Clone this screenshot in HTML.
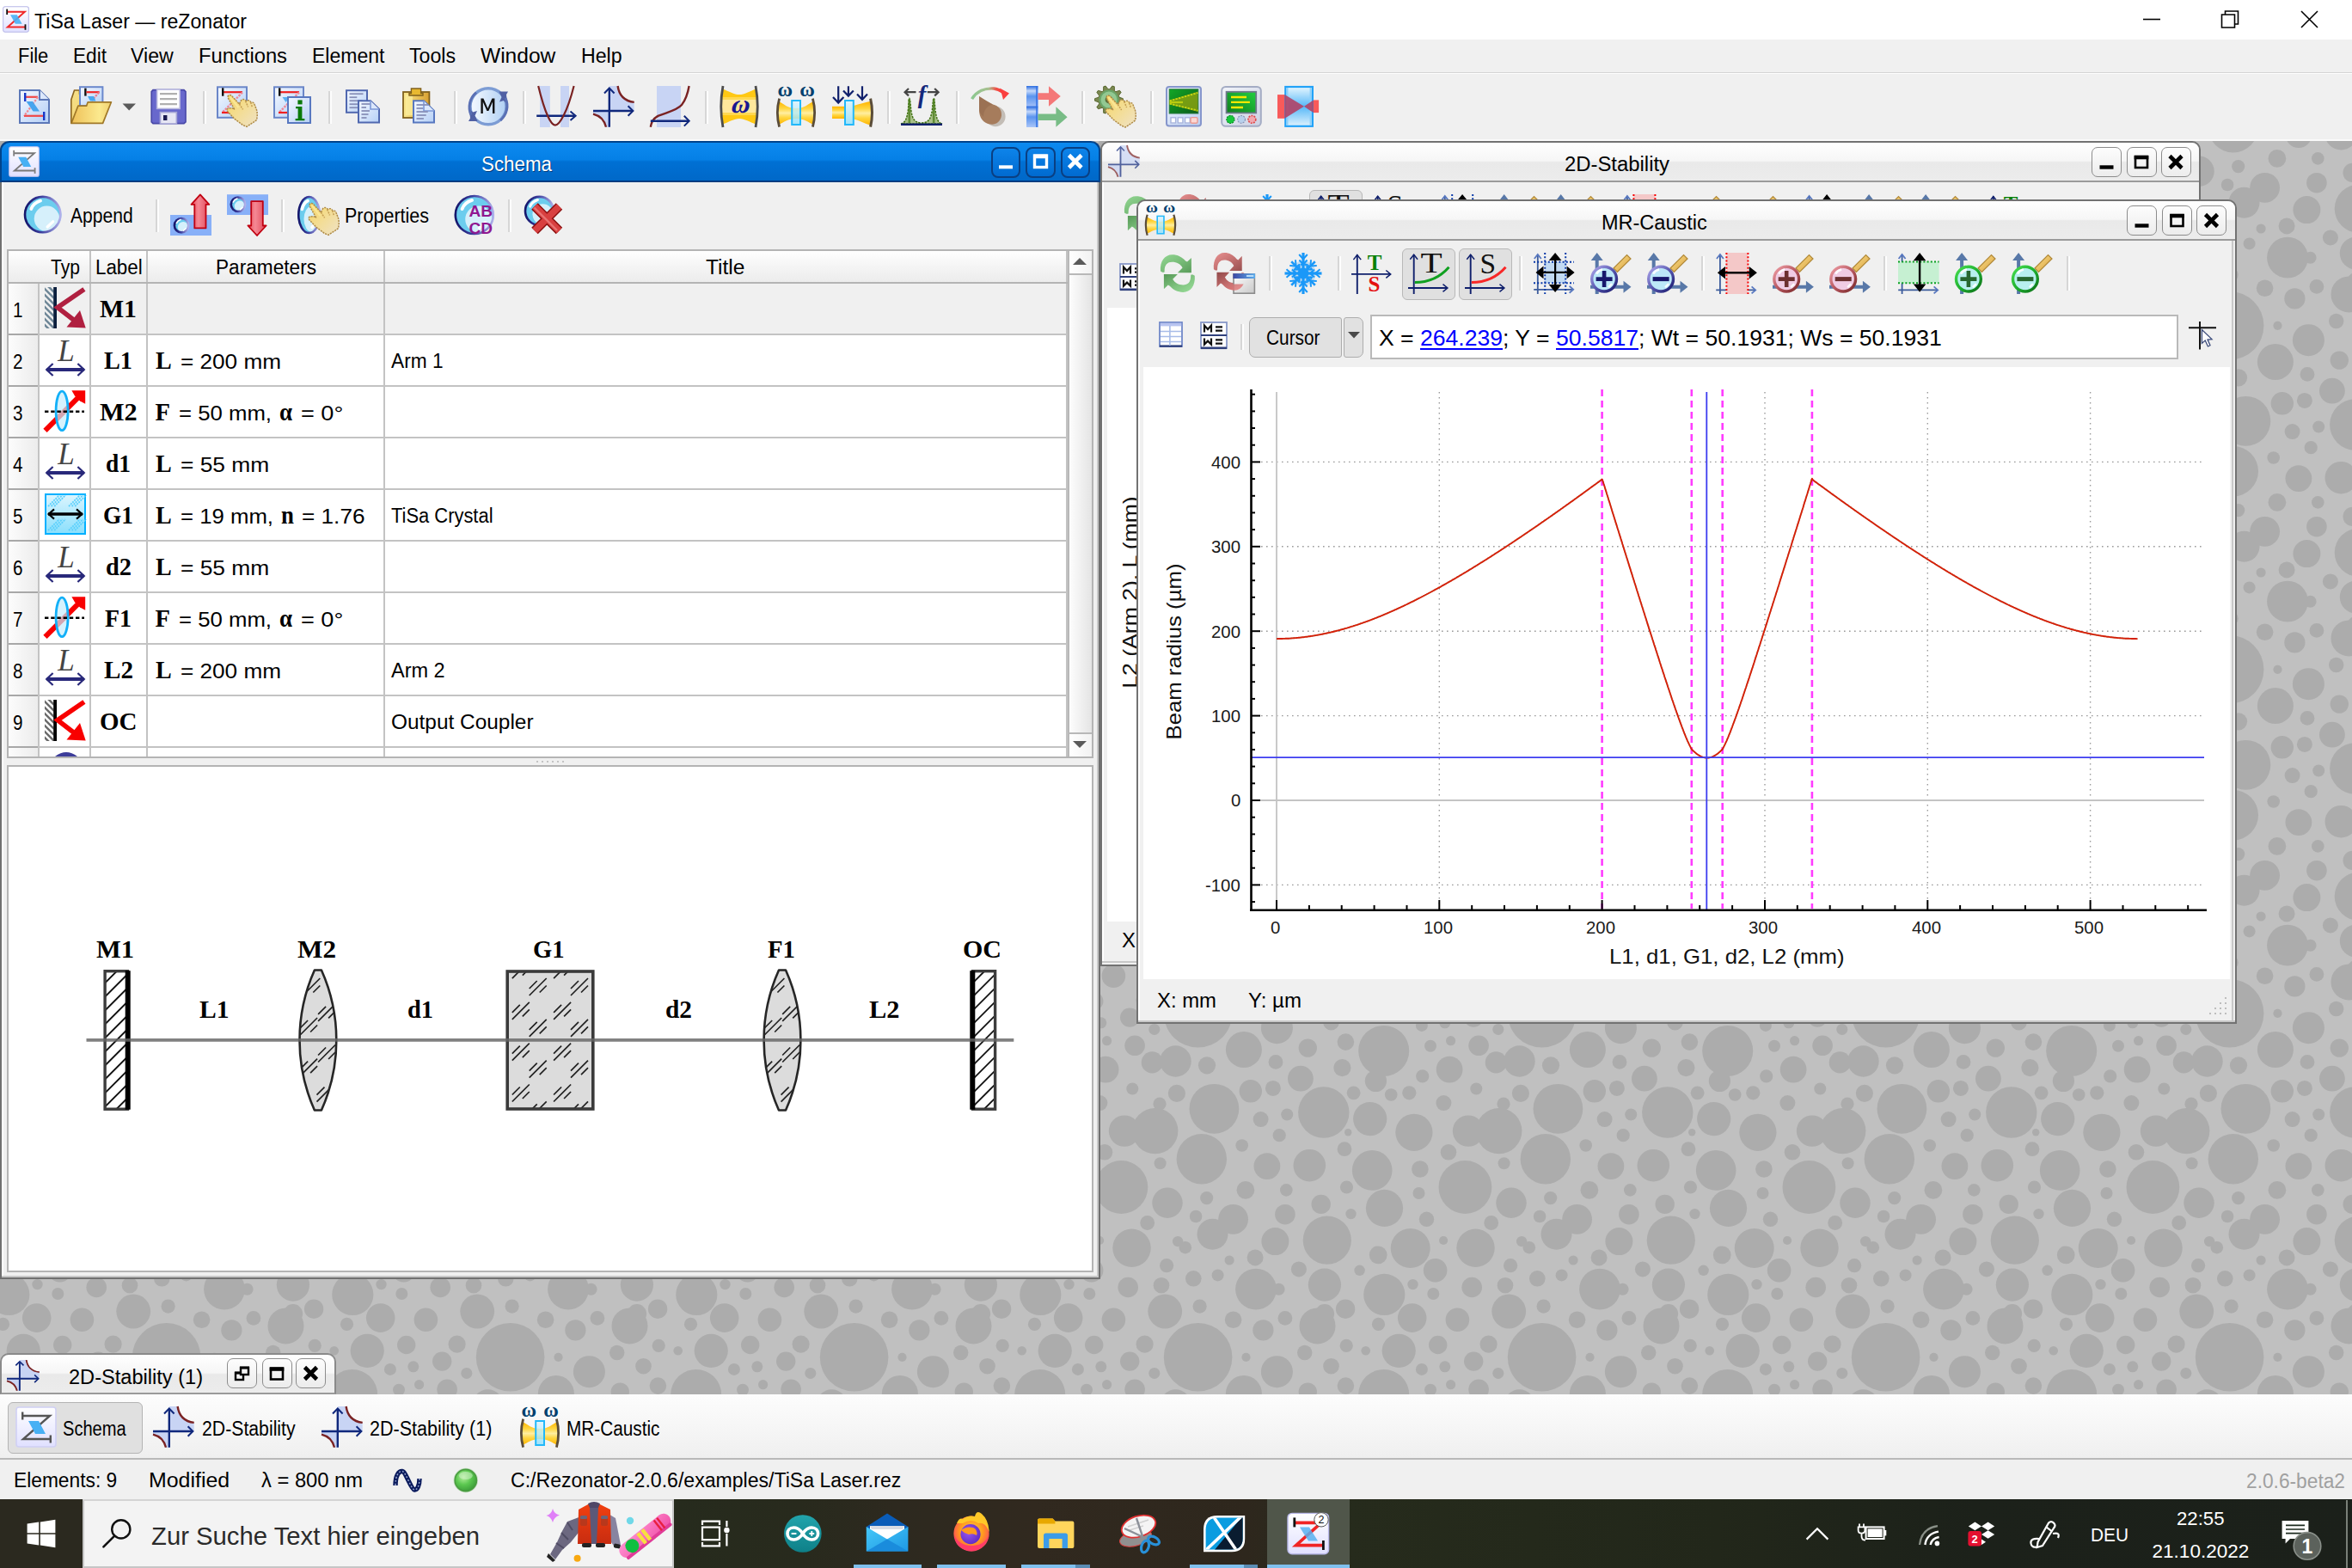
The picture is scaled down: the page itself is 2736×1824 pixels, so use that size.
<!DOCTYPE html><html><head><meta charset="utf-8"><title>TiSa Laser — reZonator</title><style>
*{box-sizing:border-box;margin:0;padding:0}
html,body{width:2736px;height:1824px;overflow:hidden;background:#f0f0f0}
body{font-family:"Liberation Sans",sans-serif;font-size:23.5px;color:#000;position:relative}
.t{position:absolute;white-space:pre;transform-origin:0 50%;display:block}
.abs{position:absolute}
.sf{font-family:"Liberation Serif",serif}
svg{position:absolute;overflow:visible}
.sep{position:absolute;width:4px;margin-left:-1px;background:linear-gradient(90deg,#d6d6d6 0 2px,#fdfdfd 2px 4px)}
.wb{position:absolute;border:1.5px solid #8c8c8c;border-radius:7px;background:linear-gradient(#fdfdfd,#ececec)}
</style></head><body>
<div style="position:absolute;left:0px;top:0px;width:2736px;height:46px;background:#fff"></div>
<svg style="left:3px;top:7px" width="31" height="31" viewBox="0 0 48 48"><rect x="1" y="1" width="46" height="46" rx="3.5" fill="url(#gtitle)" stroke="#b8b8e8" stroke-width="1.6"/><path d="M8 10.5H40L9 38H41" fill="none" stroke="#f02828" stroke-width="3"/><path d="M14 16H26L35 32H23Z" fill="#48b0f4" opacity=".9"/><rect x="6.6" y="5.5" width="2.8" height="10" fill="#111"/><rect x="39.6" y="33" width="2.8" height="10" fill="#111"/></svg>
<span class="t" style="left:40.00px;top:13.51px;font-size:23.5px;line-height:23.5px;transform:scaleX(0.9833);">TiSa Laser — reZonator</span>
<svg style="left:0;top:0" width="2736" height="46" viewBox="0 0 2736 46"><g stroke="#000" stroke-width="1.6" fill="none"><path d="M2493 22.5h20"/><path d="M2584.5 17h15v15h-15z M2588.5 17v-4h15v15h-4"/><path d="M2677 13l19 19M2696 13l-19 19"/></g></svg>
<div style="position:absolute;left:0px;top:46px;width:2736px;height:39px;background:#f0f0f0"></div>
<span class="t" style="left:20.70px;top:53.51px;font-size:23.5px;line-height:23.5px;transform:scaleX(0.9322);">File</span>
<span class="t" style="left:85.00px;top:53.51px;font-size:23.5px;line-height:23.5px;transform:scaleX(0.9631);">Edit</span>
<span class="t" style="left:152.30px;top:53.51px;font-size:23.5px;line-height:23.5px;transform:scaleX(0.9839);">View</span>
<span class="t" style="left:231.00px;top:53.51px;font-size:23.5px;line-height:23.5px;transform:scaleX(1.0110);">Functions</span>
<span class="t" style="left:363.30px;top:53.51px;font-size:23.5px;line-height:23.5px;transform:scaleX(0.9790);">Element</span>
<span class="t" style="left:476.00px;top:53.51px;font-size:23.5px;line-height:23.5px;transform:scaleX(0.9843);">Tools</span>
<span class="t" style="left:558.70px;top:53.51px;font-size:23.5px;line-height:23.5px;transform:scaleX(1.0445);">Window</span>
<span class="t" style="left:675.70px;top:53.51px;font-size:23.5px;line-height:23.5px;transform:scaleX(0.9849);">Help</span>
<div style="position:absolute;left:0px;top:84px;width:2736px;height:2px;background:linear-gradient(#d4d4d4 0 1px,#fff 1px 2px)"></div>
<div style="position:absolute;left:0px;top:86px;width:2736px;height:79px;background:#f0f0f0"></div>
<svg width="0" height="0" style="position:absolute"><defs>
<linearGradient id="gpage" x1="0" y1="0" x2="1" y2="1"><stop offset="0" stop-color="#f4f8ff"/><stop offset="1" stop-color="#b4cff6"/></linearGradient>
<linearGradient id="gfold" x1="0" y1="0" x2="1" y2="1"><stop offset="0" stop-color="#f6e08a"/><stop offset=".5" stop-color="#f4d878"/><stop offset="1" stop-color="#d8a840"/></linearGradient>
<linearGradient id="gfoldf" x1="0" y1="0" x2="1" y2="0"><stop offset="0" stop-color="#eec058"/><stop offset=".7" stop-color="#fbe98e"/><stop offset="1" stop-color="#f0d070"/></linearGradient>
<linearGradient id="gclip" x1="0" y1="0" x2="1" y2="0"><stop offset="0" stop-color="#fbe98e"/><stop offset="1" stop-color="#d8a030"/></linearGradient>
<radialGradient id="glens" cx=".62" cy=".62" r=".62"><stop offset="0" stop-color="#e2f5fd"/><stop offset=".62" stop-color="#d0effb"/><stop offset=".68" stop-color="#74cfee"/><stop offset="1" stop-color="#52b8e4"/></radialGradient>
<linearGradient id="glensb" x1="0" y1="0" x2="1" y2="0"><stop offset="0" stop-color="#15156a"/><stop offset=".45" stop-color="#3c3c9c"/><stop offset="1" stop-color="#b0b0ea"/></linearGradient>
<linearGradient id="gM" x1="0" y1="0" x2="1" y2="0"><stop offset="0" stop-color="#f6faff"/><stop offset="1" stop-color="#b0d0f4"/></linearGradient>
<linearGradient id="gredarr" x1="0" y1="0" x2="1" y2="0"><stop offset="0" stop-color="#e8505c"/><stop offset=".4" stop-color="#f58894"/><stop offset="1" stop-color="#e04858"/></linearGradient>
<linearGradient id="gbeam" x1="0" y1="0" x2="0" y2="1"><stop offset="0" stop-color="#ffb400"/><stop offset=".3" stop-color="#ffd640"/><stop offset=".5" stop-color="#ffeea0"/><stop offset=".7" stop-color="#ffd640"/><stop offset="1" stop-color="#ffb400"/></linearGradient>
<linearGradient id="ggreen" x1="0" y1="0" x2="1" y2="1"><stop offset="0" stop-color="#12a826"/><stop offset="1" stop-color="#0a5a18"/></linearGradient>
<linearGradient id="ggreen2" x1="0" y1="1" x2="1" y2="0"><stop offset="0" stop-color="#0f7c1e"/><stop offset="1" stop-color="#22d040"/></linearGradient>
<linearGradient id="gcry" x1="0" y1="0" x2="0" y2="1"><stop offset="0" stop-color="#e6f6fe"/><stop offset=".5" stop-color="#56b8f8"/><stop offset="1" stop-color="#e0f2fd"/></linearGradient>
<linearGradient id="gcry2" x1="0" y1="0" x2="0" y2="1"><stop offset="0" stop-color="#dcf5fe"/><stop offset="1" stop-color="#8adffc"/></linearGradient>
<linearGradient id="gbluebar" x1="0" y1="0" x2="0" y2="1"><stop offset="0" stop-color="#2a6ce0"/><stop offset=".12" stop-color="#c4d8fa"/><stop offset=".25" stop-color="#5a94ee"/><stop offset=".48" stop-color="#9ebcf6"/><stop offset=".5" stop-color="#2a6ce0"/><stop offset=".62" stop-color="#c4d8fa"/><stop offset=".75" stop-color="#5a94ee"/><stop offset="1" stop-color="#a8c4f8"/></linearGradient>
<linearGradient id="ghand" x1="0" y1="0" x2="1" y2="1"><stop offset="0" stop-color="#f6d460"/><stop offset=".4" stop-color="#f4dc8c"/><stop offset="1" stop-color="#efe2c6"/></linearGradient>
<linearGradient id="gcurve" x1="0" y1="0" x2="1" y2="0"><stop offset="0" stop-color="#8cc890"/><stop offset=".55" stop-color="#a8c090"/><stop offset=".8" stop-color="#f05048"/><stop offset="1" stop-color="#ff3838"/></linearGradient>
<linearGradient id="gdev" x1="0" y1="0" x2="1" y2="1"><stop offset="0" stop-color="#f0f4fc"/><stop offset="1" stop-color="#bcd0f2"/></linearGradient>
<linearGradient id="gdev2" x1="0" y1="0" x2="1" y2="1"><stop offset="0" stop-color="#f2f4fa"/><stop offset="1" stop-color="#ccd2e4"/></linearGradient>
<linearGradient id="gtitle" x1="0" y1="0" x2="0" y2="1"><stop offset="0" stop-color="#fff"/><stop offset="1" stop-color="#e0e0ff"/></linearGradient>
<radialGradient id="ggrn" cx=".4" cy=".35" r=".7"><stop offset="0" stop-color="#b8f0a0"/><stop offset=".5" stop-color="#5cc850"/><stop offset="1" stop-color="#3a9a38"/></radialGradient>
</defs></svg>
<svg style="left:16px;top:100px" width="48" height="48" viewBox="0 0 48 48"><path d="M7 5H30L41 16V43H7Z" fill="url(#gpage)" stroke="#5c78b8" stroke-width="2"/><path d="M30 5V16H41" fill="#e8f0fe" stroke="#5c78b8" stroke-width="2"/><path d="M31 6L40 15H31z" fill="#dce8fc"/><path d="M14 12.8H28" stroke="#f04848" stroke-width="2.2"/><path d="M28 13L12 35" stroke="#f08890" stroke-width="2.2" stroke-dasharray="2.4 1.4"/><path d="M12 34.8H34" stroke="#f04848" stroke-width="2.2"/><path d="M14.5 18L22 18L30 29.6L22.5 29.6Z" fill="#48a4ee"/><rect x="12" y="8" width="2.4" height="10" fill="#1838c8"/><rect x="34" y="30" width="2.4" height="10" fill="#1838c8"/></svg>
<svg style="left:82px;top:100px" width="48" height="48" viewBox="0 0 48 48"><path d="M0.8 43V16L4.5 5H10.5V9H37V43Z" fill="url(#gfold)" stroke="#8a6420" stroke-width="1.6"/><rect x="11" y="1.2" width="26.4" height="22" fill="url(#gpage)" stroke="#6a88cc" stroke-width="2"/><rect x="16.2" y="2.6" width="2.4" height="9" fill="#111"/><path d="M18.5 7.2H33.6" stroke="#f02828" stroke-width="2.2"/><path d="M33 7.5L25 17" stroke="#f07888" stroke-width="2.2" stroke-dasharray="2.4 1.2"/><path d="M20 12H27L29.5 17.5H23z" fill="#48a8f0"/><path d="M1 43.4L8.8 23.2H18.6L20.2 18.8H47.4L37.6 43.4Z" fill="url(#gfoldf)" stroke="#a07828" stroke-width="1.7" stroke-linejoin="round"/></svg>
<svg style="left:172px;top:100px" width="48" height="48" viewBox="0 0 48 48"><path d="M6 4.6H42L44 6.6V41.8L42 43.6H6L4.2 41.8V6.6Z" fill="#6868cc" stroke="#4848a8" stroke-width="1.6"/><rect x="10.6" y="4" width="26.6" height="22.4" fill="#fff" stroke="#b4b4dc" stroke-width="1.6"/><path d="M14 9.2H34M14 15.2H34M14 21.2H34" stroke="#b0b0b0" stroke-width="2.2"/><rect x="14.4" y="30.6" width="19" height="13.4" fill="#e6e6f4" stroke="#a4a4d4" stroke-width="1.6"/><rect x="18" y="34" width="4.4" height="6" fill="#1a1a50"/></svg>
<svg style="left:252px;top:100px" width="48" height="48" viewBox="0 0 48 48"><rect x="1" y="1.3" width="34" height="35.5" fill="url(#gpage)" stroke="#6a86c8" stroke-width="2"/><path d="M8 7.2H30" stroke="#f02020" stroke-width="2.2"/><path d="M30 7.5L6.5 31" stroke="#ee8898" stroke-width="2.4" stroke-dasharray="2.5 1.2"/><path d="M6 31H30" stroke="#f02020" stroke-width="2.2"/><path d="M11 14l8 0 l-6 8 l-8 0z" fill="#48a8f0" opacity=".0"/><rect x="6" y="2.3" width="2.4" height="9.4" fill="#111"/><g transform="translate(0.0,0.0)"><path d="M13.2 12.6Q13 10.4 15.4 10.4L17 11L26.4 21L28.6 16.6Q31 14.4 33.4 16.6L34.6 17.4Q37.4 15.6 39.2 18L40 19Q43 18.4 44 21.2L46.6 28Q48 34 46.4 39.6L42.6 42.4L35 47.4L30.4 45.4L21 38.4L16.4 33.6L12.6 29.4Q11.4 27.2 13.4 26L17.6 25.6L20.6 27L13.6 14.6Z" fill="url(#ghand)" stroke="#b08c48" stroke-width="1.5" stroke-dasharray="2.2 1" stroke-linejoin="round"/><path d="M26.4 21L30.6 27.4M33.6 17.6L36.6 24.4M39.6 19.2L41.4 24.6" stroke="#c49c50" stroke-width="1.5" stroke-dasharray="2 1.2" fill="none"/><path d="M15.6 12.4L25.4 25" stroke="#fbe89a" stroke-width="2.4" opacity=".8" fill="none"/></g></svg>
<svg style="left:318px;top:100px" width="48" height="48" viewBox="0 0 48 48"><rect x="1" y="1.3" width="34" height="35.5" fill="url(#gpage)" stroke="#6a86c8" stroke-width="2"/><path d="M8 7.2H30" stroke="#f02020" stroke-width="2.2"/><path d="M30 7.5L6.5 31" stroke="#ee8898" stroke-width="2.4" stroke-dasharray="2.5 1.2"/><path d="M6 31H30" stroke="#f02020" stroke-width="2.2"/><path d="M11 14l8 0 l-6 8 l-8 0z" fill="#48a8f0" opacity=".0"/><rect x="6" y="2.3" width="2.4" height="9.4" fill="#111"/><path d="M10.5 13H19L14.5 19z" fill="#58b0f4"/><rect x="17" y="13" width="26" height="30" fill="url(#gpage)" stroke="#5878c0" stroke-width="2"/><rect x="28.4" y="16.4" width="5.2" height="5" fill="#0a7a0a"/><path d="M26 24H33.4V38H36.4V40.2H25.6V38H28.6V26.2H26Z" fill="#0a7a0a"/></svg>
<svg style="left:398px;top:100px" width="48" height="48" viewBox="0 0 48 48"><rect x="5" y="5.2" width="24" height="25.6" fill="url(#gpage)" stroke="#5068b0" stroke-width="2"/><path d="M8.5 9.2h16.0" stroke="#8890b8" stroke-width="1.8"/><path d="M8.5 13.2h8.8" stroke="#8890b8" stroke-width="1.8"/><path d="M8.5 17.2h15.2" stroke="#8890b8" stroke-width="1.8"/><path d="M8.5 21.2h12.8" stroke="#8890b8" stroke-width="1.8"/><path d="M8.5 25.2h9.6" stroke="#8890b8" stroke-width="1.8"/><path d="M19 17.3H33L43 27V42.6H19Z" fill="url(#gpage)" stroke="#5068b0" stroke-width="2"/><path d="M33 17.3V27H43" fill="#dce8fc" stroke="#7c98d8" stroke-width="1.6"/><path d="M22.5 21h10.0" stroke="#8890b8" stroke-width="1.8"/><path d="M22.5 25h5.5" stroke="#8890b8" stroke-width="1.8"/><path d="M22.5 29h9.5" stroke="#8890b8" stroke-width="1.8"/><path d="M22.5 33h8.0" stroke="#8890b8" stroke-width="1.8"/><path d="M22.5 37h6.0" stroke="#8890b8" stroke-width="1.8"/></svg>
<svg style="left:464px;top:100px" width="48" height="48" viewBox="0 0 48 48"><rect x="5" y="7" width="30.4" height="30" fill="url(#gclip)" stroke="#80601c" stroke-width="1.8"/><rect x="8" y="10" width="8" height="24" fill="#fbeea0" opacity=".7"/><path d="M14.4 3H25.6V8.6H28V11H12V8.6H14.4Z" fill="#e8b830" stroke="#80601c" stroke-width="1.4"/><path d="M17 17.3H29L41 29V42.6H17Z" fill="url(#gpage)" stroke="#5878c0" stroke-width="2"/><path d="M29 17.3V29H41" fill="#dce8fc" stroke="#7c98d8" stroke-width="1.6"/><path d="M20.5 22h14.0" stroke="#8890b8" stroke-width="1.8"/><path d="M20.5 26h7.7" stroke="#8890b8" stroke-width="1.8"/><path d="M20.5 30h13.3" stroke="#8890b8" stroke-width="1.8"/><path d="M20.5 34h11.2" stroke="#8890b8" stroke-width="1.8"/><path d="M20.5 38h8.4" stroke="#8890b8" stroke-width="1.8"/></svg>
<svg style="left:544px;top:100px" width="48" height="48" viewBox="0 0 48 48"><circle cx="24" cy="23.8" r="21" fill="url(#gM)" stroke="#7c9cd4" stroke-width="3.4"/><path d="M36.5 6.6H47L45 10L46 21L42 17L37 18.5L39.5 13Z" fill="#5060a4"/><path d="M11.5 41H1L3 37.6L2 26.6L6 30.6L11 29L8.5 34.6Z" fill="#5060a4"/><path d="M44 14A22 22 0 0 1 38 40" fill="none" stroke="#5a70b4" stroke-width="3"/><path d="M4 33.6A22 22 0 0 1 10 7.6" fill="none" stroke="#5a70b4" stroke-width="3"/><path d="M15.4 32V14.5H18.4L23.4 26L28.4 14.5H31.4V32H29V18.6L24.4 29H22.4L17.8 18.6V32Z" fill="#111"/></svg>
<svg style="left:624px;top:100px" width="48" height="48" viewBox="0 0 48 48"><rect x="4" y="0" width="11.8" height="48" fill="#c8d4f4"/><rect x="28" y="0" width="10" height="48" fill="#c8d4f4"/><path d="M0.2 34.8H44" stroke="#10287c" stroke-width="2.4"/><path d="M39.5 29.6L45.6 34.8L39.5 40" fill="none" stroke="#10287c" stroke-width="2"/><path d="M2.2 0C10 32 17 45.6 21.8 45.6C27 45.6 36 30 43.6 0" fill="none" stroke="#7a2222" stroke-width="2.2"/></svg>
<svg style="left:690px;top:100px" width="48" height="48" viewBox="0 0 48 48"><path d="M18.8 0H28.6C30 10 36 17.5 47.7 18.9V29H18.8Z" fill="#c8d4f4"/><path d="M18.8 29V47.7H15C13 40 8 34.5 0 32.6V29Z" fill="#c8d4f4"/><path d="M28.6 0C30 10 36 17.5 47.7 18.9" fill="none" stroke="#7a2222" stroke-width="2.4"/><path d="M0 32.6C8 34.5 13 40 15 47.7" fill="none" stroke="#7a2222" stroke-width="2.4"/><path d="M18.8 3V47.7M0 29H46" stroke="#10287c" stroke-width="2.4"/><path d="M13 8.5L18.8 2.5L24.6 8.5M40.6 23.2L46.4 29L40.6 34.8" fill="none" stroke="#10287c" stroke-width="2"/></svg>
<svg style="left:756px;top:100px" width="48" height="48" viewBox="0 0 48 48"><rect x="8" y="0" width="28" height="48" fill="#c8d4f4"/><path d="M0.8 47.7C2 40 5 37 10 34.6C22 30 32 28 37 22C41 17 44 9 45.6 0" fill="none" stroke="#7a2222" stroke-width="2.4"/><path d="M0.8 40.7H45" stroke="#10287c" stroke-width="2.4"/><path d="M39.8 34.8L45.7 40.7L39.8 46.6" fill="none" stroke="#10287c" stroke-width="2"/></svg>
<svg style="left:836px;top:100px" width="48" height="48" viewBox="0 0 48 48"><path d="M4.6 3.4C12 6 18 10 24 10C30 10 36 6 43.4 3.4Q46.4 24 43.4 44.6C36 42 30 38 24 38C18 38 12 42 4.6 44.6Q1.6 24 4.6 3.4Z" fill="#ffc814"/><path d="M3.4 15.5H44.6V31.6H3.4Z" fill="#ffe89c"/><path d="M3.4 13H44.6V15.5H3.4ZM3.4 31.6H44.6V34H3.4Z" fill="#ffd850"/><path d="M5 0Q0.5 24.0 5 48" fill="none" stroke="#4c4c4c" stroke-width="2.8"/><path d="M43 0Q47.5 24.0 43 48" fill="none" stroke="#4c4c4c" stroke-width="2.8"/><text x="24.2" y="31.4" font-family="Liberation Serif" font-weight="700" font-size="30" text-anchor="middle" fill="#181890" transform="translate(7.5,0) skewX(-14)">ω</text></svg>
<svg style="left:902px;top:100px" width="48" height="48" viewBox="0 0 48 48"><path d="M4 18C10 21 14 26 24 26C34 26 38 21 44 18Q46.5 31 44 45C38 42 34 38 24 38C14 38 10 42 4 45Q1.5 31 4 18Z" fill="url(#gbeam)"/><path d="M4.6 14.6Q0.10000000000000009 31.150000000000002 4.6 47.7" fill="none" stroke="#5a4c38" stroke-width="2.8"/><path d="M43.4 14.6Q47.9 31.150000000000002 43.4 47.7" fill="none" stroke="#5a4c38" stroke-width="2.8"/><rect x="19.2" y="17" width="9.8" height="28" fill="url(#gcry2)" fill-opacity=".78" stroke="#22b8fa" stroke-width="2"/><text x="11.2" y="11.6" font-family="Liberation Serif" font-weight="700" font-size="24" text-anchor="middle" fill="#00406e">ω</text><text x="37" y="11.6" font-family="Liberation Serif" font-weight="700" font-size="24" text-anchor="middle" fill="#00406e">ω</text></svg>
<svg style="left:968px;top:100px" width="48" height="48" viewBox="0 0 48 48"><path d="M0 23.8H15V38H0Z" fill="url(#gbeam)"/><path d="M25 23C32 21 38 19 44 18Q46.6 31 44 45.6C38 44 32 40 25 38.6Z" fill="url(#gbeam)"/><path d="M44.6 14.6Q48.4 31 44.6 47.7" fill="none" stroke="#5a4c38" stroke-width="3"/><rect x="15" y="17" width="9.8" height="28" fill="url(#gcry2)" fill-opacity=".78" stroke="#22b8fa" stroke-width="2"/><g stroke="#10206c" stroke-width="2.2" fill="none"><path d="M7.2 0.3V19.5M1 13L7.2 19.6L13.4 13"/><path d="M18.9 0.3V11.5M13 5.5L18.9 11.6L24.8 5.5"/><path d="M35 0.3V15.6M29 9.6L35 15.8L41 9.6"/></g></svg>
<svg style="left:1048px;top:100px" width="48" height="48" viewBox="0 0 48 48"><path d="M0 44C5 43 7 38 8.4 28C9 20 9.4 14.3 9.8 14.3C10.4 14.3 11 20 11.8 28C13 38 16 43 24 43C32 43 35 38 36.4 28C37.2 20 37.6 14.3 38.2 14.3C38.8 14.3 39.2 20 40 28C41.4 38 43 43 48 44Z" fill="#a9c088" stroke="#3e7010" stroke-width="1.5" stroke-dasharray="2.4 1.2"/><path d="M9.8 15V43M38.2 15V43" stroke="#4e8020" stroke-width="2.6" opacity=".8"/><path d="M0 44.8H48" stroke="#10206c" stroke-width="2.4"/><text x="24.6" y="19.6" font-family="Liberation Serif" font-style="italic" font-weight="700" font-size="28.5" text-anchor="middle" fill="#14287c">f</text><g stroke="#444" stroke-width="2.2" fill="none"><path d="M4.5 7.2H17.5M9 3L4.6 7.2L9 11.4"/><path d="M30.8 7.2H43.6M39.2 3L43.6 7.2L39.2 11.4"/></g></svg>
<svg style="left:1128px;top:100px" width="48" height="48" viewBox="0 0 48 48"><ellipse cx="30" cy="35.5" rx="11.6" ry="11.8" fill="#b8b0a8" opacity=".8"/><path d="M11 12C17 16 22 19 27 21.4C34 23 37.6 28 37 34.6C36 42 30 45.6 24 44.6C16 43.6 11 37 11 28Z" fill="#a67c5c"/><path d="M11 12C17 16 22 19 27 21.4C20 23 16 28 16 36C13 33 11 30 11 28Z" fill="#946a4c" opacity=".6"/><path d="M2.6 15.2C8 6 18 2.4 28 3C32 3.4 35 4.6 38 7" fill="none" stroke="url(#gcurve)" stroke-width="3.4"/><path d="M35 2.6L46 8.4L39 16L37.6 10.6Z" fill="#fa4040"/></svg>
<svg style="left:1194px;top:100px" width="48" height="48" viewBox="0 0 48 48"><rect x="0" y="0" width="13.4" height="48" fill="url(#gbluebar)"/><rect x="11" y="0" width="2.4" height="48" fill="#2f6fe4" opacity=".75"/><path d="M13.4 8.2H26V0.3L39.8 12L26 23.8V16H13.4Z" fill="#f47878"/><path d="M13.4 32.6H34.4V24.3L47.6 36.2L34.4 47.7V39.9H13.4Z" fill="#78bc86"/></svg>
<svg style="left:1274px;top:100px" width="48" height="48" viewBox="0 0 48 48"><polygon points="32.4,14.7 32.5,17.3 27.9,18.8 27.3,20.7 30.1,24.6 28.6,26.7 23.9,25.3 22.4,26.4 22.3,31.2 19.9,32.0 17.0,28.2 15.1,28.2 12.2,32.0 9.7,31.3 9.6,26.4 8.1,25.3 3.5,26.7 1.9,24.6 4.7,20.7 4.1,18.9 -0.4,17.3 -0.5,14.7 4.1,13.2 4.7,11.3 1.9,7.4 3.4,5.3 8.1,6.7 9.6,5.6 9.7,0.8 12.1,-0.0 15.0,3.8 16.9,3.8 19.8,-0.0 22.3,0.7 22.4,5.6 23.9,6.7 28.5,5.3 30.1,7.4 27.3,11.3 27.9,13.1" fill="#7a8850" stroke="#5a6830" stroke-width="1"/><circle cx="16" cy="16" r="10.4" fill="#92c892" stroke="#6aa468" stroke-width="2"/><circle cx="16" cy="16" r="4.4" fill="#5a6c38"/><g transform="translate(0.0,0.6)"><path d="M13.2 12.6Q13 10.4 15.4 10.4L17 11L26.4 21L28.6 16.6Q31 14.4 33.4 16.6L34.6 17.4Q37.4 15.6 39.2 18L40 19Q43 18.4 44 21.2L46.6 28Q48 34 46.4 39.6L42.6 42.4L35 47.4L30.4 45.4L21 38.4L16.4 33.6L12.6 29.4Q11.4 27.2 13.4 26L17.6 25.6L20.6 27L13.6 14.6Z" fill="url(#ghand)" stroke="#b08c48" stroke-width="1.5" stroke-dasharray="2.2 1" stroke-linejoin="round"/><path d="M26.4 21L30.6 27.4M33.6 17.6L36.6 24.4M39.6 19.2L41.4 24.6" stroke="#c49c50" stroke-width="1.5" stroke-dasharray="2 1.2" fill="none"/><path d="M15.6 12.4L25.4 25" stroke="#fbe89a" stroke-width="2.4" opacity=".8" fill="none"/></g></svg>
<svg style="left:1354px;top:100px" width="48" height="48" viewBox="0 0 48 48"><rect x="3" y="1" width="40" height="45.6" rx="3" fill="url(#gdev)" stroke="#8696cc" stroke-width="2"/><rect x="6.2" y="3.8" width="33.6" height="28.2" fill="url(#ggreen)" stroke="#2a7a40" stroke-width="1"/><path d="M6.6 16.5L39.4 6.5V30L6.6 21.5Z" fill="#8ca410" opacity=".82"/><path d="M6.6 17.4L39.4 8M6.6 20.6L39.4 28.6" stroke="#c8d810" stroke-width="1.8" stroke-dasharray="2.4 1.2" fill="none"/><path d="M6.6 19H22" stroke="#b8cc10" stroke-width="2.2"/><rect x="8" y="36.8" width="5.6" height="6.2" fill="#fff" stroke="#a8b4dc" stroke-width="1.4"/><rect x="16.3" y="36.8" width="5.6" height="6.2" fill="#fff" stroke="#a8b4dc" stroke-width="1.4"/><rect x="24.6" y="36.8" width="5.6" height="6.2" fill="#fff" stroke="#a8b4dc" stroke-width="1.4"/><rect x="31" y="36.6" width="8" height="6.6" rx="1.5" fill="#fcd8d4" stroke="#e89890" stroke-width="1.4"/></svg>
<svg style="left:1420px;top:100px" width="48" height="48" viewBox="0 0 48 48"><rect x="1.2" y="1" width="45.6" height="45.8" rx="4.5" fill="url(#gdev2)" stroke="#a4acc4" stroke-width="2"/><rect x="6.6" y="6.8" width="34.6" height="24.6" fill="url(#ggreen2)" stroke="#70788c" stroke-width="1.8"/><path d="M12 13H30M12 18.9H33.9M12 25H26" stroke="#f8e800" stroke-width="2.4"/><circle cx="11.4" cy="38.9" r="4.6" fill="#18c83c" stroke="#108828" stroke-width="1.2" stroke-dasharray="2 1.2"/><circle cx="24.1" cy="38.9" r="4.4" fill="#b8d0ec" stroke="#8894b4" stroke-width="1.2" stroke-dasharray="2 1.2"/><circle cx="36.4" cy="38.9" r="4.4" fill="#f0a8b0" stroke="#e04848" stroke-width="1.6" stroke-dasharray="2 1.2"/></svg>
<svg style="left:1486px;top:100px" width="48" height="48" viewBox="0 0 48 48"><path d="M0 10.1H9.5V37.8H0Z" fill="#f85a5a"/><path d="M41.8 16.4H48.1V31.1H41.8Z" fill="#f85a5a"/><rect x="9.3" y="1" width="31.6" height="45.8" fill="url(#gcry)" stroke="#22a2f8" stroke-width="2.2"/><path d="M11.5 2V46" stroke="#8cd0fa" stroke-width="2"/><path d="M38.6 2V46" stroke="#8cd0fa" stroke-width="2"/><path d="M8.4 10.1L31 23.8L41.8 16.4V31.1L31 23.8L8.4 37.8Z" fill="#b04468" opacity=".92"/></svg>
<svg style="left:142px;top:120px" width="17" height="10"><path d="M0.5 0.5H16L8.2 8.6Z" fill="#5a5a5a"/></svg>
<div class="sep" style="left:236.8px;top:106px;height:38px"></div>
<div class="sep" style="left:382.8px;top:106px;height:38px"></div>
<div class="sep" style="left:528.8px;top:106px;height:38px"></div>
<div class="sep" style="left:609px;top:106px;height:38px"></div>
<div class="sep" style="left:821px;top:106px;height:38px"></div>
<div class="sep" style="left:1033px;top:106px;height:38px"></div>
<div class="sep" style="left:1113px;top:106px;height:38px"></div>
<div class="sep" style="left:1258.8px;top:106px;height:38px"></div>
<div class="sep" style="left:1339px;top:106px;height:38px"></div>
<svg style="left:0;top:164px" width="2736" height="1458" viewBox="0 164 2736 1458"><defs><pattern id="bub" x="0" y="0" width="400" height="400" patternUnits="userSpaceOnUse"><rect width="400" height="400" fill="#c0c0c0"/><g fill="#acacac"><circle cx="64.0" cy="16.8" r="7.0"/><circle cx="87.6" cy="10.7" r="5.6"/><circle cx="120.1" cy="16.3" r="11.8"/><circle cx="86.1" cy="44.1" r="15.4"/><circle cx="54.7" cy="51.9" r="7.6"/><circle cx="18.2" cy="73.5" r="7.3"/><circle cx="39.3" cy="71.3" r="8.1"/><circle cx="79.4" cy="83.1" r="9.0"/><circle cx="117.3" cy="66.5" r="7.0"/><circle cx="140.3" cy="35.9" r="12.6"/><circle cx="167.5" cy="34.5" r="18.2"/><circle cx="204.0" cy="39.3" r="10.1"/><circle cx="193.6" cy="-21.2" r="39.8"/><circle cx="193.6" cy="378.8" r="39.8"/><circle cx="246.9" cy="21.0" r="21.0"/><circle cx="284.0" cy="35.4" r="8.4"/><circle cx="285.4" cy="-4.3" r="18.5"/><circle cx="285.4" cy="395.7" r="18.5"/><circle cx="321.3" cy="19.1" r="10.7"/><circle cx="365.4" cy="12.1" r="9.8"/><circle cx="361.4" cy="42.1" r="10.1"/><circle cx="312.9" cy="54.7" r="14.9"/><circle cx="9.7" cy="22.4" r="29.5"/><circle cx="9.7" cy="422.4" r="29.5"/><circle cx="409.7" cy="22.4" r="29.5"/><circle cx="409.7" cy="422.4" r="29.5"/><circle cx="0.4" cy="57.5" r="12.6"/><circle cx="400.4" cy="57.5" r="12.6"/><circle cx="374.6" cy="71.3" r="7.9"/><circle cx="254.8" cy="69.3" r="13.2"/><circle cx="280.9" cy="65.9" r="9.0"/><circle cx="168.9" cy="71.8" r="10.1"/><circle cx="212.4" cy="89.8" r="28.9"/><circle cx="266.6" cy="102.1" r="9.0"/><circle cx="297.2" cy="96.5" r="7.0"/><circle cx="288.2" cy="120.7" r="7.6"/><circle cx="339.8" cy="94.0" r="29.7"/><circle cx="-6.3" cy="101.6" r="19.6"/><circle cx="393.7" cy="101.6" r="19.6"/><circle cx="368.2" cy="117.3" r="4.2"/><circle cx="364.0" cy="136.7" r="8.4"/><circle cx="44.9" cy="117.3" r="21.6"/><circle cx="108.0" cy="115.6" r="18.2"/><circle cx="143.7" cy="115.6" r="26.7"/><circle cx="149.0" cy="84.2" r="7.6"/><circle cx="85.0" cy="140.3" r="9.3"/><circle cx="149.6" cy="153.2" r="7.0"/><circle cx="197.8" cy="148.2" r="29.2"/><circle cx="244.7" cy="132.5" r="7.3"/><circle cx="273.9" cy="156.6" r="15.4"/><circle cx="323.3" cy="155.7" r="18.8"/><circle cx="-3.8" cy="161.4" r="23.3"/><circle cx="396.2" cy="161.4" r="23.3"/><circle cx="51.9" cy="160.0" r="9.8"/><circle cx="104.4" cy="181.0" r="30.9"/><circle cx="50.5" cy="188.0" r="7.0"/><circle cx="158.0" cy="199.2" r="17.7"/><circle cx="203.7" cy="193.6" r="7.6"/><circle cx="248.9" cy="184.4" r="10.4"/><circle cx="296.3" cy="184.4" r="7.3"/><circle cx="366.5" cy="181.0" r="7.6"/><circle cx="336.7" cy="200.9" r="11.2"/><circle cx="10.5" cy="205.4" r="21.6"/><circle cx="410.5" cy="205.4" r="21.6"/><circle cx="59.5" cy="218.3" r="8.7"/><circle cx="134.7" cy="222.5" r="8.4"/><circle cx="191.1" cy="215.0" r="7.3"/><circle cx="234.6" cy="218.3" r="17.4"/><circle cx="210.5" cy="235.7" r="18.0"/><circle cx="294.9" cy="212.7" r="11.8"/><circle cx="371.5" cy="212.1" r="6.2"/><circle cx="343.8" cy="242.7" r="28.1"/><circle cx="283.4" cy="244.1" r="16.0"/><circle cx="40.7" cy="252.0" r="23.0"/><circle cx="79.1" cy="243.0" r="5.1"/><circle cx="116.5" cy="251.7" r="22.2"/><circle cx="170.1" cy="244.1" r="6.2"/><circle cx="178.8" cy="251.2" r="7.3"/><circle cx="230.1" cy="266.0" r="5.6"/><circle cx="260.1" cy="262.9" r="9.5"/><circle cx="3.2" cy="259.8" r="10.4"/><circle cx="403.2" cy="259.8" r="10.4"/><circle cx="69.6" cy="277.8" r="13.8"/><circle cx="157.1" cy="272.2" r="8.1"/><circle cx="310.9" cy="276.4" r="9.0"/><circle cx="381.6" cy="277.8" r="6.2"/><circle cx="43.5" cy="294.1" r="6.2"/><circle cx="67.3" cy="305.0" r="7.0"/><circle cx="112.2" cy="297.5" r="11.8"/><circle cx="151.0" cy="295.2" r="9.3"/><circle cx="188.3" cy="287.3" r="9.3"/><circle cx="216.6" cy="283.4" r="7.0"/><circle cx="261.0" cy="299.7" r="23.9"/><circle cx="287.6" cy="299.7" r="7.0"/><circle cx="340.9" cy="294.6" r="19.1"/><circle cx="10.3" cy="305.9" r="24.1"/><circle cx="410.3" cy="305.9" r="24.1"/><circle cx="42.7" cy="333.1" r="16.8"/><circle cx="3.5" cy="340.4" r="7.6"/><circle cx="403.5" cy="340.4" r="7.6"/><circle cx="95.4" cy="335.3" r="13.8"/><circle cx="155.2" cy="325.5" r="19.9"/><circle cx="195.6" cy="319.6" r="8.1"/><circle cx="234.6" cy="335.3" r="9.8"/><circle cx="294.9" cy="333.4" r="8.4"/><circle cx="269.4" cy="347.4" r="12.1"/><circle cx="332.5" cy="342.4" r="21.0"/><circle cx="340.9" cy="328.3" r="11.2"/><circle cx="365.1" cy="322.7" r="11.2"/><circle cx="27.2" cy="371.3" r="19.6"/><circle cx="72.7" cy="364.5" r="10.7"/><circle cx="131.6" cy="363.7" r="10.1"/><circle cx="114.2" cy="383.6" r="11.2"/><circle cx="80.8" cy="389.8" r="6.5"/><circle cx="53.9" cy="392.9" r="7.0"/><circle cx="142.8" cy="-2.6" r="6.5"/><circle cx="142.8" cy="397.4" r="6.5"/><circle cx="249.5" cy="378.8" r="5.1"/><circle cx="317.7" cy="373.5" r="8.7"/><circle cx="348.5" cy="389.2" r="9.3"/><circle cx="366.2" cy="365.4" r="7.6"/><circle cx="388.7" cy="371.3" r="5.3"/></g></pattern></defs><rect x="0" y="164" width="2736" height="1458" fill="url(#bub)"/></svg><div style="position:absolute;left:0;top:162px;width:2736px;height:2px;background:#fafafa"></div>
<div style="position:absolute;left:1280px;top:164px;width:1280px;height:960px;background:#f0f0f0;border:2px solid #727272;border-radius:10px 10px 0 0"></div>
<div style="position:absolute;left:1282px;top:212px;width:2px;height:908px;background:#fff"></div>
<div style="position:absolute;left:1282px;top:1118px;width:1276px;height:2px;background:#c8c8c8"></div>
<div style="position:absolute;left:1282px;top:166px;width:1276px;height:45px;background:linear-gradient(#fff 0,#f6f6f6 48%,#e9e9e9 52%,#ececec 100%);border-radius:9px 9px 0 0;border-bottom:2px solid #9a9a9a;height:46px"></div>
<svg style="opacity:.7;left:1289px;top:169px" width="37" height="37" viewBox="0 0 48 48" preserveAspectRatio="none"><path d="M18.8 0H28.6C30 10 36 17.5 47.7 18.9V29H18.8Z" fill="#c8d4f4"/><path d="M18.8 29V47.7H15C13 40 8 34.5 0 32.6V29Z" fill="#c8d4f4"/><path d="M28.6 0C30 10 36 17.5 47.7 18.9" fill="none" stroke="#7a2222" stroke-width="2.4"/><path d="M0 32.6C8 34.5 13 40 15 47.7" fill="none" stroke="#7a2222" stroke-width="2.4"/><path d="M18.8 3V47.7M0 29H46" stroke="#10287c" stroke-width="2.4"/><path d="M13 8.5L18.8 2.5L24.6 8.5M40.6 23.2L46.4 29L40.6 34.8" fill="none" stroke="#10287c" stroke-width="2"/></svg>
<span class="t" style="left:1820.00px;top:179.81px;font-size:23.5px;line-height:23.5px;transform:scaleX(1.0154);">2D-Stability</span>
<div class="wb" style="left:2433px;top:171px;width:35px;height:35px"></div>
<div class="wb" style="left:2473.5px;top:171px;width:35px;height:35px"></div>
<div class="wb" style="left:2513.5px;top:171px;width:35px;height:35px"></div>
<svg style="left:0;top:0" width="2736" height="300"><g fill="none" stroke="#000" stroke-width="3.6"><path d="M2442.5 194.5h16" stroke-width="4.4"/><rect x="2484" y="182.5" width="14" height="12.5" stroke-width="2.6"/><path d="M2482.7 183h16.6" stroke-width="4.6"/><path d="M2524 181.5l14 14M2538 181.5l-14 14" stroke-width="4.6"/></g></svg>
<div style="position:absolute;left:1288px;top:358px;width:1264px;height:714px;background:#fff"></div>
<svg style="left:1304px;top:226px" width="48" height="48" viewBox="0 0 48 48"><path d="M4 21.5C3 10 9 2.3 17.5 2.3C24 2.3 29 5 33 9.4L35 10.6L39.9 5.9V23.3H23.9L29.6 17.4C27 13 23 10.8 17.5 10.8C12 10.8 8.6 14 8.6 21.5L8.4 22.7H6.2Z" fill="url(#gupd)"/><path d="M4 21.5C3 10 9 2.3 17.5 2.3C24 2.3 29 5 33 9.4L35 10.6L39.9 5.9V23.3H23.9L29.6 17.4C27 13 23 10.8 17.5 10.8C12 10.8 8.6 14 8.6 21.5L8.4 22.7H6.2Z" fill="url(#gupdb)" transform="rotate(180 23.9 24.1)"/></svg>
<svg style="left:1370px;top:226px" width="48" height="48" viewBox="0 0 48 48"><g transform="translate(-3.76,-2.2) scale(.915,1)"><path d="M4 21.5C3 10 9 2.3 17.5 2.3C24 2.3 29 5 33 9.4L35 10.6L39.9 5.9V23.3H23.9L29.6 17.4C27 13 23 10.8 17.5 10.8C12 10.8 8.6 14 8.6 21.5L8.4 22.7H6.2Z" fill="url(#gupr)"/><path d="M4 21.5C3 10 9 2.3 17.5 2.3C24 2.3 29 5 33 9.4L35 10.6L39.9 5.9V23.3H23.9L29.6 17.4C27 13 23 10.8 17.5 10.8C12 10.8 8.6 14 8.6 21.5L8.4 22.7H6.2Z" fill="url(#guprb)" transform="rotate(180 23.9 24.1)"/></g><rect x="23" y="24.8" width="24.4" height="22.4" fill="url(#gwb)" stroke="#8c8c8c" stroke-width="1.6"/><rect x="22.4" y="24.2" width="25.6" height="5.8" fill="url(#gwt)"/><rect x="38" y="26" width="8.2" height="2" fill="#b8dcf8"/><clipPath id="u2c"><path d="M22 36.6H38.6L36 45H22Z"/></clipPath><g clip-path="url(#u2c)" opacity=".85"><g transform="translate(-3.76,-2.2) scale(.915,1)"><path d="M4 21.5C3 10 9 2.3 17.5 2.3C24 2.3 29 5 33 9.4L35 10.6L39.9 5.9V23.3H23.9L29.6 17.4C27 13 23 10.8 17.5 10.8C12 10.8 8.6 14 8.6 21.5L8.4 22.7H6.2Z" fill="url(#gupr)"/><path d="M4 21.5C3 10 9 2.3 17.5 2.3C24 2.3 29 5 33 9.4L35 10.6L39.9 5.9V23.3H23.9L29.6 17.4C27 13 23 10.8 17.5 10.8C12 10.8 8.6 14 8.6 21.5L8.4 22.7H6.2Z" fill="url(#guprb)" transform="rotate(180 23.9 24.1)"/></g></g></svg>
<svg style="left:1450px;top:226px" width="48" height="48" viewBox="0 0 48 48"><g stroke="#1a98f8" fill="none" transform="translate(24,24)"><circle r="14.5" fill="#1a98f8" stroke="none" opacity=".22"/><g transform="rotate(0)"><path d="M0 0V-24" stroke-width="3.2"/><path d="M-4.8 -22L0 -16.5L4.8 -22M-4.6 -15.5L0 -10.5L4.6 -15.5" stroke-width="2"/></g><g transform="rotate(45)"><path d="M0 0V-19.5" stroke-width="2.6"/><path d="M-4.8 -17.5L0 -12.0L4.8 -17.5M-4.6 -11.0L0 -6.0L4.6 -11.0" stroke-width="2"/></g><g transform="rotate(90)"><path d="M0 0V-21.5" stroke-width="3.2"/><path d="M-4.8 -19.5L0 -14.0L4.8 -19.5M-4.6 -13.0L0 -8.0L4.6 -13.0" stroke-width="2"/></g><g transform="rotate(135)"><path d="M0 0V-19.5" stroke-width="2.6"/><path d="M-4.8 -17.5L0 -12.0L4.8 -17.5M-4.6 -11.0L0 -6.0L4.6 -11.0" stroke-width="2"/></g><g transform="rotate(180)"><path d="M0 0V-24" stroke-width="3.2"/><path d="M-4.8 -22L0 -16.5L4.8 -22M-4.6 -15.5L0 -10.5L4.6 -15.5" stroke-width="2"/></g><g transform="rotate(225)"><path d="M0 0V-19.5" stroke-width="2.6"/><path d="M-4.8 -17.5L0 -12.0L4.8 -17.5M-4.6 -11.0L0 -6.0L4.6 -11.0" stroke-width="2"/></g><g transform="rotate(270)"><path d="M0 0V-21.5" stroke-width="3.2"/><path d="M-4.8 -19.5L0 -14.0L4.8 -19.5M-4.6 -13.0L0 -8.0L4.6 -13.0" stroke-width="2"/></g><g transform="rotate(315)"><path d="M0 0V-19.5" stroke-width="2.6"/><path d="M-4.8 -17.5L0 -12.0L4.8 -17.5M-4.6 -11.0L0 -6.0L4.6 -11.0" stroke-width="2"/></g><circle r="6.5" fill="#1a98f8" stroke="none"/><circle r="10.5" stroke-width="2.6" stroke-dasharray="2.6 1.6"/></g></svg>
<div style="position:absolute;left:1523px;top:221px;width:62px;height:60px;background:#e0e0e0;border:1.5px solid #b8b8b8;border-radius:6px"></div>
<svg style="left:1530px;top:226px" width="48" height="48" viewBox="0 0 48 48"><g stroke="#10206c" stroke-width="1.9" fill="none"><path d="M6.7 2.2V48M0 41H45.9"/><path d="M2.3 7.8L6.7 2.2L11.100000000000001 7.8M40.5 36.6L45.9 41L40.5 45.4" stroke-width="1.52"/></g><text x="14.6" y="23.4" font-family="Liberation Serif" font-size="33" fill="#111" textLength="25.2" lengthAdjust="spacingAndGlyphs">T</text><path d="M7.8 34.6C22 34.6 36 30 47.5 16.8" fill="none" stroke="#10a020" stroke-width="3"/></svg>
<svg style="left:1596px;top:226px" width="48" height="48" viewBox="0 0 48 48"><g stroke="#10206c" stroke-width="1.9" fill="none"><path d="M6.7 2.2V48M0 41H45.9"/><path d="M2.3 7.8L6.7 2.2L11.100000000000001 7.8M40.5 36.6L45.9 41L40.5 45.4" stroke-width="1.52"/></g><text x="17.4" y="23.6" font-family="Liberation Serif" font-size="33" fill="#111" textLength="18.6" lengthAdjust="spacingAndGlyphs">S</text><path d="M7.8 34.6C22 34.6 36 30 47.5 16.8" fill="none" stroke="#f82828" stroke-width="3"/></svg>
<svg style="left:1676px;top:226px" width="48" height="48" viewBox="0 0 48 48"><g stroke="#3c5c9c" stroke-width="1.8" fill="none"><path d="M4.8 2.2V48M0.2 42.8H46"/><path d="M0.7999999999999998 7L4.8 2L8.8 7M41.6 38.8L46.2 42.8L41.6 46.8" stroke="#5878c0"/></g><rect x="13.2" y="10.7" width="24" height="24.5" fill="#c2daf2"/><g stroke="#0838a8" stroke-width="2" stroke-dasharray="2 2.2"><path d="M13.2 0V48M37.2 0V48M0 10.7H47M0 35.2H47"/></g><path d="M25.1 4V42M6 22.9H44" stroke="#000" stroke-width="2.2"/><path d="M25.1 0L32.5 9H17.7ZM25.1 45.9L32.5 37H17.7ZM2.5 22.9L11.5 15.5V30.3ZM47.6 22.9L38.6 15.5V30.3Z" fill="#000"/></svg>
<svg style="left:1742px;top:226px" width="48" height="48" viewBox="0 0 48 48"><path d="M5.7 48V9H0.7000000000000002L7.7 0L14.7 9H9.7V48Z" fill="#5878a8"/><path d="M0 37.7H38.5V32.7L47.5 39.7L38.5 46.7V41.7H0Z" fill="#5878a8"/><path d="M27 18L42.5 2.6L47 7L31.4 22.4Z" fill="url(#ghandle)" stroke="#b08838" stroke-width="1.2"/><circle cx="16.1" cy="30.6" r="14.4" fill="#bce8f8" stroke="url(#gmb)" stroke-width="3.4"/><path d="M7.100000000000001 24.6A11 11 0 0 1 14.100000000000001 19.6" stroke="#fff" stroke-width="2.6" fill="none" opacity=".9"/><path d="M21.1 40.1l4 -4" stroke="#fff" stroke-width="2.4" opacity=".9"/><path d="M6.600000000000001 30.6H25.6M16.1 21.1V40.1" stroke="#18186c" stroke-width="4.6"/></svg>
<svg style="left:1808px;top:226px" width="48" height="48" viewBox="0 0 48 48"><path d="M5.7 48V9H0.7000000000000002L7.7 0L14.7 9H9.7V48Z" fill="#5878a8"/><path d="M0 37.7H38.5V32.7L47.5 39.7L38.5 46.7V41.7H0Z" fill="#5878a8"/><path d="M27 18L42.5 2.6L47 7L31.4 22.4Z" fill="url(#ghandle)" stroke="#b08838" stroke-width="1.2"/><circle cx="16.1" cy="30.6" r="14.4" fill="#bce8f8" stroke="url(#gmb)" stroke-width="3.4"/><path d="M7.100000000000001 24.6A11 11 0 0 1 14.100000000000001 19.6" stroke="#fff" stroke-width="2.6" fill="none" opacity=".9"/><path d="M21.1 40.1l4 -4" stroke="#fff" stroke-width="2.4" opacity=".9"/><path d="M6.600000000000001 30.6H25.6" stroke="#18186c" stroke-width="5"/></svg>
<svg style="left:1888px;top:226px" width="48" height="48" viewBox="0 0 48 48"><g stroke="#3c5c9c" stroke-width="1.8" fill="none"><path d="M4.9 2.2V48M0.2 43.4H46"/><path d="M0.9000000000000004 7L4.9 2L8.9 7M41.6 39.4L46.2 43.4L41.6 47.4" stroke="#5878c0"/></g><rect x="12.4" y="0" width="25" height="48" fill="#f4c8c8"/><path d="M12.4 0V48M37.4 0V48" stroke="#f80000" stroke-width="2" stroke-dasharray="2 2.2"/><path d="M6 23.3H44" stroke="#000" stroke-width="2.4"/><path d="M1.8 23.3L11 16V30.6ZM47.9 23.3L38.7 16V30.6Z" fill="#000"/></svg>
<svg style="left:1954px;top:226px" width="48" height="48" viewBox="0 0 48 48"><path d="M0 37.7H38.9V32.7L47.9 39.7L38.9 46.7V41.7H0Z" fill="#5878a8"/><path d="M27 18L42.5 2.6L47 7L31.4 22.4Z" fill="url(#ghandle)" stroke="#b08838" stroke-width="1.2"/><circle cx="16.2" cy="30.6" r="14.4" fill="#f0cce4" stroke="url(#gmr)" stroke-width="3.4"/><path d="M7.199999999999999 24.6A11 11 0 0 1 14.2 19.6" stroke="#fff" stroke-width="2.6" fill="none" opacity=".9"/><path d="M21.2 40.1l4 -4" stroke="#fff" stroke-width="2.4" opacity=".9"/><path d="M6.699999999999999 30.6H25.7M16.2 21.1V40.1" stroke="#6c3030" stroke-width="4.6"/></svg>
<svg style="left:2020px;top:226px" width="48" height="48" viewBox="0 0 48 48"><path d="M0 37.7H38.9V32.7L47.9 39.7L38.9 46.7V41.7H0Z" fill="#5878a8"/><path d="M27 18L42.5 2.6L47 7L31.4 22.4Z" fill="url(#ghandle)" stroke="#b08838" stroke-width="1.2"/><circle cx="16.2" cy="30.6" r="14.4" fill="#f0cce4" stroke="url(#gmr)" stroke-width="3.4"/><path d="M7.199999999999999 24.6A11 11 0 0 1 14.2 19.6" stroke="#fff" stroke-width="2.6" fill="none" opacity=".9"/><path d="M21.2 40.1l4 -4" stroke="#fff" stroke-width="2.4" opacity=".9"/><path d="M6.699999999999999 30.6H25.7" stroke="#6c3030" stroke-width="5"/></svg>
<svg style="left:2100px;top:226px" width="48" height="48" viewBox="0 0 48 48"><g stroke="#3c5c9c" stroke-width="1.8" fill="none"><path d="M4.6 2.2V48M0.2 43.4H46"/><path d="M0.5999999999999996 7L4.6 2L8.6 7M41.6 39.4L46.2 43.4L41.6 47.4" stroke="#5878c0"/></g><rect x="0" y="10.5" width="47.6" height="24.8" fill="#c6f0d2"/><path d="M0 10.5H47.6M0 35.3H47.6" stroke="#08a020" stroke-width="2" stroke-dasharray="2 2.2"/><path d="M25.1 4V42" stroke="#000" stroke-width="2.4"/><path d="M25.1 0L32.4 9.2H17.8ZM25.1 45.8L32.4 36.6H17.8Z" fill="#000"/></svg>
<svg style="left:2166px;top:226px" width="48" height="48" viewBox="0 0 48 48"><path d="M6.1 48V9H1.0999999999999996L8.1 0L15.1 9H10.1V48Z" fill="#5878a8"/><path d="M27 18L42.5 2.6L47 7L31.4 22.4Z" fill="url(#ghandle)" stroke="#b08838" stroke-width="1.2"/><circle cx="15.9" cy="30.6" r="14.4" fill="#b8f0f0" stroke="url(#gmg)" stroke-width="3.4"/><path d="M6.9 24.6A11 11 0 0 1 13.9 19.6" stroke="#fff" stroke-width="2.6" fill="none" opacity=".9"/><path d="M20.9 40.1l4 -4" stroke="#fff" stroke-width="2.4" opacity=".9"/><path d="M6.4 30.6H25.4M15.9 21.1V40.1" stroke="#286830" stroke-width="4.6"/></svg>
<svg style="left:2232px;top:226px" width="48" height="48" viewBox="0 0 48 48"><path d="M6.1 48V9H1.0999999999999996L8.1 0L15.1 9H10.1V48Z" fill="#5878a8"/><path d="M27 18L42.5 2.6L47 7L31.4 22.4Z" fill="url(#ghandle)" stroke="#b08838" stroke-width="1.2"/><circle cx="15.9" cy="30.6" r="14.4" fill="#b8f0f0" stroke="url(#gmg)" stroke-width="3.4"/><path d="M6.9 24.6A11 11 0 0 1 13.9 19.6" stroke="#fff" stroke-width="2.6" fill="none" opacity=".9"/><path d="M20.9 40.1l4 -4" stroke="#fff" stroke-width="2.4" opacity=".9"/><path d="M6.4 30.6H25.4" stroke="#286830" stroke-width="5"/></svg>
<svg style="left:2312px;top:226px" width="48" height="48" viewBox="0 0 48 48"><g stroke="#10206c" stroke-width="1.9" fill="none"><path d="M6.8 2.5V48M0 24.9H45.7"/><path d="M2.3999999999999995 8.1L6.8 2.5L11.2 8.1M40.300000000000004 20.5L45.7 24.9L40.300000000000004 29.299999999999997" stroke-width="1.52"/></g><text x="27" y="20" font-family="Liberation Serif" font-weight="700" font-size="25" text-anchor="middle" fill="#088008">T</text><text x="26.4" y="44.7" font-family="Liberation Serif" font-weight="700" font-size="25" text-anchor="middle" fill="#e41010">S</text></svg>
<svg style="left:1302px;;top:306px" width="32" height="32" viewBox="0 0 32 32"><rect x="1" y="1" width="30" height="30" fill="#fff" stroke="#8898c8" stroke-width="1.8"/><path d="M1 30.8H31" stroke="#30407c" stroke-width="2.6"/><path d="M1 16.0H31" stroke="#30407c" stroke-width="2"/><g stroke="#111" stroke-width="2.2" fill="none"><path d="M5 12.6V4.6L9 9L13 4.6V12.6"/><path d="M18 6.4H26M18 10.6H26"/><path d="M5 19.6V26.6L9 22.6L13 26.6V19.6"/><path d="M18 21.4H26M18 25.6H26"/></g></svg>
<span class="t" style="left:1323px;top:689px;font-size:24px;line-height:24px;transform-origin:0 0;transform:rotate(-90deg) translate(-111.7px,-20.3px) scaleX(1.1071);color:#111">L2 (Arm 2), L (mm)</span>
<span class="t" style="left:1304.50px;top:1083.41px;font-size:23.5px;line-height:23.5px;transform:scaleX(1.0164);">X: mm</span>
<div style="position:absolute;left:0px;top:164px;width:1280px;height:1324px;background:#f0f0f0;border:2px solid #707070;border-top:none;border-radius:10px 10px 0 0"></div>
<div style="position:absolute;left:1276px;top:212px;width:2px;height:1272px;background:#c8c8c8"></div>
<div style="position:absolute;left:2px;top:212px;width:2px;height:1272px;background:#fff"></div>
<div style="position:absolute;left:2px;top:1484px;width:1276px;height:2px;background:#c8c8c8"></div>
<div style="position:absolute;left:0px;top:164px;width:1280px;height:48px;border-radius:11px 11px 0 0;background:linear-gradient(#0d8af0 0,#0580e6 45%,#0070d4 50%,#0068c8 100%);border:2px solid #00438c;border-bottom:2px solid #003c80"></div>
<svg style="left:10px;top:170px" width="36" height="36" viewBox="0 0 48 48"><rect x="1" y="1" width="46" height="46" rx="3" fill="url(#gtitle)" stroke="#c8c8f0" stroke-width="1.6"/><path d="M8 11H40L9 38H41" fill="none" stroke="#787878" stroke-width="2.4"/><path d="M15 17H27L35 32H23Z" fill="#48b0f4"/><rect x="7" y="6.5" width="2.4" height="9" fill="#808080"/><rect x="39.6" y="33.5" width="2.4" height="9" fill="#808080"/></svg>
<span class="t" style="left:561.10px;top:181.31px;font-size:23.5px;line-height:23.5px;color:#003a78;transform:scaleX(0.9512);">Schema</span>
<span class="t" style="left:559.60px;top:179.81px;font-size:23.5px;line-height:23.5px;color:#fff;transform:scaleX(0.9512);">Schema</span>
<div style="position:absolute;left:1152.5px;top:170.5px;width:34.5px;height:36px;border:2px solid #0a3f82;border-radius:8px;background:linear-gradient(#0d84ea,#006ad0)"></div>
<div style="position:absolute;left:1193px;top:170.5px;width:34.5px;height:36px;border:2px solid #0a3f82;border-radius:8px;background:linear-gradient(#0d84ea,#006ad0)"></div>
<div style="position:absolute;left:1233.5px;top:170.5px;width:34.5px;height:36px;border:2px solid #0a3f82;border-radius:8px;background:linear-gradient(#0d84ea,#006ad0)"></div>
<svg style="left:0;top:164px" width="1282" height="48" viewBox="0 164 1282 48"><g fill="none" stroke="#fff" stroke-width="3.4"><path d="M1162 194.3h16" stroke-width="4"/><rect x="1203.5" y="181" width="14" height="13.5"/><path d="M1203 182h15" stroke-width="4.5"/><path d="M1243.5 180.5l14.5 14.5M1258 180.5l-14.5 14.5" stroke-width="4.6"/></g></svg>
<svg style="left:26px;top:226px" width="48" height="48" viewBox="0 0 48 48"><ellipse cx="23.7" cy="23.6" rx="21.7" ry="21.7" fill="#6ccdee"/><ellipse cx="28.474" cy="28.374000000000002" rx="14.756" ry="14.756" fill="#d6f0fb"/><ellipse cx="23.7" cy="23.6" rx="20.7" ry="20.7" fill="none" stroke="url(#glensb)" stroke-width="2.6"/><path d="M10.246 17.090000000000003Q12.85 10.146000000000003 21.096 7.542000000000002" stroke="#fff" stroke-width="3.7" fill="none" stroke-linecap="round"/><path d="M29.125 37.922000000000004L35.635 31.846000000000004" stroke="#fff" stroke-width="3.3" stroke-linecap="round"/></svg>
<svg style="left:198px;top:226px" width="48" height="48" viewBox="0 0 48 48"><rect x="0" y="24" width="48" height="24" fill="#88b0f8"/><ellipse cx="13.1" cy="36.2" rx="9.2" ry="9.2" fill="#6ccdee"/><ellipse cx="15.123999999999999" cy="38.224000000000004" rx="6.256" ry="6.256" fill="#d6f0fb"/><ellipse cx="13.1" cy="36.2" rx="8.2" ry="8.2" fill="none" stroke="url(#glensb)" stroke-width="2.6"/><path d="M7.396 33.440000000000005Q8.5 30.496000000000002 11.996 29.392000000000003" stroke="#fff" stroke-width="1.6" fill="none" stroke-linecap="round"/><path d="M15.399999999999999 42.272000000000006L18.16 39.696000000000005" stroke="#fff" stroke-width="1.4" stroke-linecap="round"/><path d="M34.9 0.4L45.3 11.8H41.5V39.4H28.3V11.8H24.499999999999996Z" fill="url(#gredarr)" stroke="#c00010" stroke-width="1.8" stroke-linejoin="round"/></svg>
<svg style="left:264px;top:226px" width="48" height="48" viewBox="0 0 48 48"><rect x="0" y="0.2" width="48" height="23.8" fill="#88b0f8"/><ellipse cx="13" cy="11.8" rx="9.2" ry="9.2" fill="#6ccdee"/><ellipse cx="15.024000000000001" cy="13.824000000000002" rx="6.256" ry="6.256" fill="#d6f0fb"/><ellipse cx="13" cy="11.8" rx="8.2" ry="8.2" fill="none" stroke="url(#glensb)" stroke-width="2.6"/><path d="M7.296 9.040000000000001Q8.4 6.096000000000001 11.896 4.992000000000001" stroke="#fff" stroke-width="1.6" fill="none" stroke-linecap="round"/><path d="M15.3 17.872L18.06 15.296" stroke="#fff" stroke-width="1.4" stroke-linecap="round"/><g transform="translate(0,48.4) scale(1,-1)"><path d="M35.0 0.4L45.599999999999994 11.9H41.8V40.3H28.2V11.9H24.400000000000002Z" fill="url(#gredarr)" stroke="#c00010" stroke-width="1.8" stroke-linejoin="round"/></g></svg>
<svg style="left:346px;top:226px" width="48" height="48" viewBox="0 0 48 48"><ellipse cx="13.6" cy="24" rx="13.3" ry="22" fill="#6ccdee"/><ellipse cx="16.526" cy="28.84" rx="9.044" ry="14.96" fill="#d6f0fb"/><ellipse cx="13.6" cy="24" rx="12.3" ry="21" fill="none" stroke="url(#glensb)" stroke-width="2.6"/><path d="M5.353999999999999 17.4Q6.949999999999999 10.36 12.004 7.719999999999999" stroke="#fff" stroke-width="3.7" fill="none" stroke-linecap="round"/><path d="M16.925 38.52L20.915 32.36" stroke="#fff" stroke-width="3.3" stroke-linecap="round"/><g transform="translate(1.0,0.0)"><path d="M13.2 12.6Q13 10.4 15.4 10.4L17 11L26.4 21L28.6 16.6Q31 14.4 33.4 16.6L34.6 17.4Q37.4 15.6 39.2 18L40 19Q43 18.4 44 21.2L46.6 28Q48 34 46.4 39.6L42.6 42.4L35 47.4L30.4 45.4L21 38.4L16.4 33.6L12.6 29.4Q11.4 27.2 13.4 26L17.6 25.6L20.6 27L13.6 14.6Z" fill="url(#ghand)" stroke="#b08c48" stroke-width="1.5" stroke-dasharray="2.2 1" stroke-linejoin="round"/><path d="M26.4 21L30.6 27.4M33.6 17.6L36.6 24.4M39.6 19.2L41.4 24.6" stroke="#c49c50" stroke-width="1.5" stroke-dasharray="2 1.2" fill="none"/><path d="M15.6 12.4L25.4 25" stroke="#fbe89a" stroke-width="2.4" opacity=".8" fill="none"/></g></svg>
<svg style="left:528px;top:226px" width="48" height="48" viewBox="0 0 48 48"><ellipse cx="23.8" cy="24" rx="23" ry="23" fill="#6ccdee"/><ellipse cx="28.86" cy="29.06" rx="15.64" ry="15.64" fill="#d6f0fb"/><ellipse cx="23.8" cy="24" rx="22" ry="22" fill="none" stroke="url(#glensb)" stroke-width="2.6"/><path d="M9.540000000000001 17.1Q12.3 9.74 21.04 6.98" stroke="#fff" stroke-width="3.9" fill="none" stroke-linecap="round"/><path d="M29.55 39.18L36.45 32.74" stroke="#fff" stroke-width="3.4" stroke-linecap="round"/><text x="31.2" y="25.7" font-family="Liberation Sans" font-weight="700" font-size="18.6" text-anchor="middle" fill="#901890" textLength="27.5" lengthAdjust="spacingAndGlyphs">AB</text><text x="31.2" y="46" font-family="Liberation Sans" font-weight="700" font-size="18.6" text-anchor="middle" fill="#901890" textLength="27.5" lengthAdjust="spacingAndGlyphs">CD</text></svg>
<svg style="left:610px;top:226px" width="48" height="48" viewBox="0 0 48 48"><ellipse cx="17.5" cy="19.4" rx="17.5" ry="17.5" fill="#6ccdee"/><ellipse cx="21.35" cy="23.25" rx="11.9" ry="11.9" fill="#d6f0fb"/><ellipse cx="17.5" cy="19.4" rx="16.5" ry="16.5" fill="none" stroke="url(#glensb)" stroke-width="2.6"/><path d="M6.65 14.149999999999999Q8.75 8.549999999999999 15.4 6.449999999999999" stroke="#fff" stroke-width="3.0" fill="none" stroke-linecap="round"/><path d="M21.875 30.95L27.125 26.049999999999997" stroke="#fff" stroke-width="2.6" stroke-linecap="round"/><path d="M12 14L40.5 42.5M40.5 14L12 42.5" stroke="#8c1010" stroke-width="10.6"/><path d="M12 14L40.5 42.5M40.5 14L12 42.5" stroke="#d84040" stroke-width="7.6"/><path d="M11.5 15.5L38 42" stroke="#ec8080" stroke-width="2.4" opacity=".8"/></svg>
<span class="t" style="left:81.70px;top:240.11px;font-size:23.5px;line-height:23.5px;transform:scaleX(0.8960);">Append</span>
<span class="t" style="left:401.00px;top:240.11px;font-size:23.5px;line-height:23.5px;transform:scaleX(0.9150);">Properties</span>
<div class="sep" style="left:182px;top:232px;height:38px"></div>
<div class="sep" style="left:328px;top:232px;height:38px"></div>
<div class="sep" style="left:592px;top:232px;height:38px"></div>
<div style="position:absolute;left:8px;top:290px;width:1264px;height:592px;background:#fff;border:2px solid #b4b4b4"></div>
<div style="position:absolute;left:10px;top:292px;width:1232px;height:37px;background:linear-gradient(#fff,#f4f4f4 50%,#ececec)"></div>
<div style="position:absolute;left:10px;top:330px;width:34px;height:550px;background:linear-gradient(90deg,#fcfcfc,#ececec)"></div>
<div style="position:absolute;left:46px;top:330px;width:1194px;height:58px;background:#f0f0f0"></div>
<svg style="left:0;top:0" width="1282" height="890"><g fill="#c3c3c3"><rect x="10" y="328" width="1232" height="2"/><rect x="10" y="388" width="1232" height="2"/><rect x="10" y="448" width="1232" height="2"/><rect x="10" y="508" width="1232" height="2"/><rect x="10" y="568" width="1232" height="2"/><rect x="10" y="628" width="1232" height="2"/><rect x="10" y="688" width="1232" height="2"/><rect x="10" y="748" width="1232" height="2"/><rect x="10" y="808" width="1232" height="2"/><rect x="10" y="868" width="1232" height="2"/><rect x="104" y="292" width="2" height="588"/><rect x="170" y="292" width="2" height="588"/><rect x="446" y="292" width="2" height="588"/><rect x="1240" y="292" width="2" height="588"/><rect x="44" y="330" width="2" height="550"/></g><g fill="#a8a8a8"><rect x="10" y="388" width="34" height="2"/><rect x="10" y="448" width="34" height="2"/><rect x="10" y="508" width="34" height="2"/><rect x="10" y="568" width="34" height="2"/><rect x="10" y="628" width="34" height="2"/><rect x="10" y="688" width="34" height="2"/><rect x="10" y="748" width="34" height="2"/><rect x="10" y="808" width="34" height="2"/><rect x="10" y="868" width="34" height="2"/><rect x="10" y="328" width="1232" height="2" fill="#b4b4b4"/></g></svg>
<span class="t" style="left:59.30px;top:300.11px;font-size:23.5px;line-height:23.5px;transform:scaleX(0.8976);">Typ</span>
<span class="t" style="left:111.00px;top:300.11px;font-size:23.5px;line-height:23.5px;transform:scaleX(0.9513);">Label</span>
<span class="t" style="left:250.70px;top:300.11px;font-size:23.5px;line-height:23.5px;transform:scaleX(0.9633);">Parameters</span>
<span class="t" style="left:821.27px;top:300.11px;font-size:23.5px;line-height:23.5px;transform:scaleX(1.0424);">Title</span>
<div style="position:absolute;left:1242px;top:292px;width:2px;height:588px;background:#b8b8b8"></div>
<div style="position:absolute;left:1244px;top:292px;width:26px;height:588px;background:linear-gradient(90deg,#fdfdfd,#e4e4e4)"></div>
<div style="position:absolute;left:1244px;top:292px;width:26px;height:27px;background:linear-gradient(90deg,#fff,#f2f2f2);border-bottom:2px solid #b8b8b8;height:28px"></div>
<div style="position:absolute;left:1244px;top:852px;width:26px;height:28px;background:linear-gradient(90deg,#fff,#f2f2f2);border-top:2px solid #b8b8b8"></div>
<svg style="left:1244px;top:292px" width="26" height="588"><path d="M4 16h16l-8-8z M4 570h16l-8 8z" fill="#5a5a5a"/></svg>
<span class="t" style="left:14.80px;top:350.31px;font-size:23.5px;line-height:23.5px;transform:scaleX(0.8799);">1</span>
<span class="t sf" style="left:116.00px;top:345.65px;font-size:28.6px;line-height:28.6px;font-weight:700;transform:scaleX(1.0413);">M1</span>
<span class="t" style="left:14.80px;top:410.31px;font-size:23.5px;line-height:23.5px;transform:scaleX(0.8799);">2</span>
<span class="t sf" style="left:121.00px;top:405.65px;font-size:28.6px;line-height:28.6px;font-weight:700;transform:scaleX(0.9887);">L1</span>
<span class="t sf" style="left:180.50px;top:405.65px;font-size:28.6px;line-height:28.6px;font-weight:700;transform:scaleX(0.9803);">L</span>
<span class="t" style="left:210.00px;top:410.31px;font-size:23.5px;line-height:23.5px;transform:scaleX(1.1128);">= 200 mm</span>
<span class="t" style="left:455.00px;top:408.81px;font-size:23.5px;line-height:23.5px;transform:scaleX(0.9653);">Arm 1</span>
<span class="t" style="left:14.80px;top:470.31px;font-size:23.5px;line-height:23.5px;transform:scaleX(0.8799);">3</span>
<span class="t sf" style="left:115.65px;top:465.65px;font-size:28.6px;line-height:28.6px;font-weight:700;transform:scaleX(1.0583);">M2</span>
<span class="t sf" style="left:180.50px;top:465.65px;font-size:28.6px;line-height:28.6px;font-weight:700;">F</span>
<span class="t" style="left:207.50px;top:470.31px;font-size:23.5px;line-height:23.5px;transform:scaleX(1.0953);">= 50 mm,</span>
<span class="t sf" style="left:325.00px;top:465.65px;font-size:28.6px;line-height:28.6px;font-weight:700;transform:scaleX(0.9397);">α</span>
<span class="t" style="left:350.00px;top:470.31px;font-size:23.5px;line-height:23.5px;transform:scaleX(1.1540);">= 0°</span>
<span class="t" style="left:14.80px;top:530.31px;font-size:23.5px;line-height:23.5px;transform:scaleX(0.8799);">4</span>
<span class="t sf" style="left:123.00px;top:525.65px;font-size:28.6px;line-height:28.6px;font-weight:700;transform:scaleX(0.9601);">d1</span>
<span class="t sf" style="left:180.50px;top:525.65px;font-size:28.6px;line-height:28.6px;font-weight:700;transform:scaleX(0.9803);">L</span>
<span class="t" style="left:210.00px;top:530.31px;font-size:23.5px;line-height:23.5px;transform:scaleX(1.1209);">= 55 mm</span>
<span class="t" style="left:14.80px;top:590.31px;font-size:23.5px;line-height:23.5px;transform:scaleX(0.8799);">5</span>
<span class="t sf" style="left:120.00px;top:585.65px;font-size:28.6px;line-height:28.6px;font-weight:700;transform:scaleX(0.9577);">G1</span>
<span class="t sf" style="left:180.50px;top:585.65px;font-size:28.6px;line-height:28.6px;font-weight:700;transform:scaleX(0.9803);">L</span>
<span class="t" style="left:210.00px;top:590.31px;font-size:23.5px;line-height:23.5px;transform:scaleX(1.0953);">= 19 mm,</span>
<span class="t sf" style="left:326.80px;top:585.65px;font-size:28.6px;line-height:28.6px;font-weight:700;transform:scaleX(0.9367);">n</span>
<span class="t" style="left:351.20px;top:590.31px;font-size:23.5px;line-height:23.5px;transform:scaleX(1.1138);">= 1.76</span>
<span class="t" style="left:455.00px;top:588.81px;font-size:23.5px;line-height:23.5px;transform:scaleX(0.9324);">TiSa Crystal</span>
<span class="t" style="left:14.80px;top:650.31px;font-size:23.5px;line-height:23.5px;transform:scaleX(0.8799);">6</span>
<span class="t sf" style="left:122.50px;top:645.65px;font-size:28.6px;line-height:28.6px;font-weight:700;transform:scaleX(0.9932);">d2</span>
<span class="t sf" style="left:180.50px;top:645.65px;font-size:28.6px;line-height:28.6px;font-weight:700;transform:scaleX(0.9803);">L</span>
<span class="t" style="left:210.00px;top:650.31px;font-size:23.5px;line-height:23.5px;transform:scaleX(1.1209);">= 55 mm</span>
<span class="t" style="left:14.80px;top:710.31px;font-size:23.5px;line-height:23.5px;transform:scaleX(0.8799);">7</span>
<span class="t sf" style="left:122.00px;top:705.65px;font-size:28.6px;line-height:28.6px;font-weight:700;transform:scaleX(0.9758);">F1</span>
<span class="t sf" style="left:180.50px;top:705.65px;font-size:28.6px;line-height:28.6px;font-weight:700;">F</span>
<span class="t" style="left:207.50px;top:710.31px;font-size:23.5px;line-height:23.5px;transform:scaleX(1.0953);">= 50 mm,</span>
<span class="t sf" style="left:325.00px;top:705.65px;font-size:28.6px;line-height:28.6px;font-weight:700;transform:scaleX(0.9397);">α</span>
<span class="t" style="left:350.00px;top:710.31px;font-size:23.5px;line-height:23.5px;transform:scaleX(1.1540);">= 0°</span>
<span class="t" style="left:14.80px;top:770.31px;font-size:23.5px;line-height:23.5px;transform:scaleX(0.8799);">8</span>
<span class="t sf" style="left:120.50px;top:765.65px;font-size:28.6px;line-height:28.6px;font-weight:700;transform:scaleX(1.0187);">L2</span>
<span class="t sf" style="left:180.50px;top:765.65px;font-size:28.6px;line-height:28.6px;font-weight:700;transform:scaleX(0.9803);">L</span>
<span class="t" style="left:210.00px;top:770.31px;font-size:23.5px;line-height:23.5px;transform:scaleX(1.1128);">= 200 mm</span>
<span class="t" style="left:455.00px;top:768.81px;font-size:23.5px;line-height:23.5px;">Arm 2</span>
<span class="t" style="left:14.80px;top:830.31px;font-size:23.5px;line-height:23.5px;transform:scaleX(0.8799);">9</span>
<span class="t sf" style="left:115.75px;top:825.65px;font-size:28.6px;line-height:28.6px;font-weight:700;transform:scaleX(1.0140);">OC</span>
<span class="t" style="left:455.00px;top:828.81px;font-size:23.5px;line-height:23.5px;transform:scaleX(1.0385);">Output Coupler</span>
<svg style="left:52px;top:334px" width="48" height="48" viewBox="0 0 48 48"><svg x="0" y="0" width="10.4" height="48" viewBox="0 0 10.4 48" style="overflow:hidden;position:static"><path d="M-2 -14l14 14M-2 -7l14 14M-2 0l14 14M-2 7l14 14M-2 14l14 14M-2 21l14 14M-2 28l14 14M-2 35l14 14M-2 42l14 14M-2 49l14 14" stroke="#708898" stroke-width="2.6" fill="none"/></svg><rect x="10.2" y="0" width="3.8" height="48" fill="#0a1e3c"/><path d="M45.9 2.5L15 23.6L40 43" stroke="#b02040" stroke-width="5.6" fill="none"/><path d="M47.7 47.6L25.5 46.4L41 27Z" fill="#b02040"/></svg>
<svg style="left:52px;top:394px" width="48" height="48" viewBox="0 0 48 48"><text x="25" y="25.8" font-family="Liberation Serif" font-style="italic" font-size="35" text-anchor="middle" fill="#444">L</text><path d="M2.5 36H45.5" stroke="#28287a" stroke-width="4"/><path d="M9.6 29L2.2 36L9.6 43M38.4 29L45.8 36L38.4 43" stroke="#28287a" stroke-width="2.2" fill="none"/></svg>
<svg style="left:52px;top:454px" width="48" height="48" viewBox="0 0 48 48"><path d="M0.5 46.9L40 7.4" stroke="#f80000" stroke-width="6"/><ellipse cx="20.1" cy="23.9" rx="7" ry="22.8" fill="#c4ecfc" fill-opacity=".7" stroke="#12b0f8" stroke-width="2.8"/><path d="M0 24.8H46" stroke="#000" stroke-width="2.4" stroke-dasharray="4.4 2.8"/><path d="M47.2 0.2V15.8L41 12.4L35 6.6L31.4 0.2Z" fill="#f80000"/></svg>
<svg style="left:52px;top:514px" width="48" height="48" viewBox="0 0 48 48"><text x="25" y="25.8" font-family="Liberation Serif" font-style="italic" font-size="35" text-anchor="middle" fill="#444">L</text><path d="M2.5 36H45.5" stroke="#28287a" stroke-width="4"/><path d="M9.6 29L2.2 36L9.6 43M38.4 29L45.8 36L38.4 43" stroke="#28287a" stroke-width="2.2" fill="none"/></svg>
<svg style="left:52px;top:574px" width="48" height="48" viewBox="0 0 48 48"><rect x="1" y="1" width="46" height="46" fill="url(#gcry2)" stroke="#00b0ff" stroke-width="2"/><path d="M4 15l13 -13M7.6 15l13 -13M11.2 15l13 -13M28 15l13 -13M31.6 15l13 -13M35.2 15l13 -13M4 43l13 -13M7.6 43l13 -13M11.2 43l13 -13M28 43l13 -13M31.6 43l13 -13M35.2 43l13 -13" stroke="#5cd0fc" stroke-width="1.8" stroke-dasharray="2 1" fill="none"/><path d="M4 24H43.8" stroke="#000" stroke-width="3.6"/><path d="M11 18.4L4.6 24L11 29.6M37 18.4L43.4 24L37 29.6" stroke="#000" stroke-width="2.2" fill="none"/></svg>
<svg style="left:52px;top:634px" width="48" height="48" viewBox="0 0 48 48"><text x="25" y="25.8" font-family="Liberation Serif" font-style="italic" font-size="35" text-anchor="middle" fill="#444">L</text><path d="M2.5 36H45.5" stroke="#28287a" stroke-width="4"/><path d="M9.6 29L2.2 36L9.6 43M38.4 29L45.8 36L38.4 43" stroke="#28287a" stroke-width="2.2" fill="none"/></svg>
<svg style="left:52px;top:694px" width="48" height="48" viewBox="0 0 48 48"><path d="M0.5 46.9L40 7.4" stroke="#f80000" stroke-width="6"/><ellipse cx="20.1" cy="23.9" rx="7" ry="22.8" fill="#c4ecfc" fill-opacity=".7" stroke="#12b0f8" stroke-width="2.8"/><path d="M0 24.8H46" stroke="#000" stroke-width="2.4" stroke-dasharray="4.4 2.8"/><path d="M47.2 0.2V15.8L41 12.4L35 6.6L31.4 0.2Z" fill="#f80000"/></svg>
<svg style="left:52px;top:754px" width="48" height="48" viewBox="0 0 48 48"><text x="25" y="25.8" font-family="Liberation Serif" font-style="italic" font-size="35" text-anchor="middle" fill="#444">L</text><path d="M2.5 36H45.5" stroke="#28287a" stroke-width="4"/><path d="M9.6 29L2.2 36L9.6 43M38.4 29L45.8 36L38.4 43" stroke="#28287a" stroke-width="2.2" fill="none"/></svg>
<svg style="left:52px;top:814px" width="48" height="48" viewBox="0 0 48 48"><svg x="0" y="0" width="10.4" height="48" viewBox="0 0 10.4 48" style="overflow:hidden;position:static"><path d="M-2 -14l14 14M-2 -7l14 14M-2 0l14 14M-2 7l14 14M-2 14l14 14M-2 21l14 14M-2 28l14 14M-2 35l14 14M-2 42l14 14M-2 49l14 14" stroke="#6c6c6c" stroke-width="2.6" fill="none"/></svg><rect x="10.2" y="0" width="3.8" height="48" fill="#000"/><path d="M45.9 2.5L15 23.6L40 43" stroke="#f80000" stroke-width="5.6" fill="none"/><path d="M47.7 47.6L25.5 46.4L41 27Z" fill="#f80000"/></svg>
<svg style="left:64px;top:874px" width="26" height="6"><path d="M0 6 Q13 -4 26 6z" fill="#3c3c9a"/></svg>
<svg style="left:620px;top:884px" width="40" height="4"><rect x="4" y="1" width="2" height="2" fill="#c4c4c4"/><rect x="10" y="1" width="2" height="2" fill="#c4c4c4"/><rect x="16" y="1" width="2" height="2" fill="#c4c4c4"/><rect x="22" y="1" width="2" height="2" fill="#c4c4c4"/><rect x="28" y="1" width="2" height="2" fill="#c4c4c4"/><rect x="34" y="1" width="2" height="2" fill="#c4c4c4"/></svg>
<div style="position:absolute;left:8px;top:890px;width:1264px;height:590px;background:#fff;border:2px solid #b4b4b4"></div>
<svg style="left:10px;top:892px" width="1260" height="586" viewBox="10 892 1260 586">
<clipPath id="mc122"><rect x="122.1" y="1129.7" width="26.400000000000006" height="160.5"/></clipPath><rect x="122.1" y="1129.7" width="26.400000000000006" height="160.5" fill="#fff"/><path clip-path="url(#mc122)" d="M120.1 1081.5l34.400000000000006 -34.400000000000006M120.1 1097.5l34.400000000000006 -34.400000000000006M120.1 1113.5l34.400000000000006 -34.400000000000006M120.1 1129.5l34.400000000000006 -34.400000000000006M120.1 1145.5l34.400000000000006 -34.400000000000006M120.1 1161.5l34.400000000000006 -34.400000000000006M120.1 1177.5l34.400000000000006 -34.400000000000006M120.1 1193.5l34.400000000000006 -34.400000000000006M120.1 1209.5l34.400000000000006 -34.400000000000006M120.1 1225.5l34.400000000000006 -34.400000000000006M120.1 1241.5l34.400000000000006 -34.400000000000006M120.1 1257.5l34.400000000000006 -34.400000000000006M120.1 1273.5l34.400000000000006 -34.400000000000006M120.1 1289.5l34.400000000000006 -34.400000000000006M120.1 1305.5l34.400000000000006 -34.400000000000006M120.1 1321.5l34.400000000000006 -34.400000000000006" stroke="#111" stroke-width="1.9" fill="none"/><rect x="122.1" y="1129.7" width="26.400000000000006" height="160.5" fill="none" stroke="#3c3c3c" stroke-width="3.4"/><rect x="145.7" y="1129.2" width="6" height="161.5" fill="#000"/>
<clipPath id="mc1131"><rect x="1131.5" y="1129.7" width="26.09999999999991" height="160.5"/></clipPath><rect x="1131.5" y="1129.7" width="26.09999999999991" height="160.5" fill="#fff"/><path clip-path="url(#mc1131)" d="M1129.5 1081.5l34.09999999999991 -34.09999999999991M1129.5 1097.5l34.09999999999991 -34.09999999999991M1129.5 1113.5l34.09999999999991 -34.09999999999991M1129.5 1129.5l34.09999999999991 -34.09999999999991M1129.5 1145.5l34.09999999999991 -34.09999999999991M1129.5 1161.5l34.09999999999991 -34.09999999999991M1129.5 1177.5l34.09999999999991 -34.09999999999991M1129.5 1193.5l34.09999999999991 -34.09999999999991M1129.5 1209.5l34.09999999999991 -34.09999999999991M1129.5 1225.5l34.09999999999991 -34.09999999999991M1129.5 1241.5l34.09999999999991 -34.09999999999991M1129.5 1257.5l34.09999999999991 -34.09999999999991M1129.5 1273.5l34.09999999999991 -34.09999999999991M1129.5 1289.5l34.09999999999991 -34.09999999999991M1129.5 1305.5l34.09999999999991 -34.09999999999991M1129.5 1321.5l34.09999999999991 -34.09999999999991" stroke="#111" stroke-width="1.9" fill="none"/><rect x="1131.5" y="1129.7" width="26.09999999999991" height="160.5" fill="none" stroke="#3c3c3c" stroke-width="3.4"/><rect x="1128.3" y="1129.2" width="6" height="161.5" fill="#000"/>
<clipPath id="lc369"><path d="M365.9 1128.5H373.9A199.6 199.6 0 0 1 373.9 1291.5H365.9A199.6 199.6 0 0 1 365.9 1128.5Z"/></clipPath><path d="M365.9 1128.5H373.9A199.6 199.6 0 0 1 373.9 1291.5H365.9A199.6 199.6 0 0 1 365.9 1128.5Z" fill="#dcdcdc"/><path clip-path="url(#lc369)" d="M370.1 1187.9L390.1 1167.9M370.1 1179.9L379.1 1170.9M382.1 1184.4L390.1 1176.4M349.1 1204.0L369.1 1184.0M349.1 1196.0L358.1 1187.0M361.1 1200.5L369.1 1192.5M370.1 1235.5L390.1 1215.5M370.1 1227.5L379.1 1218.5M382.1 1232.0L390.1 1224.0M349.1 1251.7L369.1 1231.7M349.1 1243.7L358.1 1234.7M361.1 1248.2L369.1 1240.2M352.3 1158.0L372.3 1138.0M352.3 1150.0L361.3 1141.0M364.3 1154.5L372.3 1146.5M368.5 1281.6L388.5 1261.6M368.5 1273.6L377.5 1264.6M380.5 1278.1L388.5 1270.1" stroke="#222" stroke-width="1.7" fill="none"/><path d="M365.9 1128.5H373.9A199.6 199.6 0 0 1 373.9 1291.5H365.9A199.6 199.6 0 0 1 365.9 1128.5Z" fill="none" stroke="#262626" stroke-width="2.6" stroke-linejoin="round"/>
<clipPath id="lc910"><path d="M906.0 1128.5H914.0A199.6 199.6 0 0 1 914.0 1291.5H906.0A199.6 199.6 0 0 1 906.0 1128.5Z"/></clipPath><path d="M906.0 1128.5H914.0A199.6 199.6 0 0 1 914.0 1291.5H906.0A199.6 199.6 0 0 1 906.0 1128.5Z" fill="#dcdcdc"/><path clip-path="url(#lc910)" d="M910.2 1187.9L930.2 1167.9M910.2 1179.9L919.2 1170.9M922.2 1184.4L930.2 1176.4M889.2 1204.0L909.2 1184.0M889.2 1196.0L898.2 1187.0M901.2 1200.5L909.2 1192.5M910.2 1235.5L930.2 1215.5M910.2 1227.5L919.2 1218.5M922.2 1232.0L930.2 1224.0M889.2 1251.7L909.2 1231.7M889.2 1243.7L898.2 1234.7M901.2 1248.2L909.2 1240.2M892.4 1158.0L912.4 1138.0M892.4 1150.0L901.4 1141.0M904.4 1154.5L912.4 1146.5M908.6 1281.6L928.6 1261.6M908.6 1273.6L917.6 1264.6M920.6 1278.1L928.6 1270.1" stroke="#222" stroke-width="1.7" fill="none"/><path d="M906.0 1128.5H914.0A199.6 199.6 0 0 1 914.0 1291.5H906.0A199.6 199.6 0 0 1 906.0 1128.5Z" fill="none" stroke="#262626" stroke-width="2.6" stroke-linejoin="round"/>
<rect x="590.2" y="1130" width="99.6" height="160" fill="#dcdcdc"/>
<clipPath id="gc"><rect x="590.2" y="1130" width="99.6" height="160"/></clipPath>
<path clip-path="url(#gc)" d="M567.4 1110.2L587.4 1090.2M567.4 1102.2L576.4 1093.2M579.4 1106.7L587.4 1098.7M547.5 1138.1L567.5 1118.1M547.5 1130.1L556.5 1121.1M559.5 1134.6L567.5 1126.6M615.7 1110.2L635.7 1090.2M615.7 1102.2L624.7 1093.2M627.7 1106.7L635.7 1098.7M595.8 1138.1L615.8 1118.1M595.8 1130.1L604.8 1121.1M607.8 1134.6L615.8 1126.6M664.0 1110.2L684.0 1090.2M664.0 1102.2L673.0 1093.2M676.0 1106.7L684.0 1098.7M644.1 1138.1L664.1 1118.1M644.1 1130.1L653.1 1121.1M656.1 1134.6L664.1 1126.6M712.3 1110.2L732.3 1090.2M712.3 1102.2L721.3 1093.2M724.3 1106.7L732.3 1098.7M692.4 1138.1L712.4 1118.1M692.4 1130.1L701.4 1121.1M704.4 1134.6L712.4 1126.6M567.4 1158.0L587.4 1138.0M567.4 1150.0L576.4 1141.0M579.4 1154.5L587.4 1146.5M547.5 1185.9L567.5 1165.9M547.5 1177.9L556.5 1168.9M559.5 1182.4L567.5 1174.4M615.7 1158.0L635.7 1138.0M615.7 1150.0L624.7 1141.0M627.7 1154.5L635.7 1146.5M595.8 1185.9L615.8 1165.9M595.8 1177.9L604.8 1168.9M607.8 1182.4L615.8 1174.4M664.0 1158.0L684.0 1138.0M664.0 1150.0L673.0 1141.0M676.0 1154.5L684.0 1146.5M644.1 1185.9L664.1 1165.9M644.1 1177.9L653.1 1168.9M656.1 1182.4L664.1 1174.4M712.3 1158.0L732.3 1138.0M712.3 1150.0L721.3 1141.0M724.3 1154.5L732.3 1146.5M692.4 1185.9L712.4 1165.9M692.4 1177.9L701.4 1168.9M704.4 1182.4L712.4 1174.4M567.4 1205.8L587.4 1185.8M567.4 1197.8L576.4 1188.8M579.4 1202.3L587.4 1194.3M547.5 1233.7L567.5 1213.7M547.5 1225.7L556.5 1216.7M559.5 1230.2L567.5 1222.2M615.7 1205.8L635.7 1185.8M615.7 1197.8L624.7 1188.8M627.7 1202.3L635.7 1194.3M595.8 1233.7L615.8 1213.7M595.8 1225.7L604.8 1216.7M607.8 1230.2L615.8 1222.2M664.0 1205.8L684.0 1185.8M664.0 1197.8L673.0 1188.8M676.0 1202.3L684.0 1194.3M644.1 1233.7L664.1 1213.7M644.1 1225.7L653.1 1216.7M656.1 1230.2L664.1 1222.2M712.3 1205.8L732.3 1185.8M712.3 1197.8L721.3 1188.8M724.3 1202.3L732.3 1194.3M692.4 1233.7L712.4 1213.7M692.4 1225.7L701.4 1216.7M704.4 1230.2L712.4 1222.2M567.4 1253.6L587.4 1233.6M567.4 1245.6L576.4 1236.6M579.4 1250.1L587.4 1242.1M547.5 1281.5L567.5 1261.5M547.5 1273.5L556.5 1264.5M559.5 1278.0L567.5 1270.0M615.7 1253.6L635.7 1233.6M615.7 1245.6L624.7 1236.6M627.7 1250.1L635.7 1242.1M595.8 1281.5L615.8 1261.5M595.8 1273.5L604.8 1264.5M607.8 1278.0L615.8 1270.0M664.0 1253.6L684.0 1233.6M664.0 1245.6L673.0 1236.6M676.0 1250.1L684.0 1242.1M644.1 1281.5L664.1 1261.5M644.1 1273.5L653.1 1264.5M656.1 1278.0L664.1 1270.0M712.3 1253.6L732.3 1233.6M712.3 1245.6L721.3 1236.6M724.3 1250.1L732.3 1242.1M692.4 1281.5L712.4 1261.5M692.4 1273.5L701.4 1264.5M704.4 1278.0L712.4 1270.0M567.4 1301.4L587.4 1281.4M567.4 1293.4L576.4 1284.4M579.4 1297.9L587.4 1289.9M547.5 1329.3L567.5 1309.3M547.5 1321.3L556.5 1312.3M559.5 1325.8L567.5 1317.8M615.7 1301.4L635.7 1281.4M615.7 1293.4L624.7 1284.4M627.7 1297.9L635.7 1289.9M595.8 1329.3L615.8 1309.3M595.8 1321.3L604.8 1312.3M607.8 1325.8L615.8 1317.8M664.0 1301.4L684.0 1281.4M664.0 1293.4L673.0 1284.4M676.0 1297.9L684.0 1289.9M644.1 1329.3L664.1 1309.3M644.1 1321.3L653.1 1312.3M656.1 1325.8L664.1 1317.8M712.3 1301.4L732.3 1281.4M712.3 1293.4L721.3 1284.4M724.3 1297.9L732.3 1289.9M692.4 1329.3L712.4 1309.3M692.4 1321.3L701.4 1312.3M704.4 1325.8L712.4 1317.8M567.4 1349.2L587.4 1329.2M567.4 1341.2L576.4 1332.2M579.4 1345.7L587.4 1337.7M547.5 1377.1L567.5 1357.1M547.5 1369.1L556.5 1360.1M559.5 1373.6L567.5 1365.6M615.7 1349.2L635.7 1329.2M615.7 1341.2L624.7 1332.2M627.7 1345.7L635.7 1337.7M595.8 1377.1L615.8 1357.1M595.8 1369.1L604.8 1360.1M607.8 1373.6L615.8 1365.6M664.0 1349.2L684.0 1329.2M664.0 1341.2L673.0 1332.2M676.0 1345.7L684.0 1337.7M644.1 1377.1L664.1 1357.1M644.1 1369.1L653.1 1360.1M656.1 1373.6L664.1 1365.6M712.3 1349.2L732.3 1329.2M712.3 1341.2L721.3 1332.2M724.3 1345.7L732.3 1337.7M692.4 1377.1L712.4 1357.1M692.4 1369.1L701.4 1360.1M704.4 1373.6L712.4 1365.6" stroke="#222" stroke-width="1.7" fill="none"/>
<rect x="590.2" y="1130" width="99.6" height="160" fill="none" stroke="#3a3a3a" stroke-width="3.6"/>
<path d="M100.5 1209.9H1179.3" stroke="#666" stroke-width="3.8" opacity=".82"/>
</svg>
<span class="t sf" style="left:112.00px;top:1089.51px;font-size:29px;line-height:29px;font-weight:700;transform:scaleX(1.0508);">M1</span>
<span class="t sf" style="left:346.30px;top:1089.51px;font-size:29px;line-height:29px;font-weight:700;transform:scaleX(1.0747);">M2</span>
<span class="t sf" style="left:619.95px;top:1089.51px;font-size:29px;line-height:29px;font-weight:700;transform:scaleX(0.9850);">G1</span>
<span class="t sf" style="left:892.60px;top:1089.51px;font-size:29px;line-height:29px;font-weight:700;transform:scaleX(0.9933);">F1</span>
<span class="t sf" style="left:1120.40px;top:1089.51px;font-size:29px;line-height:29px;font-weight:700;transform:scaleX(1.0345);">OC</span>
<span class="t sf" style="left:231.75px;top:1159.71px;font-size:29px;line-height:29px;font-weight:700;transform:scaleX(1.0194);">L1</span>
<span class="t sf" style="left:474.00px;top:1159.71px;font-size:29px;line-height:29px;font-weight:700;transform:scaleX(0.9795);">d1</span>
<span class="t sf" style="left:774.20px;top:1159.71px;font-size:29px;line-height:29px;font-weight:700;transform:scaleX(1.0121);">d2</span>
<span class="t sf" style="left:1011.25px;top:1159.71px;font-size:29px;line-height:29px;font-weight:700;transform:scaleX(1.0490);">L2</span>
<div style="position:absolute;left:1322px;top:232px;width:1280px;height:959px;background:#f0f0f0;border:2px solid #727272;border-radius:10px 10px 0 0"></div>
<div style="position:absolute;left:1324px;top:280px;width:2px;height:907px;background:#fff"></div>
<div style="position:absolute;left:1324px;top:1187px;width:1276px;height:2px;background:#c8c8c8"></div>
<div style="position:absolute;left:2596px;top:280px;width:2px;height:907px;background:#c8c8c8"></div>
<div style="position:absolute;left:1324px;top:234px;width:1276px;height:45px;background:linear-gradient(#fff 0,#f6f6f6 48%,#e9e9e9 52%,#ececec 100%);border-radius:9px 9px 0 0;border-bottom:2px solid #9a9a9a;height:46px"></div>
<svg style="left:1331px;top:239px" width="38" height="35" viewBox="0 0 48 48" preserveAspectRatio="none"><path d="M4 18C10 21 14 26 24 26C34 26 38 21 44 18Q46.5 31 44 45C38 42 34 38 24 38C14 38 10 42 4 45Q1.5 31 4 18Z" fill="url(#gbeam)"/><path d="M4.6 14.6Q0.10000000000000009 31.150000000000002 4.6 47.7" fill="none" stroke="#5a4c38" stroke-width="2.8"/><path d="M43.4 14.6Q47.9 31.150000000000002 43.4 47.7" fill="none" stroke="#5a4c38" stroke-width="2.8"/><rect x="19.2" y="17" width="9.8" height="28" fill="url(#gcry2)" fill-opacity=".78" stroke="#22b8fa" stroke-width="2"/><text x="11.2" y="11.6" font-family="Liberation Serif" font-weight="700" font-size="24" text-anchor="middle" fill="#00406e">ω</text><text x="37" y="11.6" font-family="Liberation Serif" font-weight="700" font-size="24" text-anchor="middle" fill="#00406e">ω</text></svg>
<span class="t" style="left:1863.00px;top:248.21px;font-size:23.5px;line-height:23.5px;">MR-Caustic</span>
<div class="wb" style="left:2474px;top:239px;width:35px;height:35px"></div>
<div class="wb" style="left:2515px;top:239px;width:35px;height:35px"></div>
<div class="wb" style="left:2555px;top:239px;width:35px;height:35px"></div>
<svg style="left:0;top:0" width="2736" height="300"><g fill="none" stroke="#000" stroke-width="3.6"><path d="M2483.5 262.5h16" stroke-width="4.4"/><rect x="2525.5" y="250.5" width="14" height="12.5" stroke-width="2.6"/><path d="M2524.2 251h16.6" stroke-width="4.6"/><path d="M2565.5 249.5l14 14M2579.5 249.5l-14 14" stroke-width="4.6"/></g></svg>
<div class="sep" style="left:1476.5px;top:298px;height:40px"></div>
<div class="sep" style="left:1557px;top:298px;height:40px"></div>
<div class="sep" style="left:1768px;top:298px;height:40px"></div>
<div class="sep" style="left:1980px;top:298px;height:40px"></div>
<div class="sep" style="left:2192px;top:298px;height:40px"></div>
<div class="sep" style="left:2405px;top:298px;height:40px"></div>
<div style="position:absolute;left:1631px;top:289px;width:62px;height:60px;background:#e0e0e0;border:1.5px solid #b8b8b8;border-radius:6px"></div>
<div style="position:absolute;left:1697px;top:289px;width:62px;height:60px;background:#e0e0e0;border:1.5px solid #b8b8b8;border-radius:6px"></div>
<svg width="0" height="0" style="position:absolute"><defs>
<linearGradient id="gupd" x1="0" y1="0" x2="1" y2="1"><stop offset="0" stop-color="#92d692"/><stop offset=".45" stop-color="#7cc07c"/><stop offset="1" stop-color="#5a9c5a"/></linearGradient>
<linearGradient id="gupdb" x1="0" y1="0" x2="1" y2="1"><stop offset="0" stop-color="#9ade9a"/><stop offset=".45" stop-color="#80c480"/><stop offset="1" stop-color="#569856"/></linearGradient>
<linearGradient id="gupr" x1="0" y1="0" x2="1" y2="1"><stop offset="0" stop-color="#e89090"/><stop offset=".45" stop-color="#c87474"/><stop offset="1" stop-color="#985050"/></linearGradient>
<linearGradient id="guprb" x1="0" y1="0" x2="1" y2="1"><stop offset="0" stop-color="#f08080"/><stop offset=".45" stop-color="#c87070"/><stop offset="1" stop-color="#904848"/></linearGradient>
<linearGradient id="gwt" x1="0" y1="0" x2="1" y2="0"><stop offset="0" stop-color="#3c48a4"/><stop offset="1" stop-color="#5cacec"/></linearGradient>
<linearGradient id="gwb" x1="0" y1="0" x2="1" y2="1"><stop offset="0" stop-color="#fff"/><stop offset="1" stop-color="#c8c8c8"/></linearGradient>
<linearGradient id="ghandle" x1="0" y1="0" x2="1" y2="1"><stop offset="0" stop-color="#fbe08a"/><stop offset="1" stop-color="#d8a040"/></linearGradient>
<linearGradient id="gmb" x1="0" y1="0" x2="1" y2="1"><stop offset="0" stop-color="#b0a8ec"/><stop offset=".5" stop-color="#5858b0"/><stop offset="1" stop-color="#18186c"/></linearGradient>
<linearGradient id="gmr" x1="0" y1="0" x2="1" y2="1"><stop offset="0" stop-color="#f0a0a8"/><stop offset=".5" stop-color="#b85860"/><stop offset="1" stop-color="#782828"/></linearGradient>
<linearGradient id="gmg" x1="0" y1="0" x2="1" y2="1"><stop offset="0" stop-color="#48e050"/><stop offset=".5" stop-color="#20b030"/><stop offset="1" stop-color="#0c7018"/></linearGradient>
</defs></svg>
<svg style="left:1346px;top:294px" width="48" height="48" viewBox="0 0 48 48"><path d="M4 21.5C3 10 9 2.3 17.5 2.3C24 2.3 29 5 33 9.4L35 10.6L39.9 5.9V23.3H23.9L29.6 17.4C27 13 23 10.8 17.5 10.8C12 10.8 8.6 14 8.6 21.5L8.4 22.7H6.2Z" fill="url(#gupd)"/><path d="M4 21.5C3 10 9 2.3 17.5 2.3C24 2.3 29 5 33 9.4L35 10.6L39.9 5.9V23.3H23.9L29.6 17.4C27 13 23 10.8 17.5 10.8C12 10.8 8.6 14 8.6 21.5L8.4 22.7H6.2Z" fill="url(#gupdb)" transform="rotate(180 23.9 24.1)"/></svg>
<svg style="left:1412px;top:294px" width="48" height="48" viewBox="0 0 48 48"><g transform="translate(-3.76,-2.2) scale(.915,1)"><path d="M4 21.5C3 10 9 2.3 17.5 2.3C24 2.3 29 5 33 9.4L35 10.6L39.9 5.9V23.3H23.9L29.6 17.4C27 13 23 10.8 17.5 10.8C12 10.8 8.6 14 8.6 21.5L8.4 22.7H6.2Z" fill="url(#gupr)"/><path d="M4 21.5C3 10 9 2.3 17.5 2.3C24 2.3 29 5 33 9.4L35 10.6L39.9 5.9V23.3H23.9L29.6 17.4C27 13 23 10.8 17.5 10.8C12 10.8 8.6 14 8.6 21.5L8.4 22.7H6.2Z" fill="url(#guprb)" transform="rotate(180 23.9 24.1)"/></g><rect x="23" y="24.8" width="24.4" height="22.4" fill="url(#gwb)" stroke="#8c8c8c" stroke-width="1.6"/><rect x="22.4" y="24.2" width="25.6" height="5.8" fill="url(#gwt)"/><rect x="38" y="26" width="8.2" height="2" fill="#b8dcf8"/><clipPath id="u2c"><path d="M22 36.6H38.6L36 45H22Z"/></clipPath><g clip-path="url(#u2c)" opacity=".85"><g transform="translate(-3.76,-2.2) scale(.915,1)"><path d="M4 21.5C3 10 9 2.3 17.5 2.3C24 2.3 29 5 33 9.4L35 10.6L39.9 5.9V23.3H23.9L29.6 17.4C27 13 23 10.8 17.5 10.8C12 10.8 8.6 14 8.6 21.5L8.4 22.7H6.2Z" fill="url(#gupr)"/><path d="M4 21.5C3 10 9 2.3 17.5 2.3C24 2.3 29 5 33 9.4L35 10.6L39.9 5.9V23.3H23.9L29.6 17.4C27 13 23 10.8 17.5 10.8C12 10.8 8.6 14 8.6 21.5L8.4 22.7H6.2Z" fill="url(#guprb)" transform="rotate(180 23.9 24.1)"/></g></g></svg>
<svg style="left:1492px;top:294px" width="48" height="48" viewBox="0 0 48 48"><g stroke="#1a98f8" fill="none" transform="translate(24,24)"><circle r="14.5" fill="#1a98f8" stroke="none" opacity=".22"/><g transform="rotate(0)"><path d="M0 0V-24" stroke-width="3.2"/><path d="M-4.8 -22L0 -16.5L4.8 -22M-4.6 -15.5L0 -10.5L4.6 -15.5" stroke-width="2"/></g><g transform="rotate(45)"><path d="M0 0V-19.5" stroke-width="2.6"/><path d="M-4.8 -17.5L0 -12.0L4.8 -17.5M-4.6 -11.0L0 -6.0L4.6 -11.0" stroke-width="2"/></g><g transform="rotate(90)"><path d="M0 0V-21.5" stroke-width="3.2"/><path d="M-4.8 -19.5L0 -14.0L4.8 -19.5M-4.6 -13.0L0 -8.0L4.6 -13.0" stroke-width="2"/></g><g transform="rotate(135)"><path d="M0 0V-19.5" stroke-width="2.6"/><path d="M-4.8 -17.5L0 -12.0L4.8 -17.5M-4.6 -11.0L0 -6.0L4.6 -11.0" stroke-width="2"/></g><g transform="rotate(180)"><path d="M0 0V-24" stroke-width="3.2"/><path d="M-4.8 -22L0 -16.5L4.8 -22M-4.6 -15.5L0 -10.5L4.6 -15.5" stroke-width="2"/></g><g transform="rotate(225)"><path d="M0 0V-19.5" stroke-width="2.6"/><path d="M-4.8 -17.5L0 -12.0L4.8 -17.5M-4.6 -11.0L0 -6.0L4.6 -11.0" stroke-width="2"/></g><g transform="rotate(270)"><path d="M0 0V-21.5" stroke-width="3.2"/><path d="M-4.8 -19.5L0 -14.0L4.8 -19.5M-4.6 -13.0L0 -8.0L4.6 -13.0" stroke-width="2"/></g><g transform="rotate(315)"><path d="M0 0V-19.5" stroke-width="2.6"/><path d="M-4.8 -17.5L0 -12.0L4.8 -17.5M-4.6 -11.0L0 -6.0L4.6 -11.0" stroke-width="2"/></g><circle r="6.5" fill="#1a98f8" stroke="none"/><circle r="10.5" stroke-width="2.6" stroke-dasharray="2.6 1.6"/></g></svg>
<svg style="left:1572px;top:294px" width="48" height="48" viewBox="0 0 48 48"><g stroke="#10206c" stroke-width="1.9" fill="none"><path d="M6.8 2.5V48M0 24.9H45.7"/><path d="M2.3999999999999995 8.1L6.8 2.5L11.2 8.1M40.300000000000004 20.5L45.7 24.9L40.300000000000004 29.299999999999997" stroke-width="1.52"/></g><text x="27" y="20" font-family="Liberation Serif" font-weight="700" font-size="25" text-anchor="middle" fill="#088008">T</text><text x="26.4" y="44.7" font-family="Liberation Serif" font-weight="700" font-size="25" text-anchor="middle" fill="#e41010">S</text></svg>
<svg style="left:1638px;top:294px" width="48" height="48" viewBox="0 0 48 48"><g stroke="#10206c" stroke-width="1.9" fill="none"><path d="M6.7 2.2V48M0 41H45.9"/><path d="M2.3 7.8L6.7 2.2L11.100000000000001 7.8M40.5 36.6L45.9 41L40.5 45.4" stroke-width="1.52"/></g><text x="14.6" y="23.4" font-family="Liberation Serif" font-size="33" fill="#111" textLength="25.2" lengthAdjust="spacingAndGlyphs">T</text><path d="M7.8 34.6C22 34.6 36 30 47.5 16.8" fill="none" stroke="#10a020" stroke-width="3"/></svg>
<svg style="left:1704px;top:294px" width="48" height="48" viewBox="0 0 48 48"><g stroke="#10206c" stroke-width="1.9" fill="none"><path d="M6.7 2.2V48M0 41H45.9"/><path d="M2.3 7.8L6.7 2.2L11.100000000000001 7.8M40.5 36.6L45.9 41L40.5 45.4" stroke-width="1.52"/></g><text x="17.4" y="23.6" font-family="Liberation Serif" font-size="33" fill="#111" textLength="18.6" lengthAdjust="spacingAndGlyphs">S</text><path d="M7.8 34.6C22 34.6 36 30 47.5 16.8" fill="none" stroke="#f82828" stroke-width="3"/></svg>
<svg style="left:1784px;top:294px" width="48" height="48" viewBox="0 0 48 48"><g stroke="#3c5c9c" stroke-width="1.8" fill="none"><path d="M4.8 2.2V48M0.2 42.8H46"/><path d="M0.7999999999999998 7L4.8 2L8.8 7M41.6 38.8L46.2 42.8L41.6 46.8" stroke="#5878c0"/></g><rect x="13.2" y="10.7" width="24" height="24.5" fill="#c2daf2"/><g stroke="#0838a8" stroke-width="2" stroke-dasharray="2 2.2"><path d="M13.2 0V48M37.2 0V48M0 10.7H47M0 35.2H47"/></g><path d="M25.1 4V42M6 22.9H44" stroke="#000" stroke-width="2.2"/><path d="M25.1 0L32.5 9H17.7ZM25.1 45.9L32.5 37H17.7ZM2.5 22.9L11.5 15.5V30.3ZM47.6 22.9L38.6 15.5V30.3Z" fill="#000"/></svg>
<svg style="left:1850px;top:294px" width="48" height="48" viewBox="0 0 48 48"><path d="M5.7 48V9H0.7000000000000002L7.7 0L14.7 9H9.7V48Z" fill="#5878a8"/><path d="M0 37.7H38.5V32.7L47.5 39.7L38.5 46.7V41.7H0Z" fill="#5878a8"/><path d="M27 18L42.5 2.6L47 7L31.4 22.4Z" fill="url(#ghandle)" stroke="#b08838" stroke-width="1.2"/><circle cx="16.1" cy="30.6" r="14.4" fill="#bce8f8" stroke="url(#gmb)" stroke-width="3.4"/><path d="M7.100000000000001 24.6A11 11 0 0 1 14.100000000000001 19.6" stroke="#fff" stroke-width="2.6" fill="none" opacity=".9"/><path d="M21.1 40.1l4 -4" stroke="#fff" stroke-width="2.4" opacity=".9"/><path d="M6.600000000000001 30.6H25.6M16.1 21.1V40.1" stroke="#18186c" stroke-width="4.6"/></svg>
<svg style="left:1916px;top:294px" width="48" height="48" viewBox="0 0 48 48"><path d="M5.7 48V9H0.7000000000000002L7.7 0L14.7 9H9.7V48Z" fill="#5878a8"/><path d="M0 37.7H38.5V32.7L47.5 39.7L38.5 46.7V41.7H0Z" fill="#5878a8"/><path d="M27 18L42.5 2.6L47 7L31.4 22.4Z" fill="url(#ghandle)" stroke="#b08838" stroke-width="1.2"/><circle cx="16.1" cy="30.6" r="14.4" fill="#bce8f8" stroke="url(#gmb)" stroke-width="3.4"/><path d="M7.100000000000001 24.6A11 11 0 0 1 14.100000000000001 19.6" stroke="#fff" stroke-width="2.6" fill="none" opacity=".9"/><path d="M21.1 40.1l4 -4" stroke="#fff" stroke-width="2.4" opacity=".9"/><path d="M6.600000000000001 30.6H25.6" stroke="#18186c" stroke-width="5"/></svg>
<svg style="left:1996px;top:294px" width="48" height="48" viewBox="0 0 48 48"><g stroke="#3c5c9c" stroke-width="1.8" fill="none"><path d="M4.9 2.2V48M0.2 43.4H46"/><path d="M0.9000000000000004 7L4.9 2L8.9 7M41.6 39.4L46.2 43.4L41.6 47.4" stroke="#5878c0"/></g><rect x="12.4" y="0" width="25" height="48" fill="#f4c8c8"/><path d="M12.4 0V48M37.4 0V48" stroke="#f80000" stroke-width="2" stroke-dasharray="2 2.2"/><path d="M6 23.3H44" stroke="#000" stroke-width="2.4"/><path d="M1.8 23.3L11 16V30.6ZM47.9 23.3L38.7 16V30.6Z" fill="#000"/></svg>
<svg style="left:2062px;top:294px" width="48" height="48" viewBox="0 0 48 48"><path d="M0 37.7H38.9V32.7L47.9 39.7L38.9 46.7V41.7H0Z" fill="#5878a8"/><path d="M27 18L42.5 2.6L47 7L31.4 22.4Z" fill="url(#ghandle)" stroke="#b08838" stroke-width="1.2"/><circle cx="16.2" cy="30.6" r="14.4" fill="#f0cce4" stroke="url(#gmr)" stroke-width="3.4"/><path d="M7.199999999999999 24.6A11 11 0 0 1 14.2 19.6" stroke="#fff" stroke-width="2.6" fill="none" opacity=".9"/><path d="M21.2 40.1l4 -4" stroke="#fff" stroke-width="2.4" opacity=".9"/><path d="M6.699999999999999 30.6H25.7M16.2 21.1V40.1" stroke="#6c3030" stroke-width="4.6"/></svg>
<svg style="left:2128px;top:294px" width="48" height="48" viewBox="0 0 48 48"><path d="M0 37.7H38.9V32.7L47.9 39.7L38.9 46.7V41.7H0Z" fill="#5878a8"/><path d="M27 18L42.5 2.6L47 7L31.4 22.4Z" fill="url(#ghandle)" stroke="#b08838" stroke-width="1.2"/><circle cx="16.2" cy="30.6" r="14.4" fill="#f0cce4" stroke="url(#gmr)" stroke-width="3.4"/><path d="M7.199999999999999 24.6A11 11 0 0 1 14.2 19.6" stroke="#fff" stroke-width="2.6" fill="none" opacity=".9"/><path d="M21.2 40.1l4 -4" stroke="#fff" stroke-width="2.4" opacity=".9"/><path d="M6.699999999999999 30.6H25.7" stroke="#6c3030" stroke-width="5"/></svg>
<svg style="left:2208px;top:294px" width="48" height="48" viewBox="0 0 48 48"><g stroke="#3c5c9c" stroke-width="1.8" fill="none"><path d="M4.6 2.2V48M0.2 43.4H46"/><path d="M0.5999999999999996 7L4.6 2L8.6 7M41.6 39.4L46.2 43.4L41.6 47.4" stroke="#5878c0"/></g><rect x="0" y="10.5" width="47.6" height="24.8" fill="#c6f0d2"/><path d="M0 10.5H47.6M0 35.3H47.6" stroke="#08a020" stroke-width="2" stroke-dasharray="2 2.2"/><path d="M25.1 4V42" stroke="#000" stroke-width="2.4"/><path d="M25.1 0L32.4 9.2H17.8ZM25.1 45.8L32.4 36.6H17.8Z" fill="#000"/></svg>
<svg style="left:2274px;top:294px" width="48" height="48" viewBox="0 0 48 48"><path d="M6.1 48V9H1.0999999999999996L8.1 0L15.1 9H10.1V48Z" fill="#5878a8"/><path d="M27 18L42.5 2.6L47 7L31.4 22.4Z" fill="url(#ghandle)" stroke="#b08838" stroke-width="1.2"/><circle cx="15.9" cy="30.6" r="14.4" fill="#b8f0f0" stroke="url(#gmg)" stroke-width="3.4"/><path d="M6.9 24.6A11 11 0 0 1 13.9 19.6" stroke="#fff" stroke-width="2.6" fill="none" opacity=".9"/><path d="M20.9 40.1l4 -4" stroke="#fff" stroke-width="2.4" opacity=".9"/><path d="M6.4 30.6H25.4M15.9 21.1V40.1" stroke="#286830" stroke-width="4.6"/></svg>
<svg style="left:2340px;top:294px" width="48" height="48" viewBox="0 0 48 48"><path d="M6.1 48V9H1.0999999999999996L8.1 0L15.1 9H10.1V48Z" fill="#5878a8"/><path d="M27 18L42.5 2.6L47 7L31.4 22.4Z" fill="url(#ghandle)" stroke="#b08838" stroke-width="1.2"/><circle cx="15.9" cy="30.6" r="14.4" fill="#b8f0f0" stroke="url(#gmg)" stroke-width="3.4"/><path d="M6.9 24.6A11 11 0 0 1 13.9 19.6" stroke="#fff" stroke-width="2.6" fill="none" opacity=".9"/><path d="M20.9 40.1l4 -4" stroke="#fff" stroke-width="2.4" opacity=".9"/><path d="M6.4 30.6H25.4" stroke="#286830" stroke-width="5"/></svg>
<svg style="left:1348px;top:374px" width="28" height="30" viewBox="0 0 28 30"><rect x="1" y="1" width="26" height="28" fill="#fff" stroke="#7088c8" stroke-width="1.8"/><rect x="1.8" y="1.8" width="24.4" height="3.6" fill="#b8c4f0"/><path d="M1 28.6H27" stroke="#30407c" stroke-width="2.4"/><g stroke="#a8bce8" stroke-width="1.6"><path d="M12.88 5V28M2 11.5H26M2 17.5H26M2 23.5H26"/></g></svg>
<svg style="left:1396px;top:374px" width="32" height="32" viewBox="0 0 32 32"><rect x="1" y="1" width="30" height="30" fill="#fff" stroke="#8898c8" stroke-width="1.8"/><path d="M1 30.8H31" stroke="#30407c" stroke-width="2.6"/><path d="M1 16.0H31" stroke="#30407c" stroke-width="2"/><g stroke="#111" stroke-width="2.2" fill="none"><path d="M5 12.6V4.6L9 9L13 4.6V12.6"/><path d="M18 6.4H26M18 10.6H26"/><path d="M5 19.6V26.6L9 22.6L13 26.6V19.6"/><path d="M18 21.4H26M18 25.6H26"/></g></svg>
<svg style="left:2544px;top:372px" width="40" height="40"><path d="M2 9.2H34M15 2V34.4" stroke="#111" stroke-width="2"/><path d="M17.4 11.6L17.4 27.4L21.2 24L24.4 31L27 29.8L24 23L29 22.6Z" fill="#fff" stroke="#3a4a7a" stroke-width="1.3"/></svg>
<div class="sep" style="left:1444px;top:377px;height:30px"></div>
<div style="position:absolute;left:1452.5px;top:368.5px;width:108.5px;height:47.5px;background:#e1e1e1;border:1.5px solid #adadad;border-radius:7px 3px 3px 7px"></div>
<div style="position:absolute;left:1563px;top:368.5px;width:23px;height:47.5px;background:#e1e1e1;border:1.5px solid #adadad;border-radius:3px 7px 7px 3px"></div>
<svg style="left:1567px;top:385px" width="16" height="10"><path d="M1 1h14l-7 7.5z" fill="#4a4a4a"/></svg>
<span class="t" style="left:1473.00px;top:382.11px;font-size:23.5px;line-height:23.5px;transform:scaleX(0.8864);">Cursor</span>
<div style="position:absolute;left:1594px;top:366px;width:940px;height:52px;background:#fff;border:2px solid #b9b9b9"></div>
<span class="t" style="left:1603.80px;top:380.84px;font-size:25px;line-height:25px;transform:scaleX(1.0623);">X = </span>
<span class="t" style="left:1651.78px;top:380.84px;font-size:25px;line-height:25px;color:#0000ff;transform:scaleX(1.0623);text-decoration:underline;text-decoration-thickness:2px;text-underline-offset:3px;">264.239</span>
<span class="t" style="left:1747.78px;top:380.84px;font-size:25px;line-height:25px;transform:scaleX(1.0623);">; Y = </span>
<span class="t" style="left:1809.56px;top:380.84px;font-size:25px;line-height:25px;color:#0000ff;transform:scaleX(1.0623);text-decoration:underline;text-decoration-thickness:2px;text-underline-offset:3px;">50.5817</span>
<span class="t" style="left:1905.56px;top:380.84px;font-size:25px;line-height:25px;transform:scaleX(1.0623);">; Wt = 50.1931; Ws = 50.1931</span>
<svg style="left:1330px;top:427px" width="1264" height="712" viewBox="1330 427 1264 712">
<rect x="1330" y="427" width="1264" height="712" fill="#fff"/>
<g stroke="#9a9a9a" stroke-width="1.4" stroke-dasharray="1.6 4.4" fill="none">
<path d="M1674.3 456V1057"/>
<path d="M2053.0 456V1057"/>
<path d="M2242.3 456V1057"/>
<path d="M2431.6 456V1057"/>
<path d="M1467 1029.4H2564"/>
<path d="M1467 832.6H2564"/>
<path d="M1467 734.2H2564"/>
<path d="M1467 635.8H2564"/>
<path d="M1467 537.4H2564"/>
</g>
<g stroke="#c4c4c4" stroke-width="1.8"><path d="M1485.0 456V1057"/><path d="M1457 931.0H2564"/></g>
<g stroke="#ff3cff" stroke-width="2.6" stroke-dasharray="8 5" fill="none">
<path d="M1863.6 453V1057"/>
<path d="M1967.8 453V1057"/>
<path d="M2003.7 453V1057"/>
<path d="M2107.9 453V1057"/>
</g>
<polyline points="1485.0,743.1 1485.9,743.1 1486.9,743.0 1487.8,743.0 1488.8,743.0 1489.7,743.0 1490.7,743.0 1491.6,743.0 1492.6,742.9 1493.5,742.9 1494.5,742.9 1495.4,742.8 1496.4,742.8 1497.3,742.8 1498.3,742.7 1499.2,742.7 1500.1,742.6 1501.1,742.6 1502.0,742.5 1503.0,742.4 1503.9,742.4 1504.9,742.3 1505.8,742.2 1506.8,742.1 1507.7,742.1 1508.7,742.0 1509.6,741.9 1510.6,741.8 1511.5,741.7 1512.5,741.6 1513.4,741.5 1514.3,741.4 1515.3,741.3 1516.2,741.2 1517.2,741.1 1518.1,740.9 1519.1,740.8 1520.0,740.7 1521.0,740.6 1521.9,740.4 1522.9,740.3 1523.8,740.2 1524.8,740.0 1525.7,739.9 1526.7,739.7 1527.6,739.6 1528.5,739.4 1529.5,739.3 1530.4,739.1 1531.4,738.9 1532.3,738.8 1533.3,738.6 1534.2,738.4 1535.2,738.3 1536.1,738.1 1537.1,737.9 1538.0,737.7 1539.0,737.5 1539.9,737.3 1540.8,737.1 1541.8,736.9 1542.7,736.7 1543.7,736.5 1544.6,736.3 1545.6,736.1 1546.5,735.9 1547.5,735.7 1548.4,735.4 1549.4,735.2 1550.3,735.0 1551.3,734.8 1552.2,734.5 1553.2,734.3 1554.1,734.0 1555.0,733.8 1556.0,733.6 1556.9,733.3 1557.9,733.1 1558.8,732.8 1559.8,732.5 1560.7,732.3 1561.7,732.0 1562.6,731.8 1563.6,731.5 1564.5,731.2 1565.5,730.9 1566.4,730.7 1567.4,730.4 1568.3,730.1 1569.2,729.8 1570.2,729.5 1571.1,729.2 1572.1,728.9 1573.0,728.6 1574.0,728.3 1574.9,728.0 1575.9,727.7 1576.8,727.4 1577.8,727.1 1578.7,726.8 1579.7,726.5 1580.6,726.2 1581.6,725.8 1582.5,725.5 1583.4,725.2 1584.4,724.9 1585.3,724.5 1586.3,724.2 1587.2,723.8 1588.2,723.5 1589.1,723.2 1590.1,722.8 1591.0,722.5 1592.0,722.1 1592.9,721.8 1593.9,721.4 1594.8,721.1 1595.8,720.7 1596.7,720.3 1597.6,720.0 1598.6,719.6 1599.5,719.2 1600.5,718.9 1601.4,718.5 1602.4,718.1 1603.3,717.7 1604.3,717.3 1605.2,717.0 1606.2,716.6 1607.1,716.2 1608.1,715.8 1609.0,715.4 1610.0,715.0 1610.9,714.6 1611.8,714.2 1612.8,713.8 1613.7,713.4 1614.7,713.0 1615.6,712.6 1616.6,712.2 1617.5,711.7 1618.5,711.3 1619.4,710.9 1620.4,710.5 1621.3,710.1 1622.3,709.6 1623.2,709.2 1624.2,708.8 1625.1,708.3 1626.0,707.9 1627.0,707.5 1627.9,707.0 1628.9,706.6 1629.8,706.2 1630.8,705.7 1631.7,705.3 1632.7,704.8 1633.6,704.4 1634.6,703.9 1635.5,703.5 1636.5,703.0 1637.4,702.6 1638.3,702.1 1639.3,701.6 1640.2,701.2 1641.2,700.7 1642.1,700.2 1643.1,699.8 1644.0,699.3 1645.0,698.8 1645.9,698.3 1646.9,697.9 1647.8,697.4 1648.8,696.9 1649.7,696.4 1650.7,695.9 1651.6,695.5 1652.5,695.0 1653.5,694.5 1654.4,694.0 1655.4,693.5 1656.3,693.0 1657.3,692.5 1658.2,692.0 1659.2,691.5 1660.1,691.0 1661.1,690.5 1662.0,690.0 1663.0,689.5 1663.9,689.0 1664.9,688.5 1665.8,688.0 1666.7,687.5 1667.7,687.0 1668.6,686.4 1669.6,685.9 1670.5,685.4 1671.5,684.9 1672.4,684.4 1673.4,683.8 1674.3,683.3 1675.3,682.8 1676.2,682.3 1677.2,681.7 1678.1,681.2 1679.1,680.7 1680.0,680.1 1680.9,679.6 1681.9,679.1 1682.8,678.5 1683.8,678.0 1684.7,677.4 1685.7,676.9 1686.6,676.4 1687.6,675.8 1688.5,675.3 1689.5,674.7 1690.4,674.2 1691.4,673.6 1692.3,673.1 1693.3,672.5 1694.2,672.0 1695.1,671.4 1696.1,670.8 1697.0,670.3 1698.0,669.7 1698.9,669.2 1699.9,668.6 1700.8,668.0 1701.8,667.5 1702.7,666.9 1703.7,666.3 1704.6,665.8 1705.6,665.2 1706.5,664.6 1707.5,664.1 1708.4,663.5 1709.3,662.9 1710.3,662.3 1711.2,661.8 1712.2,661.2 1713.1,660.6 1714.1,660.0 1715.0,659.4 1716.0,658.9 1716.9,658.3 1717.9,657.7 1718.8,657.1 1719.8,656.5 1720.7,655.9 1721.7,655.3 1722.6,654.7 1723.5,654.2 1724.5,653.6 1725.4,653.0 1726.4,652.4 1727.3,651.8 1728.3,651.2 1729.2,650.6 1730.2,650.0 1731.1,649.4 1732.1,648.8 1733.0,648.2 1734.0,647.6 1734.9,647.0 1735.8,646.4 1736.8,645.8 1737.7,645.2 1738.7,644.5 1739.6,643.9 1740.6,643.3 1741.5,642.7 1742.5,642.1 1743.4,641.5 1744.4,640.9 1745.3,640.3 1746.3,639.6 1747.2,639.0 1748.2,638.4 1749.1,637.8 1750.0,637.2 1751.0,636.6 1751.9,635.9 1752.9,635.3 1753.8,634.7 1754.8,634.1 1755.7,633.4 1756.7,632.8 1757.6,632.2 1758.6,631.6 1759.5,630.9 1760.5,630.3 1761.4,629.7 1762.4,629.0 1763.3,628.4 1764.2,627.8 1765.2,627.1 1766.1,626.5 1767.1,625.9 1768.0,625.2 1769.0,624.6 1769.9,624.0 1770.9,623.3 1771.8,622.7 1772.8,622.0 1773.7,621.4 1774.7,620.8 1775.6,620.1 1776.6,619.5 1777.5,618.8 1778.4,618.2 1779.4,617.5 1780.3,616.9 1781.3,616.3 1782.2,615.6 1783.2,615.0 1784.1,614.3 1785.1,613.7 1786.0,613.0 1787.0,612.4 1787.9,611.7 1788.9,611.1 1789.8,610.4 1790.8,609.7 1791.7,609.1 1792.6,608.4 1793.6,607.8 1794.5,607.1 1795.5,606.5 1796.4,605.8 1797.4,605.1 1798.3,604.5 1799.3,603.8 1800.2,603.2 1801.2,602.5 1802.1,601.8 1803.1,601.2 1804.0,600.5 1805.0,599.9 1805.9,599.2 1806.8,598.5 1807.8,597.9 1808.7,597.2 1809.7,596.5 1810.6,595.9 1811.6,595.2 1812.5,594.5 1813.5,593.9 1814.4,593.2 1815.4,592.5 1816.3,591.8 1817.3,591.2 1818.2,590.5 1819.1,589.8 1820.1,589.2 1821.0,588.5 1822.0,587.8 1822.9,587.1 1823.9,586.5 1824.8,585.8 1825.8,585.1 1826.7,584.4 1827.7,583.7 1828.6,583.1 1829.6,582.4 1830.5,581.7 1831.5,581.0 1832.4,580.3 1833.3,579.7 1834.3,579.0 1835.2,578.3 1836.2,577.6 1837.1,576.9 1838.1,576.3 1839.0,575.6 1840.0,574.9 1840.9,574.2 1841.9,573.5 1842.8,572.8 1843.8,572.1 1844.7,571.4 1845.7,570.8 1846.6,570.1 1847.5,569.4 1848.5,568.7 1849.4,568.0 1850.4,567.3 1851.3,566.6 1852.3,565.9 1853.2,565.2 1854.2,564.5 1855.1,563.9 1856.1,563.2 1857.0,562.5 1858.0,561.8 1858.9,561.1 1859.9,560.4 1860.8,559.7 1861.7,559.0 1862.7,558.3 1863.6,557.6 1864.6,559.8 1865.5,562.8 1866.5,565.8 1867.4,568.9 1868.4,571.9 1869.3,575.0 1870.3,578.0 1871.2,581.1 1872.2,584.1 1873.1,587.1 1874.1,590.2 1875.0,593.2 1875.9,596.2 1876.9,599.3 1877.8,602.3 1878.8,605.4 1879.7,608.4 1880.7,611.4 1881.6,614.5 1882.6,617.5 1883.5,620.5 1884.5,623.6 1885.4,626.6 1886.4,629.6 1887.3,632.7 1888.3,635.7 1889.2,638.7 1890.1,641.7 1891.1,644.8 1892.0,647.8 1893.0,650.8 1893.9,653.8 1894.9,656.9 1895.8,659.9 1896.8,662.9 1897.7,665.9 1898.7,668.9 1899.6,671.9 1900.6,675.0 1901.5,678.0 1902.5,681.0 1903.4,684.0 1904.3,687.0 1905.3,690.0 1906.2,693.0 1907.2,696.0 1908.1,699.0 1909.1,702.0 1910.0,705.0 1911.0,708.0 1911.9,711.0 1912.9,714.0 1913.8,717.0 1914.8,720.0 1915.7,723.0 1916.6,725.9 1917.6,728.9 1918.5,731.9 1919.5,734.9 1920.4,737.8 1921.4,740.8 1922.3,743.8 1923.3,746.7 1924.2,749.7 1925.2,752.6 1926.1,755.6 1927.1,758.5 1928.0,761.5 1929.0,764.4 1929.9,767.3 1930.8,770.3 1931.8,773.2 1932.7,776.1 1933.7,779.0 1934.6,781.9 1935.6,784.8 1936.5,787.7 1937.5,790.6 1938.4,793.4 1939.4,796.3 1940.3,799.2 1941.3,802.0 1942.2,804.8 1943.2,807.7 1944.1,810.5 1945.0,813.3 1946.0,816.0 1946.9,818.8 1947.9,821.6 1948.8,824.3 1949.8,827.0 1950.7,829.7 1951.7,832.4 1952.6,835.0 1953.6,837.6 1954.5,840.2 1955.5,842.8 1956.4,845.3 1957.4,847.8 1958.3,850.3 1959.2,852.7 1960.2,855.0 1961.1,857.3 1962.1,859.6 1963.0,861.8 1964.0,863.9 1964.9,865.9 1965.9,867.9 1966.8,869.7 1967.8,871.5 1968.7,872.5 1969.7,873.4 1970.6,874.3 1971.6,875.1 1972.5,875.9 1973.4,876.7 1974.4,877.4 1975.3,878.0 1976.3,878.6 1977.2,879.2 1978.2,879.7 1979.1,880.1 1980.1,880.5 1981.0,880.8 1982.0,881.1 1982.9,881.3 1983.9,881.5 1984.8,881.6 1985.8,881.6 1986.7,881.6 1987.6,881.5 1988.6,881.3 1989.5,881.1 1990.5,880.8 1991.4,880.5 1992.4,880.1 1993.3,879.7 1994.3,879.2 1995.2,878.6 1996.2,878.0 1997.1,877.4 1998.1,876.7 1999.0,875.9 2000.0,875.1 2000.9,874.3 2001.8,873.4 2002.8,872.5 2003.7,871.5 2004.7,869.7 2005.6,867.9 2006.6,865.9 2007.5,863.9 2008.5,861.8 2009.4,859.6 2010.4,857.3 2011.3,855.0 2012.3,852.7 2013.2,850.3 2014.1,847.8 2015.1,845.3 2016.0,842.8 2017.0,840.2 2017.9,837.6 2018.9,835.0 2019.8,832.4 2020.8,829.7 2021.7,827.0 2022.7,824.3 2023.6,821.6 2024.6,818.8 2025.5,816.0 2026.5,813.3 2027.4,810.5 2028.3,807.7 2029.3,804.8 2030.2,802.0 2031.2,799.2 2032.1,796.3 2033.1,793.4 2034.0,790.6 2035.0,787.7 2035.9,784.8 2036.9,781.9 2037.8,779.0 2038.8,776.1 2039.7,773.2 2040.7,770.3 2041.6,767.3 2042.5,764.4 2043.5,761.5 2044.4,758.5 2045.4,755.6 2046.3,752.6 2047.3,749.7 2048.2,746.7 2049.2,743.8 2050.1,740.8 2051.1,737.8 2052.0,734.9 2053.0,731.9 2053.9,728.9 2054.9,725.9 2055.8,723.0 2056.7,720.0 2057.7,717.0 2058.6,714.0 2059.6,711.0 2060.5,708.0 2061.5,705.0 2062.4,702.0 2063.4,699.0 2064.3,696.0 2065.3,693.0 2066.2,690.0 2067.2,687.0 2068.1,684.0 2069.1,681.0 2070.0,678.0 2070.9,675.0 2071.9,671.9 2072.8,668.9 2073.8,665.9 2074.7,662.9 2075.7,659.9 2076.6,656.9 2077.6,653.8 2078.5,650.8 2079.5,647.8 2080.4,644.8 2081.4,641.7 2082.3,638.7 2083.3,635.7 2084.2,632.7 2085.1,629.6 2086.1,626.6 2087.0,623.6 2088.0,620.5 2088.9,617.5 2089.9,614.5 2090.8,611.4 2091.8,608.4 2092.7,605.4 2093.7,602.3 2094.6,599.3 2095.6,596.2 2096.5,593.2 2097.5,590.2 2098.4,587.1 2099.3,584.1 2100.3,581.1 2101.2,578.0 2102.2,575.0 2103.1,571.9 2104.1,568.9 2105.0,565.8 2106.0,562.8 2106.9,559.8 2107.9,556.7 2108.8,558.3 2109.8,559.0 2110.7,559.7 2111.6,560.4 2112.6,561.1 2113.5,561.8 2114.5,562.5 2115.4,563.2 2116.4,563.9 2117.3,564.5 2118.3,565.2 2119.2,565.9 2120.2,566.6 2121.1,567.3 2122.1,568.0 2123.0,568.7 2124.0,569.4 2124.9,570.1 2125.8,570.8 2126.8,571.4 2127.7,572.1 2128.7,572.8 2129.6,573.5 2130.6,574.2 2131.5,574.9 2132.5,575.6 2133.4,576.3 2134.4,576.9 2135.3,577.6 2136.3,578.3 2137.2,579.0 2138.2,579.7 2139.1,580.3 2140.0,581.0 2141.0,581.7 2141.9,582.4 2142.9,583.1 2143.8,583.7 2144.8,584.4 2145.7,585.1 2146.7,585.8 2147.6,586.5 2148.6,587.1 2149.5,587.8 2150.5,588.5 2151.4,589.2 2152.4,589.8 2153.3,590.5 2154.2,591.2 2155.2,591.8 2156.1,592.5 2157.1,593.2 2158.0,593.9 2159.0,594.5 2159.9,595.2 2160.9,595.9 2161.8,596.5 2162.8,597.2 2163.7,597.9 2164.7,598.5 2165.6,599.2 2166.6,599.9 2167.5,600.5 2168.4,601.2 2169.4,601.8 2170.3,602.5 2171.3,603.2 2172.2,603.8 2173.2,604.5 2174.1,605.1 2175.1,605.8 2176.0,606.5 2177.0,607.1 2177.9,607.8 2178.9,608.4 2179.8,609.1 2180.8,609.7 2181.7,610.4 2182.6,611.1 2183.6,611.7 2184.5,612.4 2185.5,613.0 2186.4,613.7 2187.4,614.3 2188.3,615.0 2189.3,615.6 2190.2,616.3 2191.2,616.9 2192.1,617.5 2193.1,618.2 2194.0,618.8 2194.9,619.5 2195.9,620.1 2196.8,620.8 2197.8,621.4 2198.7,622.0 2199.7,622.7 2200.6,623.3 2201.6,624.0 2202.5,624.6 2203.5,625.2 2204.4,625.9 2205.4,626.5 2206.3,627.1 2207.3,627.8 2208.2,628.4 2209.1,629.0 2210.1,629.7 2211.0,630.3 2212.0,630.9 2212.9,631.6 2213.9,632.2 2214.8,632.8 2215.8,633.4 2216.7,634.1 2217.7,634.7 2218.6,635.3 2219.6,635.9 2220.5,636.6 2221.5,637.2 2222.4,637.8 2223.3,638.4 2224.3,639.0 2225.2,639.6 2226.2,640.3 2227.1,640.9 2228.1,641.5 2229.0,642.1 2230.0,642.7 2230.9,643.3 2231.9,643.9 2232.8,644.5 2233.8,645.2 2234.7,645.8 2235.7,646.4 2236.6,647.0 2237.5,647.6 2238.5,648.2 2239.4,648.8 2240.4,649.4 2241.3,650.0 2242.3,650.6 2243.2,651.2 2244.2,651.8 2245.1,652.4 2246.1,653.0 2247.0,653.6 2248.0,654.2 2248.9,654.7 2249.9,655.3 2250.8,655.9 2251.7,656.5 2252.7,657.1 2253.6,657.7 2254.6,658.3 2255.5,658.9 2256.5,659.4 2257.4,660.0 2258.4,660.6 2259.3,661.2 2260.3,661.8 2261.2,662.3 2262.2,662.9 2263.1,663.5 2264.1,664.1 2265.0,664.6 2265.9,665.2 2266.9,665.8 2267.8,666.3 2268.8,666.9 2269.7,667.5 2270.7,668.0 2271.6,668.6 2272.6,669.2 2273.5,669.7 2274.5,670.3 2275.4,670.8 2276.4,671.4 2277.3,672.0 2278.3,672.5 2279.2,673.1 2280.1,673.6 2281.1,674.2 2282.0,674.7 2283.0,675.3 2283.9,675.8 2284.9,676.4 2285.8,676.9 2286.8,677.4 2287.7,678.0 2288.7,678.5 2289.6,679.1 2290.6,679.6 2291.5,680.1 2292.4,680.7 2293.4,681.2 2294.3,681.7 2295.3,682.3 2296.2,682.8 2297.2,683.3 2298.1,683.8 2299.1,684.4 2300.0,684.9 2301.0,685.4 2301.9,685.9 2302.9,686.4 2303.8,687.0 2304.8,687.5 2305.7,688.0 2306.6,688.5 2307.6,689.0 2308.5,689.5 2309.5,690.0 2310.4,690.5 2311.4,691.0 2312.3,691.5 2313.3,692.0 2314.2,692.5 2315.2,693.0 2316.1,693.5 2317.1,694.0 2318.0,694.5 2319.0,695.0 2319.9,695.5 2320.8,695.9 2321.8,696.4 2322.7,696.9 2323.7,697.4 2324.6,697.9 2325.6,698.3 2326.5,698.8 2327.5,699.3 2328.4,699.8 2329.4,700.2 2330.3,700.7 2331.3,701.2 2332.2,701.6 2333.2,702.1 2334.1,702.6 2335.0,703.0 2336.0,703.5 2336.9,703.9 2337.9,704.4 2338.8,704.8 2339.8,705.3 2340.7,705.7 2341.7,706.2 2342.6,706.6 2343.6,707.0 2344.5,707.5 2345.5,707.9 2346.4,708.3 2347.4,708.8 2348.3,709.2 2349.2,709.6 2350.2,710.1 2351.1,710.5 2352.1,710.9 2353.0,711.3 2354.0,711.7 2354.9,712.2 2355.9,712.6 2356.8,713.0 2357.8,713.4 2358.7,713.8 2359.7,714.2 2360.6,714.6 2361.6,715.0 2362.5,715.4 2363.4,715.8 2364.4,716.2 2365.3,716.6 2366.3,717.0 2367.2,717.3 2368.2,717.7 2369.1,718.1 2370.1,718.5 2371.0,718.9 2372.0,719.2 2372.9,719.6 2373.9,720.0 2374.8,720.3 2375.8,720.7 2376.7,721.1 2377.6,721.4 2378.6,721.8 2379.5,722.1 2380.5,722.5 2381.4,722.8 2382.4,723.2 2383.3,723.5 2384.3,723.8 2385.2,724.2 2386.2,724.5 2387.1,724.9 2388.1,725.2 2389.0,725.5 2389.9,725.8 2390.9,726.2 2391.8,726.5 2392.8,726.8 2393.7,727.1 2394.7,727.4 2395.6,727.7 2396.6,728.0 2397.5,728.3 2398.5,728.6 2399.4,728.9 2400.4,729.2 2401.3,729.5 2402.3,729.8 2403.2,730.1 2404.1,730.4 2405.1,730.7 2406.0,730.9 2407.0,731.2 2407.9,731.5 2408.9,731.8 2409.8,732.0 2410.8,732.3 2411.7,732.5 2412.7,732.8 2413.6,733.1 2414.6,733.3 2415.5,733.6 2416.5,733.8 2417.4,734.0 2418.3,734.3 2419.3,734.5 2420.2,734.8 2421.2,735.0 2422.1,735.2 2423.1,735.4 2424.0,735.7 2425.0,735.9 2425.9,736.1 2426.9,736.3 2427.8,736.5 2428.8,736.7 2429.7,736.9 2430.7,737.1 2431.6,737.3 2432.5,737.5 2433.5,737.7 2434.4,737.9 2435.4,738.1 2436.3,738.3 2437.3,738.4 2438.2,738.6 2439.2,738.8 2440.1,738.9 2441.1,739.1 2442.0,739.3 2443.0,739.4 2443.9,739.6 2444.9,739.7 2445.8,739.9 2446.7,740.0 2447.7,740.2 2448.6,740.3 2449.6,740.4 2450.5,740.6 2451.5,740.7 2452.4,740.8 2453.4,740.9 2454.3,741.1 2455.3,741.2 2456.2,741.3 2457.2,741.4 2458.1,741.5 2459.1,741.6 2460.0,741.7 2460.9,741.8 2461.9,741.9 2462.8,742.0 2463.8,742.1 2464.7,742.1 2465.7,742.2 2466.6,742.3 2467.6,742.4 2468.5,742.4 2469.5,742.5 2470.4,742.6 2471.4,742.6 2472.3,742.7 2473.3,742.7 2474.2,742.8 2475.1,742.8 2476.1,742.8 2477.0,742.9 2478.0,742.9 2478.9,742.9 2479.9,743.0 2480.8,743.0 2481.8,743.0 2482.7,743.0 2483.7,743.0 2484.6,743.0 2485.6,743.1 2486.5,743.1" fill="none" stroke="#2e8b2e" stroke-width="1.6" stroke-linejoin="round" opacity=".35"/>
<polyline points="1485.0,743.1 1485.9,743.1 1486.9,743.0 1487.8,743.0 1488.8,743.0 1489.7,743.0 1490.7,743.0 1491.6,743.0 1492.6,742.9 1493.5,742.9 1494.5,742.9 1495.4,742.8 1496.4,742.8 1497.3,742.8 1498.3,742.7 1499.2,742.7 1500.1,742.6 1501.1,742.6 1502.0,742.5 1503.0,742.4 1503.9,742.4 1504.9,742.3 1505.8,742.2 1506.8,742.1 1507.7,742.1 1508.7,742.0 1509.6,741.9 1510.6,741.8 1511.5,741.7 1512.5,741.6 1513.4,741.5 1514.3,741.4 1515.3,741.3 1516.2,741.2 1517.2,741.1 1518.1,740.9 1519.1,740.8 1520.0,740.7 1521.0,740.6 1521.9,740.4 1522.9,740.3 1523.8,740.2 1524.8,740.0 1525.7,739.9 1526.7,739.7 1527.6,739.6 1528.5,739.4 1529.5,739.3 1530.4,739.1 1531.4,738.9 1532.3,738.8 1533.3,738.6 1534.2,738.4 1535.2,738.3 1536.1,738.1 1537.1,737.9 1538.0,737.7 1539.0,737.5 1539.9,737.3 1540.8,737.1 1541.8,736.9 1542.7,736.7 1543.7,736.5 1544.6,736.3 1545.6,736.1 1546.5,735.9 1547.5,735.7 1548.4,735.4 1549.4,735.2 1550.3,735.0 1551.3,734.8 1552.2,734.5 1553.2,734.3 1554.1,734.0 1555.0,733.8 1556.0,733.6 1556.9,733.3 1557.9,733.1 1558.8,732.8 1559.8,732.5 1560.7,732.3 1561.7,732.0 1562.6,731.8 1563.6,731.5 1564.5,731.2 1565.5,730.9 1566.4,730.7 1567.4,730.4 1568.3,730.1 1569.2,729.8 1570.2,729.5 1571.1,729.2 1572.1,728.9 1573.0,728.6 1574.0,728.3 1574.9,728.0 1575.9,727.7 1576.8,727.4 1577.8,727.1 1578.7,726.8 1579.7,726.5 1580.6,726.2 1581.6,725.8 1582.5,725.5 1583.4,725.2 1584.4,724.9 1585.3,724.5 1586.3,724.2 1587.2,723.8 1588.2,723.5 1589.1,723.2 1590.1,722.8 1591.0,722.5 1592.0,722.1 1592.9,721.8 1593.9,721.4 1594.8,721.1 1595.8,720.7 1596.7,720.3 1597.6,720.0 1598.6,719.6 1599.5,719.2 1600.5,718.9 1601.4,718.5 1602.4,718.1 1603.3,717.7 1604.3,717.3 1605.2,717.0 1606.2,716.6 1607.1,716.2 1608.1,715.8 1609.0,715.4 1610.0,715.0 1610.9,714.6 1611.8,714.2 1612.8,713.8 1613.7,713.4 1614.7,713.0 1615.6,712.6 1616.6,712.2 1617.5,711.7 1618.5,711.3 1619.4,710.9 1620.4,710.5 1621.3,710.1 1622.3,709.6 1623.2,709.2 1624.2,708.8 1625.1,708.3 1626.0,707.9 1627.0,707.5 1627.9,707.0 1628.9,706.6 1629.8,706.2 1630.8,705.7 1631.7,705.3 1632.7,704.8 1633.6,704.4 1634.6,703.9 1635.5,703.5 1636.5,703.0 1637.4,702.6 1638.3,702.1 1639.3,701.6 1640.2,701.2 1641.2,700.7 1642.1,700.2 1643.1,699.8 1644.0,699.3 1645.0,698.8 1645.9,698.3 1646.9,697.9 1647.8,697.4 1648.8,696.9 1649.7,696.4 1650.7,695.9 1651.6,695.5 1652.5,695.0 1653.5,694.5 1654.4,694.0 1655.4,693.5 1656.3,693.0 1657.3,692.5 1658.2,692.0 1659.2,691.5 1660.1,691.0 1661.1,690.5 1662.0,690.0 1663.0,689.5 1663.9,689.0 1664.9,688.5 1665.8,688.0 1666.7,687.5 1667.7,687.0 1668.6,686.4 1669.6,685.9 1670.5,685.4 1671.5,684.9 1672.4,684.4 1673.4,683.8 1674.3,683.3 1675.3,682.8 1676.2,682.3 1677.2,681.7 1678.1,681.2 1679.1,680.7 1680.0,680.1 1680.9,679.6 1681.9,679.1 1682.8,678.5 1683.8,678.0 1684.7,677.4 1685.7,676.9 1686.6,676.4 1687.6,675.8 1688.5,675.3 1689.5,674.7 1690.4,674.2 1691.4,673.6 1692.3,673.1 1693.3,672.5 1694.2,672.0 1695.1,671.4 1696.1,670.8 1697.0,670.3 1698.0,669.7 1698.9,669.2 1699.9,668.6 1700.8,668.0 1701.8,667.5 1702.7,666.9 1703.7,666.3 1704.6,665.8 1705.6,665.2 1706.5,664.6 1707.5,664.1 1708.4,663.5 1709.3,662.9 1710.3,662.3 1711.2,661.8 1712.2,661.2 1713.1,660.6 1714.1,660.0 1715.0,659.4 1716.0,658.9 1716.9,658.3 1717.9,657.7 1718.8,657.1 1719.8,656.5 1720.7,655.9 1721.7,655.3 1722.6,654.7 1723.5,654.2 1724.5,653.6 1725.4,653.0 1726.4,652.4 1727.3,651.8 1728.3,651.2 1729.2,650.6 1730.2,650.0 1731.1,649.4 1732.1,648.8 1733.0,648.2 1734.0,647.6 1734.9,647.0 1735.8,646.4 1736.8,645.8 1737.7,645.2 1738.7,644.5 1739.6,643.9 1740.6,643.3 1741.5,642.7 1742.5,642.1 1743.4,641.5 1744.4,640.9 1745.3,640.3 1746.3,639.6 1747.2,639.0 1748.2,638.4 1749.1,637.8 1750.0,637.2 1751.0,636.6 1751.9,635.9 1752.9,635.3 1753.8,634.7 1754.8,634.1 1755.7,633.4 1756.7,632.8 1757.6,632.2 1758.6,631.6 1759.5,630.9 1760.5,630.3 1761.4,629.7 1762.4,629.0 1763.3,628.4 1764.2,627.8 1765.2,627.1 1766.1,626.5 1767.1,625.9 1768.0,625.2 1769.0,624.6 1769.9,624.0 1770.9,623.3 1771.8,622.7 1772.8,622.0 1773.7,621.4 1774.7,620.8 1775.6,620.1 1776.6,619.5 1777.5,618.8 1778.4,618.2 1779.4,617.5 1780.3,616.9 1781.3,616.3 1782.2,615.6 1783.2,615.0 1784.1,614.3 1785.1,613.7 1786.0,613.0 1787.0,612.4 1787.9,611.7 1788.9,611.1 1789.8,610.4 1790.8,609.7 1791.7,609.1 1792.6,608.4 1793.6,607.8 1794.5,607.1 1795.5,606.5 1796.4,605.8 1797.4,605.1 1798.3,604.5 1799.3,603.8 1800.2,603.2 1801.2,602.5 1802.1,601.8 1803.1,601.2 1804.0,600.5 1805.0,599.9 1805.9,599.2 1806.8,598.5 1807.8,597.9 1808.7,597.2 1809.7,596.5 1810.6,595.9 1811.6,595.2 1812.5,594.5 1813.5,593.9 1814.4,593.2 1815.4,592.5 1816.3,591.8 1817.3,591.2 1818.2,590.5 1819.1,589.8 1820.1,589.2 1821.0,588.5 1822.0,587.8 1822.9,587.1 1823.9,586.5 1824.8,585.8 1825.8,585.1 1826.7,584.4 1827.7,583.7 1828.6,583.1 1829.6,582.4 1830.5,581.7 1831.5,581.0 1832.4,580.3 1833.3,579.7 1834.3,579.0 1835.2,578.3 1836.2,577.6 1837.1,576.9 1838.1,576.3 1839.0,575.6 1840.0,574.9 1840.9,574.2 1841.9,573.5 1842.8,572.8 1843.8,572.1 1844.7,571.4 1845.7,570.8 1846.6,570.1 1847.5,569.4 1848.5,568.7 1849.4,568.0 1850.4,567.3 1851.3,566.6 1852.3,565.9 1853.2,565.2 1854.2,564.5 1855.1,563.9 1856.1,563.2 1857.0,562.5 1858.0,561.8 1858.9,561.1 1859.9,560.4 1860.8,559.7 1861.7,559.0 1862.7,558.3 1863.6,557.6 1864.6,559.8 1865.5,562.8 1866.5,565.8 1867.4,568.9 1868.4,571.9 1869.3,575.0 1870.3,578.0 1871.2,581.1 1872.2,584.1 1873.1,587.1 1874.1,590.2 1875.0,593.2 1875.9,596.2 1876.9,599.3 1877.8,602.3 1878.8,605.4 1879.7,608.4 1880.7,611.4 1881.6,614.5 1882.6,617.5 1883.5,620.5 1884.5,623.6 1885.4,626.6 1886.4,629.6 1887.3,632.7 1888.3,635.7 1889.2,638.7 1890.1,641.7 1891.1,644.8 1892.0,647.8 1893.0,650.8 1893.9,653.8 1894.9,656.9 1895.8,659.9 1896.8,662.9 1897.7,665.9 1898.7,668.9 1899.6,671.9 1900.6,675.0 1901.5,678.0 1902.5,681.0 1903.4,684.0 1904.3,687.0 1905.3,690.0 1906.2,693.0 1907.2,696.0 1908.1,699.0 1909.1,702.0 1910.0,705.0 1911.0,708.0 1911.9,711.0 1912.9,714.0 1913.8,717.0 1914.8,720.0 1915.7,723.0 1916.6,725.9 1917.6,728.9 1918.5,731.9 1919.5,734.9 1920.4,737.8 1921.4,740.8 1922.3,743.8 1923.3,746.7 1924.2,749.7 1925.2,752.6 1926.1,755.6 1927.1,758.5 1928.0,761.5 1929.0,764.4 1929.9,767.3 1930.8,770.3 1931.8,773.2 1932.7,776.1 1933.7,779.0 1934.6,781.9 1935.6,784.8 1936.5,787.7 1937.5,790.6 1938.4,793.4 1939.4,796.3 1940.3,799.2 1941.3,802.0 1942.2,804.8 1943.2,807.7 1944.1,810.5 1945.0,813.3 1946.0,816.0 1946.9,818.8 1947.9,821.6 1948.8,824.3 1949.8,827.0 1950.7,829.7 1951.7,832.4 1952.6,835.0 1953.6,837.6 1954.5,840.2 1955.5,842.8 1956.4,845.3 1957.4,847.8 1958.3,850.3 1959.2,852.7 1960.2,855.0 1961.1,857.3 1962.1,859.6 1963.0,861.8 1964.0,863.9 1964.9,865.9 1965.9,867.9 1966.8,869.7 1967.8,871.5 1968.7,872.5 1969.7,873.4 1970.6,874.3 1971.6,875.1 1972.5,875.9 1973.4,876.7 1974.4,877.4 1975.3,878.0 1976.3,878.6 1977.2,879.2 1978.2,879.7 1979.1,880.1 1980.1,880.5 1981.0,880.8 1982.0,881.1 1982.9,881.3 1983.9,881.5 1984.8,881.6 1985.8,881.6 1986.7,881.6 1987.6,881.5 1988.6,881.3 1989.5,881.1 1990.5,880.8 1991.4,880.5 1992.4,880.1 1993.3,879.7 1994.3,879.2 1995.2,878.6 1996.2,878.0 1997.1,877.4 1998.1,876.7 1999.0,875.9 2000.0,875.1 2000.9,874.3 2001.8,873.4 2002.8,872.5 2003.7,871.5 2004.7,869.7 2005.6,867.9 2006.6,865.9 2007.5,863.9 2008.5,861.8 2009.4,859.6 2010.4,857.3 2011.3,855.0 2012.3,852.7 2013.2,850.3 2014.1,847.8 2015.1,845.3 2016.0,842.8 2017.0,840.2 2017.9,837.6 2018.9,835.0 2019.8,832.4 2020.8,829.7 2021.7,827.0 2022.7,824.3 2023.6,821.6 2024.6,818.8 2025.5,816.0 2026.5,813.3 2027.4,810.5 2028.3,807.7 2029.3,804.8 2030.2,802.0 2031.2,799.2 2032.1,796.3 2033.1,793.4 2034.0,790.6 2035.0,787.7 2035.9,784.8 2036.9,781.9 2037.8,779.0 2038.8,776.1 2039.7,773.2 2040.7,770.3 2041.6,767.3 2042.5,764.4 2043.5,761.5 2044.4,758.5 2045.4,755.6 2046.3,752.6 2047.3,749.7 2048.2,746.7 2049.2,743.8 2050.1,740.8 2051.1,737.8 2052.0,734.9 2053.0,731.9 2053.9,728.9 2054.9,725.9 2055.8,723.0 2056.7,720.0 2057.7,717.0 2058.6,714.0 2059.6,711.0 2060.5,708.0 2061.5,705.0 2062.4,702.0 2063.4,699.0 2064.3,696.0 2065.3,693.0 2066.2,690.0 2067.2,687.0 2068.1,684.0 2069.1,681.0 2070.0,678.0 2070.9,675.0 2071.9,671.9 2072.8,668.9 2073.8,665.9 2074.7,662.9 2075.7,659.9 2076.6,656.9 2077.6,653.8 2078.5,650.8 2079.5,647.8 2080.4,644.8 2081.4,641.7 2082.3,638.7 2083.3,635.7 2084.2,632.7 2085.1,629.6 2086.1,626.6 2087.0,623.6 2088.0,620.5 2088.9,617.5 2089.9,614.5 2090.8,611.4 2091.8,608.4 2092.7,605.4 2093.7,602.3 2094.6,599.3 2095.6,596.2 2096.5,593.2 2097.5,590.2 2098.4,587.1 2099.3,584.1 2100.3,581.1 2101.2,578.0 2102.2,575.0 2103.1,571.9 2104.1,568.9 2105.0,565.8 2106.0,562.8 2106.9,559.8 2107.9,556.7 2108.8,558.3 2109.8,559.0 2110.7,559.7 2111.6,560.4 2112.6,561.1 2113.5,561.8 2114.5,562.5 2115.4,563.2 2116.4,563.9 2117.3,564.5 2118.3,565.2 2119.2,565.9 2120.2,566.6 2121.1,567.3 2122.1,568.0 2123.0,568.7 2124.0,569.4 2124.9,570.1 2125.8,570.8 2126.8,571.4 2127.7,572.1 2128.7,572.8 2129.6,573.5 2130.6,574.2 2131.5,574.9 2132.5,575.6 2133.4,576.3 2134.4,576.9 2135.3,577.6 2136.3,578.3 2137.2,579.0 2138.2,579.7 2139.1,580.3 2140.0,581.0 2141.0,581.7 2141.9,582.4 2142.9,583.1 2143.8,583.7 2144.8,584.4 2145.7,585.1 2146.7,585.8 2147.6,586.5 2148.6,587.1 2149.5,587.8 2150.5,588.5 2151.4,589.2 2152.4,589.8 2153.3,590.5 2154.2,591.2 2155.2,591.8 2156.1,592.5 2157.1,593.2 2158.0,593.9 2159.0,594.5 2159.9,595.2 2160.9,595.9 2161.8,596.5 2162.8,597.2 2163.7,597.9 2164.7,598.5 2165.6,599.2 2166.6,599.9 2167.5,600.5 2168.4,601.2 2169.4,601.8 2170.3,602.5 2171.3,603.2 2172.2,603.8 2173.2,604.5 2174.1,605.1 2175.1,605.8 2176.0,606.5 2177.0,607.1 2177.9,607.8 2178.9,608.4 2179.8,609.1 2180.8,609.7 2181.7,610.4 2182.6,611.1 2183.6,611.7 2184.5,612.4 2185.5,613.0 2186.4,613.7 2187.4,614.3 2188.3,615.0 2189.3,615.6 2190.2,616.3 2191.2,616.9 2192.1,617.5 2193.1,618.2 2194.0,618.8 2194.9,619.5 2195.9,620.1 2196.8,620.8 2197.8,621.4 2198.7,622.0 2199.7,622.7 2200.6,623.3 2201.6,624.0 2202.5,624.6 2203.5,625.2 2204.4,625.9 2205.4,626.5 2206.3,627.1 2207.3,627.8 2208.2,628.4 2209.1,629.0 2210.1,629.7 2211.0,630.3 2212.0,630.9 2212.9,631.6 2213.9,632.2 2214.8,632.8 2215.8,633.4 2216.7,634.1 2217.7,634.7 2218.6,635.3 2219.6,635.9 2220.5,636.6 2221.5,637.2 2222.4,637.8 2223.3,638.4 2224.3,639.0 2225.2,639.6 2226.2,640.3 2227.1,640.9 2228.1,641.5 2229.0,642.1 2230.0,642.7 2230.9,643.3 2231.9,643.9 2232.8,644.5 2233.8,645.2 2234.7,645.8 2235.7,646.4 2236.6,647.0 2237.5,647.6 2238.5,648.2 2239.4,648.8 2240.4,649.4 2241.3,650.0 2242.3,650.6 2243.2,651.2 2244.2,651.8 2245.1,652.4 2246.1,653.0 2247.0,653.6 2248.0,654.2 2248.9,654.7 2249.9,655.3 2250.8,655.9 2251.7,656.5 2252.7,657.1 2253.6,657.7 2254.6,658.3 2255.5,658.9 2256.5,659.4 2257.4,660.0 2258.4,660.6 2259.3,661.2 2260.3,661.8 2261.2,662.3 2262.2,662.9 2263.1,663.5 2264.1,664.1 2265.0,664.6 2265.9,665.2 2266.9,665.8 2267.8,666.3 2268.8,666.9 2269.7,667.5 2270.7,668.0 2271.6,668.6 2272.6,669.2 2273.5,669.7 2274.5,670.3 2275.4,670.8 2276.4,671.4 2277.3,672.0 2278.3,672.5 2279.2,673.1 2280.1,673.6 2281.1,674.2 2282.0,674.7 2283.0,675.3 2283.9,675.8 2284.9,676.4 2285.8,676.9 2286.8,677.4 2287.7,678.0 2288.7,678.5 2289.6,679.1 2290.6,679.6 2291.5,680.1 2292.4,680.7 2293.4,681.2 2294.3,681.7 2295.3,682.3 2296.2,682.8 2297.2,683.3 2298.1,683.8 2299.1,684.4 2300.0,684.9 2301.0,685.4 2301.9,685.9 2302.9,686.4 2303.8,687.0 2304.8,687.5 2305.7,688.0 2306.6,688.5 2307.6,689.0 2308.5,689.5 2309.5,690.0 2310.4,690.5 2311.4,691.0 2312.3,691.5 2313.3,692.0 2314.2,692.5 2315.2,693.0 2316.1,693.5 2317.1,694.0 2318.0,694.5 2319.0,695.0 2319.9,695.5 2320.8,695.9 2321.8,696.4 2322.7,696.9 2323.7,697.4 2324.6,697.9 2325.6,698.3 2326.5,698.8 2327.5,699.3 2328.4,699.8 2329.4,700.2 2330.3,700.7 2331.3,701.2 2332.2,701.6 2333.2,702.1 2334.1,702.6 2335.0,703.0 2336.0,703.5 2336.9,703.9 2337.9,704.4 2338.8,704.8 2339.8,705.3 2340.7,705.7 2341.7,706.2 2342.6,706.6 2343.6,707.0 2344.5,707.5 2345.5,707.9 2346.4,708.3 2347.4,708.8 2348.3,709.2 2349.2,709.6 2350.2,710.1 2351.1,710.5 2352.1,710.9 2353.0,711.3 2354.0,711.7 2354.9,712.2 2355.9,712.6 2356.8,713.0 2357.8,713.4 2358.7,713.8 2359.7,714.2 2360.6,714.6 2361.6,715.0 2362.5,715.4 2363.4,715.8 2364.4,716.2 2365.3,716.6 2366.3,717.0 2367.2,717.3 2368.2,717.7 2369.1,718.1 2370.1,718.5 2371.0,718.9 2372.0,719.2 2372.9,719.6 2373.9,720.0 2374.8,720.3 2375.8,720.7 2376.7,721.1 2377.6,721.4 2378.6,721.8 2379.5,722.1 2380.5,722.5 2381.4,722.8 2382.4,723.2 2383.3,723.5 2384.3,723.8 2385.2,724.2 2386.2,724.5 2387.1,724.9 2388.1,725.2 2389.0,725.5 2389.9,725.8 2390.9,726.2 2391.8,726.5 2392.8,726.8 2393.7,727.1 2394.7,727.4 2395.6,727.7 2396.6,728.0 2397.5,728.3 2398.5,728.6 2399.4,728.9 2400.4,729.2 2401.3,729.5 2402.3,729.8 2403.2,730.1 2404.1,730.4 2405.1,730.7 2406.0,730.9 2407.0,731.2 2407.9,731.5 2408.9,731.8 2409.8,732.0 2410.8,732.3 2411.7,732.5 2412.7,732.8 2413.6,733.1 2414.6,733.3 2415.5,733.6 2416.5,733.8 2417.4,734.0 2418.3,734.3 2419.3,734.5 2420.2,734.8 2421.2,735.0 2422.1,735.2 2423.1,735.4 2424.0,735.7 2425.0,735.9 2425.9,736.1 2426.9,736.3 2427.8,736.5 2428.8,736.7 2429.7,736.9 2430.7,737.1 2431.6,737.3 2432.5,737.5 2433.5,737.7 2434.4,737.9 2435.4,738.1 2436.3,738.3 2437.3,738.4 2438.2,738.6 2439.2,738.8 2440.1,738.9 2441.1,739.1 2442.0,739.3 2443.0,739.4 2443.9,739.6 2444.9,739.7 2445.8,739.9 2446.7,740.0 2447.7,740.2 2448.6,740.3 2449.6,740.4 2450.5,740.6 2451.5,740.7 2452.4,740.8 2453.4,740.9 2454.3,741.1 2455.3,741.2 2456.2,741.3 2457.2,741.4 2458.1,741.5 2459.1,741.6 2460.0,741.7 2460.9,741.8 2461.9,741.9 2462.8,742.0 2463.8,742.1 2464.7,742.1 2465.7,742.2 2466.6,742.3 2467.6,742.4 2468.5,742.4 2469.5,742.5 2470.4,742.6 2471.4,742.6 2472.3,742.7 2473.3,742.7 2474.2,742.8 2475.1,742.8 2476.1,742.8 2477.0,742.9 2478.0,742.9 2478.9,742.9 2479.9,743.0 2480.8,743.0 2481.8,743.0 2482.7,743.0 2483.7,743.0 2484.6,743.0 2485.6,743.1 2486.5,743.1" fill="none" stroke="#d61f08" stroke-width="1.9" stroke-linejoin="round"/>
<g stroke="#3c3cf0" stroke-width="1.8"><path d="M1985.3 456V1058"/><path d="M1455 881.2H2564"/></g>
<g stroke="#000" stroke-width="2.6" fill="none"><path d="M1455.5 453V1060"/><path d="M1454 1058.8H2567"/></g>
<g stroke="#000" stroke-width="2" fill="none">
<path d="M1455 1049.1h5"/>
<path d="M1455 1029.4h11"/>
<path d="M1455 1009.7h5"/>
<path d="M1455 990.0h5"/>
<path d="M1455 970.4h5"/>
<path d="M1455 950.7h5"/>
<path d="M1455 931.0h11"/>
<path d="M1455 911.3h5"/>
<path d="M1455 891.6h5"/>
<path d="M1455 872.0h5"/>
<path d="M1455 852.3h5"/>
<path d="M1455 832.6h11"/>
<path d="M1455 812.9h5"/>
<path d="M1455 793.2h5"/>
<path d="M1455 773.6h5"/>
<path d="M1455 753.9h5"/>
<path d="M1455 734.2h11"/>
<path d="M1455 714.5h5"/>
<path d="M1455 694.8h5"/>
<path d="M1455 675.2h5"/>
<path d="M1455 655.5h5"/>
<path d="M1455 635.8h11"/>
<path d="M1455 616.1h5"/>
<path d="M1455 596.4h5"/>
<path d="M1455 576.8h5"/>
<path d="M1455 557.1h5"/>
<path d="M1455 537.4h11"/>
<path d="M1455 517.7h5"/>
<path d="M1455 498.0h5"/>
<path d="M1455 478.4h5"/>
<path d="M1455 458.7h5"/>
<path d="M1485.0 1058v-11"/>
<path d="M1522.9 1058v-5"/>
<path d="M1560.7 1058v-5"/>
<path d="M1598.6 1058v-5"/>
<path d="M1636.5 1058v-5"/>
<path d="M1674.3 1058v-11"/>
<path d="M1712.2 1058v-5"/>
<path d="M1750.0 1058v-5"/>
<path d="M1787.9 1058v-5"/>
<path d="M1825.8 1058v-5"/>
<path d="M1863.6 1058v-11"/>
<path d="M1901.5 1058v-5"/>
<path d="M1939.4 1058v-5"/>
<path d="M1977.2 1058v-5"/>
<path d="M2015.1 1058v-5"/>
<path d="M2053.0 1058v-11"/>
<path d="M2090.8 1058v-5"/>
<path d="M2128.7 1058v-5"/>
<path d="M2166.6 1058v-5"/>
<path d="M2204.4 1058v-5"/>
<path d="M2242.3 1058v-11"/>
<path d="M2280.1 1058v-5"/>
<path d="M2318.0 1058v-5"/>
<path d="M2355.9 1058v-5"/>
<path d="M2393.7 1058v-5"/>
<path d="M2431.6 1058v-11"/>
<path d="M2469.5 1058v-5"/>
<path d="M2507.3 1058v-5"/>
<path d="M2545.2 1058v-5"/>
</g></svg>
<span class="t" style="left:1402.23px;top:1018.82px;font-size:21px;line-height:21px;color:#1a1a1a;transform:scaleX(0.9700);">-100</span>
<span class="t" style="left:1431.67px;top:920.42px;font-size:21px;line-height:21px;color:#1a1a1a;transform:scaleX(0.9700);">0</span>
<span class="t" style="left:1409.01px;top:822.02px;font-size:21px;line-height:21px;color:#1a1a1a;transform:scaleX(0.9700);">100</span>
<span class="t" style="left:1409.01px;top:723.62px;font-size:21px;line-height:21px;color:#1a1a1a;transform:scaleX(0.9700);">200</span>
<span class="t" style="left:1409.01px;top:625.22px;font-size:21px;line-height:21px;color:#1a1a1a;transform:scaleX(0.9700);">300</span>
<span class="t" style="left:1409.01px;top:526.82px;font-size:21px;line-height:21px;color:#1a1a1a;transform:scaleX(0.9700);">400</span>
<span class="t" style="left:1477.84px;top:1067.92px;font-size:21px;line-height:21px;color:#1a1a1a;transform:scaleX(0.9700);">0</span>
<span class="t" style="left:1655.83px;top:1067.92px;font-size:21px;line-height:21px;color:#1a1a1a;transform:scaleX(0.9700);">100</span>
<span class="t" style="left:1845.15px;top:1067.92px;font-size:21px;line-height:21px;color:#1a1a1a;transform:scaleX(0.9700);">200</span>
<span class="t" style="left:2034.47px;top:1067.92px;font-size:21px;line-height:21px;color:#1a1a1a;transform:scaleX(0.9700);">300</span>
<span class="t" style="left:2223.79px;top:1067.92px;font-size:21px;line-height:21px;color:#1a1a1a;transform:scaleX(0.9700);">400</span>
<span class="t" style="left:2413.11px;top:1067.92px;font-size:21px;line-height:21px;color:#1a1a1a;transform:scaleX(0.9700);">500</span>
<span class="t" style="left:1872.25px;top:1100.88px;font-size:24px;line-height:24px;color:#111;transform:scaleX(1.0735);">L1, d1, G1, d2, L2 (mm)</span>
<span class="t" style="left:1374px;top:758px;font-size:24px;line-height:24px;transform-origin:0 0;transform:rotate(-90deg) translate(-102.5px,-20.3px) scaleX(1.0721);color:#111">Beam radius (µm)</span>
<span class="t" style="left:1345.50px;top:1152.81px;font-size:23.5px;line-height:23.5px;transform:scaleX(1.0164);">X: mm</span>
<span class="t" style="left:1451.50px;top:1152.81px;font-size:23.5px;line-height:23.5px;transform:scaleX(1.0239);">Y: µm</span>
<svg style="left:0;top:0" width="2736" height="1200"><rect x="2588" y="1160" width="2" height="2" fill="#bdbdbd"/><rect x="2582" y="1166" width="2" height="2" fill="#bdbdbd"/><rect x="2588" y="1166" width="2" height="2" fill="#bdbdbd"/><rect x="2576" y="1172" width="2" height="2" fill="#bdbdbd"/><rect x="2582" y="1172" width="2" height="2" fill="#bdbdbd"/><rect x="2588" y="1172" width="2" height="2" fill="#bdbdbd"/><rect x="2570" y="1178" width="2" height="2" fill="#bdbdbd"/><rect x="2576" y="1178" width="2" height="2" fill="#bdbdbd"/><rect x="2582" y="1178" width="2" height="2" fill="#bdbdbd"/><rect x="2588" y="1178" width="2" height="2" fill="#bdbdbd"/></svg>
<div style="position:absolute;left:0px;top:1574px;width:391px;height:48px;background:linear-gradient(#fff 0,#f6f6f6 48%,#e9e9e9 52%,#ececec 100%);border:2px solid #8a8a8a;border-bottom:2px solid #9a9a9a;border-radius:10px 10px 0 0"></div>
<span class="t" style="left:79.50px;top:1591.21px;font-size:23.5px;line-height:23.5px;transform:scaleX(1.0038);">2D-Stability (1)</span>
<div class="wb" style="left:264px;top:1580px;width:35px;height:35px"></div>
<div class="wb" style="left:304.5px;top:1580px;width:35px;height:35px"></div>
<div class="wb" style="left:344px;top:1580px;width:35px;height:35px"></div>
<svg style="left:0;top:1574px" width="400" height="48" viewBox="0 1574 400 48"><g fill="none" stroke="#000"><rect x="274" y="1597" width="9" height="8" stroke-width="2.4"/><path d="M273 1597h11" stroke-width="3"/><rect x="280" y="1591" width="9" height="8" stroke-width="2.4" fill="#f4f4f4"/><path d="M279 1591h11" stroke-width="3"/><rect x="315" y="1592" width="14" height="12.5" stroke-width="2.6"/><path d="M313.7 1592.5h16.6" stroke-width="4.6"/><path d="M354.5 1590.5l14 14M368.5 1590.5l-14 14" stroke-width="4.6"/></g></svg>
<svg style="left:8px;top:1582px" width="38" height="36" viewBox="0 0 48 48" preserveAspectRatio="none"><path d="M18.8 0H28.6C30 10 36 17.5 47.7 18.9V29H18.8Z" fill="#c8d4f4"/><path d="M18.8 29V47.7H15C13 40 8 34.5 0 32.6V29Z" fill="#c8d4f4"/><path d="M28.6 0C30 10 36 17.5 47.7 18.9" fill="none" stroke="#7a2222" stroke-width="2.4"/><path d="M0 32.6C8 34.5 13 40 15 47.7" fill="none" stroke="#7a2222" stroke-width="2.4"/><path d="M18.8 3V47.7M0 29H46" stroke="#10287c" stroke-width="2.4"/><path d="M13 8.5L18.8 2.5L24.6 8.5M40.6 23.2L46.4 29L40.6 34.8" fill="none" stroke="#10287c" stroke-width="2"/></svg>
<div style="position:absolute;left:0px;top:1622px;width:2736px;height:75px;background:linear-gradient(#fdfdfd,#efefef)"></div>
<div style="position:absolute;left:0px;top:1696px;width:2736px;height:2px;background:#b9b9b9"></div>
<div style="position:absolute;left:8.5px;top:1631px;width:157px;height:60px;background:#e0e0e0;border:1.5px solid #b4b4b4;border-radius:6px"></div>
<span class="t" style="left:72.90px;top:1650.51px;font-size:23.5px;line-height:23.5px;transform:scaleX(0.8549);">Schema</span>
<span class="t" style="left:234.60px;top:1650.51px;font-size:23.5px;line-height:23.5px;transform:scaleX(0.9039);">2D-Stability</span>
<span class="t" style="left:430.40px;top:1650.51px;font-size:23.5px;line-height:23.5px;transform:scaleX(0.9157);">2D-Stability (1)</span>
<span class="t" style="left:659.20px;top:1650.51px;font-size:23.5px;line-height:23.5px;transform:scaleX(0.8840);">MR-Caustic</span>
<svg style="left:18px;top:1636px" width="48" height="48" viewBox="0 0 48 48"><rect x="1" y="1" width="46" height="46" rx="3" fill="url(#gtitle)" stroke="#d0d0f4" stroke-width="1.6"/><path d="M8 11H40L9 38H41" fill="none" stroke="#555" stroke-width="2.4"/><path d="M15 17H27L35 32H23Z" fill="#48b0f4"/><rect x="7" y="6.5" width="2.4" height="9" fill="#555"/><rect x="39.6" y="33.5" width="2.4" height="9" fill="#555"/></svg>
<svg style="left:178px;top:1636px" width="48" height="48" viewBox="0 0 48 48"><path d="M18.8 0H28.6C30 10 36 17.5 47.7 18.9V29H18.8Z" fill="#c8d4f4"/><path d="M18.8 29V47.7H15C13 40 8 34.5 0 32.6V29Z" fill="#c8d4f4"/><path d="M28.6 0C30 10 36 17.5 47.7 18.9" fill="none" stroke="#7a2222" stroke-width="2.4"/><path d="M0 32.6C8 34.5 13 40 15 47.7" fill="none" stroke="#7a2222" stroke-width="2.4"/><path d="M18.8 3V47.7M0 29H46" stroke="#10287c" stroke-width="2.4"/><path d="M13 8.5L18.8 2.5L24.6 8.5M40.6 23.2L46.4 29L40.6 34.8" fill="none" stroke="#10287c" stroke-width="2"/></svg>
<svg style="left:374px;top:1636px" width="48" height="48" viewBox="0 0 48 48"><path d="M18.8 0H28.6C30 10 36 17.5 47.7 18.9V29H18.8Z" fill="#c8d4f4"/><path d="M18.8 29V47.7H15C13 40 8 34.5 0 32.6V29Z" fill="#c8d4f4"/><path d="M28.6 0C30 10 36 17.5 47.7 18.9" fill="none" stroke="#7a2222" stroke-width="2.4"/><path d="M0 32.6C8 34.5 13 40 15 47.7" fill="none" stroke="#7a2222" stroke-width="2.4"/><path d="M18.8 3V47.7M0 29H46" stroke="#10287c" stroke-width="2.4"/><path d="M13 8.5L18.8 2.5L24.6 8.5M40.6 23.2L46.4 29L40.6 34.8" fill="none" stroke="#10287c" stroke-width="2"/></svg>
<svg style="left:604px;top:1636px" width="48" height="48" viewBox="0 0 48 48"><path d="M4 18C10 21 14 26 24 26C34 26 38 21 44 18Q46.5 31 44 45C38 42 34 38 24 38C14 38 10 42 4 45Q1.5 31 4 18Z" fill="url(#gbeam)"/><path d="M4.6 14.6Q0.10000000000000009 31.150000000000002 4.6 47.7" fill="none" stroke="#5a4c38" stroke-width="2.8"/><path d="M43.4 14.6Q47.9 31.150000000000002 43.4 47.7" fill="none" stroke="#5a4c38" stroke-width="2.8"/><rect x="19.2" y="17" width="9.8" height="28" fill="url(#gcry2)" fill-opacity=".78" stroke="#22b8fa" stroke-width="2"/><text x="11.2" y="11.6" font-family="Liberation Serif" font-weight="700" font-size="24" text-anchor="middle" fill="#00406e">ω</text><text x="37" y="11.6" font-family="Liberation Serif" font-weight="700" font-size="24" text-anchor="middle" fill="#00406e">ω</text></svg>
<div style="position:absolute;left:0px;top:1698px;width:2736px;height:46px;background:#f0f0f0"></div>
<span class="t" style="left:16.30px;top:1711.41px;font-size:23.5px;line-height:23.5px;transform:scaleX(0.9687);">Elements: 9</span>
<span class="t" style="left:173.30px;top:1711.41px;font-size:23.5px;line-height:23.5px;transform:scaleX(1.0605);">Modified</span>
<span class="t" style="left:303.60px;top:1711.41px;font-size:23.5px;line-height:23.5px;transform:scaleX(1.0093);">λ = 800 nm</span>
<span class="t" style="left:594.40px;top:1711.41px;font-size:23.5px;line-height:23.5px;transform:scaleX(0.9816);">C:/Rezonator-2.0.6/examples/TiSa Laser.rez</span>
<span class="t" style="left:2612.70px;top:1711.81px;font-size:23.5px;line-height:23.5px;color:#a0a0a0;transform:scaleX(0.9672);">2.0.6-beta2</span>
<svg style="left:456px;top:1706px" width="36" height="32" viewBox="456 1706 36 32"><path d="M460 1728C460 1716 464 1711 468 1711.5C472 1712 478 1732 482 1733C485.5 1733.5 488 1728 488 1720" fill="none" stroke="#0a1a5c" stroke-width="5.4" stroke-linejoin="round"/><path d="M460 1728C460 1716 464 1711 468 1711.5C472 1712 478 1732 482 1733C485.5 1733.5 488 1728 488 1720" fill="none" stroke="#8c9cc8" stroke-width="1.6" stroke-dasharray="2 2"/></svg><svg style="left:526px;top:1706px" width="32" height="32" viewBox="526 1706 32 32"><circle cx="541.8" cy="1722" r="14.2" fill="#8cc888" opacity=".45"/><circle cx="541.8" cy="1722" r="12.6" fill="url(#ggrn)" stroke="#4a9c40" stroke-width="1.6"/><ellipse cx="541.8" cy="1716.5" rx="8" ry="4.6" fill="#d0f0c8" opacity=".55"/></svg>
<div style="position:absolute;left:0px;top:1744px;width:2736px;height:80px;background:linear-gradient(90deg,#2b291f 0,#2b291f 3.5%,#262b1d 28.6%,#282a1d 34%,#2d291f 38%,#31291f 44%,#2e271d 53%,#262b1c 57.4%,#22271a 73%,#1c211a 84%,#1b201a 100%)"></div>
<div style="position:absolute;left:96px;top:1744px;width:688px;height:80px;background:#f3f3f3;border:2px solid #c6c6c6;border-top-color:#d4d4d4"></div>
<span class="t" style="left:176.40px;top:1772.23px;font-size:29.5px;line-height:29.5px;color:#2a2a2a;transform:scaleX(0.9926);">Zur Suche Text hier eingeben</span>
<div style="position:absolute;left:1474px;top:1744px;width:96px;height:80px;background:#50564a"></div>
<div style="position:absolute;left:992.5px;top:1820px;width:79.0px;height:4px;background:#7fc0ee"></div>
<div style="position:absolute;left:1090px;top:1820px;width:79.5px;height:4px;background:#7fc0ee"></div>
<div style="position:absolute;left:1188px;top:1820px;width:63px;height:4px;background:#7fc0ee"></div>
<div style="position:absolute;left:1384px;top:1820px;width:63px;height:4px;background:#7fc0ee"></div>
<div style="position:absolute;left:1474px;top:1820px;width:96px;height:4px;background:#7fc0ee"></div>
<div style="position:absolute;left:1251px;top:1820px;width:16.5px;height:4px;background:#5a8cb4"></div>
<div style="position:absolute;left:1447px;top:1820px;width:16px;height:4px;background:#5a8cb4"></div>
<span class="t" style="left:2432.00px;top:1775.05px;font-size:22.5px;line-height:22.5px;color:#fff;transform:scaleX(0.9262);">DEU</span>
<span class="t" style="left:2531.80px;top:1756.35px;font-size:22.5px;line-height:22.5px;color:#fff;transform:scaleX(0.9857);">22:55</span>
<span class="t" style="left:2503.60px;top:1793.65px;font-size:22.5px;line-height:22.5px;color:#fff;">21.10.2022</span>
<div style="position:absolute;left:2729px;top:1745px;width:1.5px;height:79px;background:#7a8078"></div>
<svg style="left:0;top:1745px" width="2736" height="79" viewBox="0 1745 2736 79">
<defs>
<linearGradient id="tbmail" x1="0" y1="0" x2="1" y2="1"><stop offset="0" stop-color="#46c8f8"/><stop offset="1" stop-color="#1e98e4"/></linearGradient>
<radialGradient id="tbff" cx=".5" cy=".45" r=".6"><stop offset="0" stop-color="#ffe04a"/><stop offset=".55" stop-color="#ff9a1e"/><stop offset="1" stop-color="#ff3a66"/></radialGradient>
<radialGradient id="tbffg" cx=".4" cy=".4" r=".7"><stop offset="0" stop-color="#9a58f0"/><stop offset="1" stop-color="#5a28c0"/></radialGradient>
<linearGradient id="tbard" x1="0" y1="0" x2="0" y2="1"><stop offset="0" stop-color="#22a4ac"/><stop offset="1" stop-color="#0e8088"/></linearGradient>
<linearGradient id="tbjk" x1="0" y1="0" x2="0" y2="1"><stop offset="0" stop-color="#f04010"/><stop offset="1" stop-color="#c82c10"/></linearGradient>
<linearGradient id="tbhb" x1="0" y1="0" x2="1" y2="1"><stop offset="0" stop-color="#ff90d0"/><stop offset="1" stop-color="#f050a8"/></linearGradient>
</defs>
<path d="M31.6 1772.6L45.2 1770.6V1783.2H31.6ZM46.8 1770.4L64.4 1767.8V1783.2H46.8ZM31.6 1784.8H45.2V1797.4L31.6 1795.4ZM46.8 1784.8H64.4V1800.2L46.8 1797.6Z" fill="#fff"/>
<circle cx="140.8" cy="1778.9" r="10.6" fill="none" stroke="#111" stroke-width="2.4"/><path d="M133.2 1786.6L120.4 1799.4" stroke="#111" stroke-width="2.6" stroke-linecap="round"/>
<path d="M676 1764L660 1770L654 1781L648 1794L640 1808L646 1814L654 1803L664 1794L672 1784L680 1778Z" fill="#6c6880"/><path d="M638 1807L646 1815L643 1817L636 1811Z" fill="#222"/>
<path d="M660 1771L666 1780M653 1783L661 1791M647 1795L656 1801" stroke="#504c64" stroke-width="2"/>
<path d="M706 1760L716 1766L722 1797L716 1801L708 1790Z" fill="#8884a0"/><rect x="714" y="1796" width="8" height="5" rx="2" fill="#222" transform="rotate(12 718 1798)"/>
<path d="M673 1756L684 1750H698L710 1756L711 1796H672Z" fill="url(#tbjk)"/><path d="M684 1749Q691 1745 698 1749L696 1754H686Z" fill="#504868"/><path d="M686 1754H696L694 1796H688Z" fill="#5c5878"/>
<rect x="675" y="1764" width="8" height="11" rx="2" fill="#b8381c"/><rect x="699" y="1764" width="8" height="11" rx="2" fill="#b8381c"/><rect x="675" y="1763" width="8" height="4" rx="1.5" fill="#6c6478"/><rect x="699" y="1763" width="8" height="4" rx="1.5" fill="#6c6478"/>
<rect x="677" y="1795" width="11" height="5" rx="2" fill="#222"/><rect x="693" y="1795" width="11" height="5" rx="2" fill="#222"/>
<path d="M643 1755Q644.5 1761 651 1762.5Q644.5 1764.5 643 1771Q641 1764.5 635.5 1763Q641.5 1761.5 643 1755Z" fill="#e080f8"/><circle cx="733" cy="1769" r="4.2" fill="#70d8e8"/><circle cx="671.6" cy="1812.8" r="4" fill="#f8a810"/>
<g transform="rotate(-38.5 750 1786)"><rect x="714" y="1778" width="72" height="17" rx="8.5" fill="url(#tbhb)"/><rect x="717" y="1792.6" width="66" height="4" rx="2" fill="#e03c98"/><circle cx="731" cy="1786.4" r="8" fill="#10c040"/><rect x="743" y="1779" width="4.4" height="15" fill="#f8e040"/><rect x="749.6" y="1779" width="4.4" height="15" fill="#f8e040"/><rect x="768" y="1779" width="2.4" height="15" fill="#e82040"/><rect x="772.4" y="1779" width="2.4" height="15" fill="#e82040"/></g>
<g fill="none" stroke="#fff" stroke-width="2.2"><rect x="817" y="1776.6" width="20" height="14.6"/><path d="M817 1774V1769.6H837V1774M817 1794V1798.4H837V1794M845.4 1769V1776M845.4 1784V1798.6"/></g><circle cx="845.4" cy="1780" r="3.2" fill="#fff"/>
<circle cx="933.8" cy="1784" r="21.8" fill="url(#tbard)"/><path d="M933.8 1784C930 1778 926 1777 923.4 1777C919 1777 916 1780 916 1784C916 1788 919 1791 923.4 1791C926 1791 930 1790 933.8 1784C937.6 1778 941.6 1777 944.2 1777C948.6 1777 951.6 1780 951.6 1784C951.6 1788 948.6 1791 944.2 1791C941.6 1791 937.6 1790 933.8 1784Z" fill="none" stroke="#fff" stroke-width="3.6"/><path d="M920.6 1784H926.4M941.4 1784H947.2M944.3 1781.1V1786.9" stroke="#fff" stroke-width="1.8"/>
<path d="M1007.8 1776L1032 1760.6L1056.4 1776V1780H1007.8Z" fill="#0a5cb8"/><path d="M1012 1775H1052V1792H1012Z" fill="#fff"/><path d="M1012 1775H1052L1050 1779H1014Z" fill="#d8dce4"/><path d="M1007.8 1776L1032 1790.6L1056.4 1776V1804.6H1007.8Z" fill="url(#tbmail)"/><path d="M1007.8 1804.6L1032 1790.6L1056.4 1804.6Z" fill="#1a8cdc"/><path d="M1007.8 1776L1032 1790.6L1007.8 1804.6Z" fill="#2aa8ec" opacity=".0"/>
<circle cx="1130" cy="1784" r="20.6" fill="url(#tbff)"/><path d="M1113 1772Q1116 1765 1120 1767Q1126 1762 1134 1764Q1136 1756 1142 1761Q1150 1768 1150.6 1782Q1146 1770 1138 1772Q1130 1766 1120 1772Z" fill="#ffc828"/><circle cx="1129" cy="1784.6" r="11.6" fill="url(#tbffg)"/><path d="M1118 1780Q1124 1775 1132 1777Q1138 1780 1136 1786Q1132 1783 1127 1785Q1122 1784 1118 1780Z" fill="#ff9a1e"/><path d="M1110 1786Q1112 1803 1130 1804.6Q1146 1803 1150.6 1786Q1144 1799 1130 1798Q1116 1798 1110 1786Z" fill="#ff3c68"/>
<path d="M1207 1768.4Q1207 1766.4 1209 1766.4H1224.6L1227.4 1769.6H1247.4Q1249.4 1769.6 1249.4 1771.6V1799Q1249.4 1801 1247.4 1801H1209Q1207 1801 1207 1799Z" fill="#ffd55c"/><path d="M1207 1768.4Q1207 1766.4 1209 1766.4H1224.6L1227.4 1769.6V1772.4H1207Z" fill="#e8a800"/><path d="M1214 1801V1786Q1214 1783.4 1216.6 1783.4H1239.4Q1242 1783.4 1242 1786V1801H1235.6V1790H1220.4V1801Z" fill="#3c9ce8"/>
<ellipse cx="1321" cy="1789" rx="19" ry="9" fill="#909090" stroke="#d84040" stroke-width="1" transform="rotate(-16 1321 1789)"/><ellipse cx="1324.5" cy="1775.6" rx="20.4" ry="12" fill="#f4f4f4" stroke="#e03030" stroke-width="1.8" transform="rotate(-18 1324.5 1775.6)"/><path d="M1312 1776L1336 1768M1314 1780L1330 1775" stroke="#d0d0d0" stroke-width="1.4"/><path d="M1322 1766L1330 1790M1308 1778L1334 1790" stroke="#8c9098" stroke-width="2.4"/><ellipse cx="1332" cy="1799" rx="4.2" ry="7" fill="none" stroke="#2890d8" stroke-width="3.2" transform="rotate(18 1332 1799)"/><ellipse cx="1342" cy="1792" rx="4.2" ry="7" fill="none" stroke="#2890d8" stroke-width="3.2" transform="rotate(-62 1342 1792)"/>
<path d="M1416 1763H1448.2V1790Q1448.2 1805.2 1433 1805.2H1400V1779Q1400 1763 1416 1763Z" fill="#fff"/><clipPath id="xclip"><path d="M1417 1765.6H1445.6V1789.6Q1445.6 1802.6 1432.6 1802.6H1402.6V1780Q1402.6 1765.6 1417 1765.6Z"/></clipPath><g clip-path="url(#xclip)"><rect x="1400" y="1763" width="50" height="44" fill="#0a9ce0"/><path d="M1446 1763L1412 1804H1450V1763Z" fill="#0a1c30"/><path d="M1400 1806L1446 1762M1410 1762L1440 1806" stroke="#fff" stroke-width="3.6"/></g>
<rect x="1498" y="1760.4" width="47.6" height="47.4" rx="5" fill="url(#gtitle)" stroke="#b8b8e8" stroke-width="1.4"/><path d="M1507 1771.4H1537L1507.6 1797.6H1539" fill="none" stroke="#f02424" stroke-width="3.6"/><path d="M1512 1776.6H1523L1533 1792.6H1522Z" fill="#58b0f0" opacity=".85"/><rect x="1504.4" y="1765.4" width="2.8" height="11" fill="#111"/><rect x="1538" y="1792" width="2.8" height="11" fill="#111"/>
<circle cx="1537" cy="1767.8" r="8.2" fill="#fff" stroke="#555" stroke-width="1"/><text x="1537" y="1772.4" font-family="Liberation Sans" font-size="12.5" text-anchor="middle" fill="#111">2</text>
<path d="M2101.6 1790.6L2114 1778.2L2126.4 1790.6" fill="none" stroke="#fff" stroke-width="2.2"/>
<g fill="none" stroke="#fff" stroke-width="2"><rect x="2170.6" y="1776.4" width="21" height="13.6"/><path d="M2193 1780V1786.4" stroke-width="2.6"/></g><rect x="2172.6" y="1778.4" width="17" height="9.6" fill="#fff"/><path d="M2163 1772.6V1776M2168 1772.6V1776M2161.6 1776.4H2169.4V1780Q2169.4 1783.6 2165.5 1783.6Q2161.6 1783.6 2161.6 1780ZM2165.5 1783.6V1787Q2165.5 1791.6 2170 1791.6" fill="none" stroke="#fff" stroke-width="1.8"/><rect x="2168" y="1777" width="5" height="12" fill="#1c2a1e" opacity=".0"/>
<g fill="none" stroke-linecap="butt"><path d="M2233 1797Q2235 1778 2254 1775.2" stroke="#8a9088" stroke-width="2.2"/><path d="M2239.4 1797Q2241 1784 2255 1781.6" stroke="#fff" stroke-width="2.4"/><path d="M2245.6 1797Q2247 1789.6 2255.6 1788" stroke="#fff" stroke-width="2.4"/></g><circle cx="2253.4" cy="1795.4" r="2.8" fill="#fff"/>
<g fill="#fff"><path d="M2297.4 1770.6L2305 1775.4L2297.4 1780.2L2289.8 1775.4Z"/><path d="M2312.6 1770.6L2320.2 1775.4L2312.6 1780.2L2305 1775.4Z"/><path d="M2312.6 1780.2L2320.2 1785L2312.6 1789.8L2305 1785Z"/><path d="M2305 1790.6L2310 1793.8L2305 1797L2300 1793.8Z"/></g><rect x="2289.4" y="1781" width="15.6" height="17.6" rx="3" fill="#e41030"/><text x="2297.2" y="1795" font-family="Liberation Sans" font-weight="700" font-size="13" text-anchor="middle" fill="#fff">2</text>
<g fill="none" stroke="#fff" stroke-width="2.2"><path d="M2383 1771.6Q2386 1768.6 2389 1771.6Q2392 1774.6 2389 1777.6L2376 1798L2369.6 1800L2370.6 1793.6Z"/><path d="M2380 1776L2386.4 1781"/><path d="M2372 1790Q2362 1789 2362.4 1795Q2363 1800.6 2370 1799.6M2388 1784Q2397 1782 2394 1789"/></g>
<path d="M2654.6 1769H2685.4V1790H2664L2658.6 1795.6V1790H2654.6Z" fill="#fff"/><path d="M2659 1774.4H2681M2659 1779H2681M2659 1783.6H2681" stroke="#1c2a1e" stroke-width="1.6"/><circle cx="2684" cy="1798.4" r="15.8" fill="#5c625c" stroke="#8a908a" stroke-width="1.6"/><text x="2684" y="1807" font-family="Liberation Sans" font-weight="700" font-size="23" text-anchor="middle" fill="#fff">1</text>
</svg>
</body></html>
